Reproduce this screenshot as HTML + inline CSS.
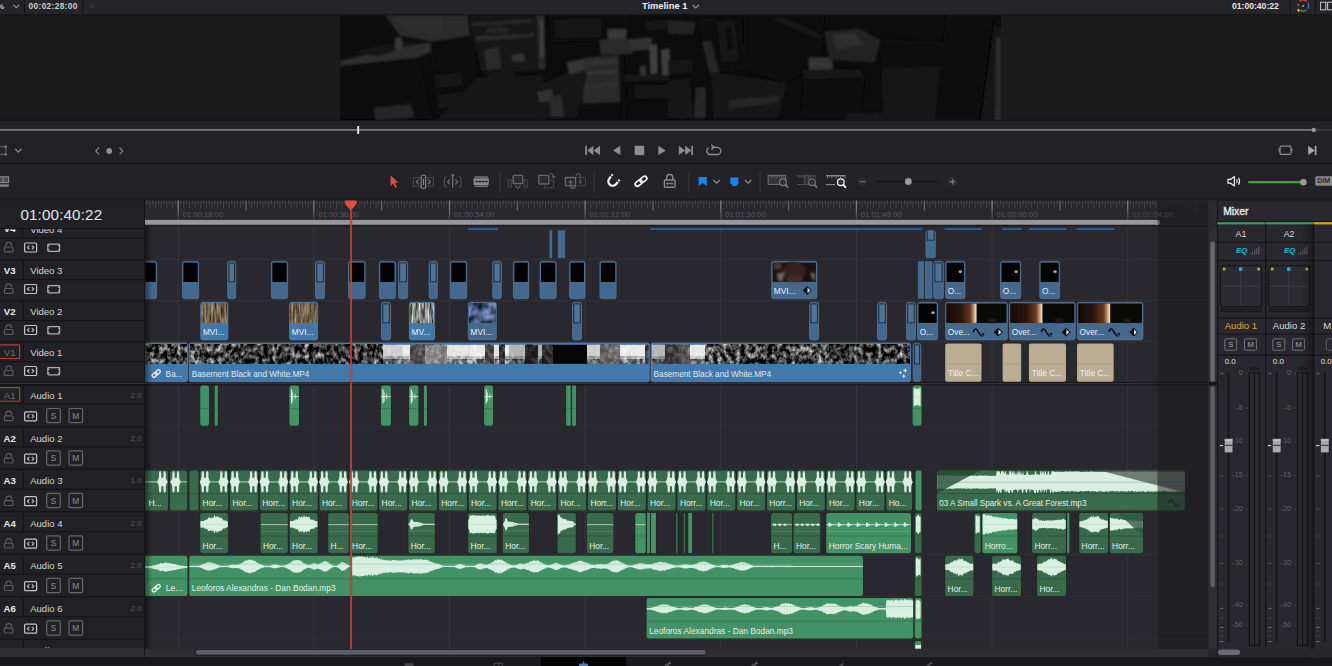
<!DOCTYPE html>
<html><head><meta charset="utf-8"><title>Timeline 1</title>
<style>
html,body{margin:0;padding:0;background:#1e1e22;}
body{width:1332px;height:666px;overflow:hidden;position:relative;font-family:"Liberation Sans", sans-serif;}
#root{position:absolute;left:0;top:0;width:1332px;height:666px;overflow:hidden;}
#root div{position:absolute;box-sizing:border-box;}
svg{position:absolute;left:0;top:0;}
</style></head><body><div id="root">
<svg width="1332" height="666" viewBox="0 0 1332 666">
<defs>
<filter id="blur3" x="-20%" y="-20%" width="140%" height="140%"><feGaussianBlur stdDeviation="3"/></filter>
<filter id="blur1" x="-20%" y="-20%" width="140%" height="140%"><feGaussianBlur stdDeviation="1.2"/></filter>
<filter id="blur6" x="-30%" y="-30%" width="160%" height="160%"><feGaussianBlur stdDeviation="6"/></filter>
<filter id="nzD" x="0" y="0" width="100%" height="100%" color-interpolation-filters="sRGB"><feTurbulence type="fractalNoise" baseFrequency="0.22 0.17" numOctaves="4" seed="5"/><feColorMatrix type="matrix" values="1.8 0 0 0 -0.64  1.8 0 0 0 -0.64  1.8 0 0 0 -0.64  0 0 0 0 1"/></filter>
<filter id="nzB" x="0" y="0" width="100%" height="100%" color-interpolation-filters="sRGB"><feTurbulence type="fractalNoise" baseFrequency="0.08 0.14" numOctaves="3" seed="11"/><feColorMatrix type="matrix" values="3.4 0 0 0 -1.1  3.4 0 0 0 -1.1  3.4 0 0 0 -1.1  0 0 0 0 1"/></filter>
<filter id="nzW" x="0" y="0" width="100%" height="100%" color-interpolation-filters="sRGB"><feTurbulence type="fractalNoise" baseFrequency="0.6 0.06" numOctaves="3" seed="8"/><feColorMatrix type="matrix" values="0.8 0 0 0 0.04  0.72 0 0 0 0.02  0.6 0 0 0 0.0  0 0 0 0 1"/></filter>
<filter id="nzG" x="0" y="0" width="100%" height="100%" color-interpolation-filters="sRGB"><feTurbulence type="fractalNoise" baseFrequency="0.5 0.05" numOctaves="3" seed="4"/><feColorMatrix type="matrix" values="1.5 0 0 0 -0.2  1.5 0 0 0 -0.2  1.5 0 0 0 -0.2  0 0 0 0 1"/></filter>
<filter id="nzBl" x="0" y="0" width="100%" height="100%" color-interpolation-filters="sRGB"><feTurbulence type="fractalNoise" baseFrequency="0.12 0.1" numOctaves="2" seed="9"/><feColorMatrix type="matrix" values="1.0 0 0 0 -0.22  1.15 0 0 0 -0.22  1.35 0 0 0 -0.18  0 0 0 0 1"/></filter>
<clipPath id="tlclip"><rect x="145.2" y="226" width="1063.3" height="423"/></clipPath>
<clipPath id="viewclip"><rect x="340" y="15" width="661" height="105"/></clipPath>
</defs>
<rect x="0.00" y="0.00" width="1332.00" height="14.30" fill="#242429"/>
<rect x="0.00" y="14.30" width="1332.00" height="1.00" fill="#141417"/>
<rect x="0.00" y="15.30" width="1332.00" height="105.00" fill="#1b1b1b"/>
<rect x="0.00" y="120.00" width="1332.00" height="44.00" fill="#222226"/>
<rect x="0.00" y="119.80" width="1332.00" height="1.20" fill="#151517"/>
<rect x="0.00" y="163.00" width="1332.00" height="1.20" fill="#141417"/>
<rect x="0.00" y="164.20" width="1332.00" height="36.00" fill="#232327"/>
<rect x="0.00" y="199.60" width="1332.00" height="1.00" fill="#141417"/>
<rect x="0.00" y="200.50" width="145.00" height="457.00" fill="#212125"/>
<rect x="145.00" y="200.50" width="1063.50" height="448.50" fill="#28282e"/>
<rect x="144.00" y="200.50" width="1.20" height="457.00" fill="#141417"/>
<rect x="24.00" y="0.00" width="1.00" height="14.30" fill="#141417"/>
<rect x="82.30" y="0.00" width="1.00" height="14.30" fill="#141417"/>
<rect x="1289.50" y="0.00" width="1.00" height="14.30" fill="#141417"/>
<rect x="1315.00" y="0.00" width="1.00" height="14.30" fill="#141417"/>
<path d="M13.5 4.8 L16.3 7.8 L19.1 4.8" fill="none" stroke="#9a9a9e" stroke-width="1.1" />
<circle cx="92.3" cy="6" r="2" fill="none" stroke="#3a3a40" stroke-width="1"/>
<path d="M692.6 4.8 L695.8 8 L699 4.8" fill="none" stroke="#9a9a9e" stroke-width="1.1" />
<g fill="none" stroke-width="1.3"><path d="M1299.4 1.4 A5.4 5.4 0 0 1 1307 1.6" stroke="#d9463a"/><path d="M1308 2.8 A5.4 5.4 0 0 1 1307.6 8.8" stroke="#3f6fd1"/><path d="M1306.4 10 A5.4 5.4 0 0 1 1300.6 10.4" stroke="#43a047"/></g><circle cx="1303.2" cy="6" r="1.1" fill="#d98a50"/><path d="M1298.6 8.2 l0.7 1.4 1.4 0.7 -1.4 0.7 -0.7 1.4 -0.7 -1.4 -1.4 -0.7 1.4 -0.7z" fill="#e0b040"/><path d="M1298.2 3.6 l0.4 0.9 0.9 0.4 -0.9 0.4 -0.4 0.9 -0.4 -0.9 -0.9 -0.4 0.9 -0.4z" fill="#e0b040"/>
<rect x="1320.60" y="2.20" width="5.20" height="7.60" fill="none" stroke="#c8c8c8" stroke-width="1"/>
<rect x="1327.60" y="2.20" width="5.20" height="7.60" fill="none" stroke="#c8c8c8" stroke-width="1"/>
<g clip-path="url(#viewclip)">
<rect x="340" y="15" width="661" height="105" fill="#0c0c0c"/>
<g filter="url(#blur1)">
<polygon points="339.8,15.0 384.9,15.0 399.9,37.1 339.8,62.1" fill="#090909"/>
<polygon points="384.9,15.0 467.6,15.0 470.1,37.1 453.8,43.3 431.2,41.6 399.9,35.8" fill="#292929"/>
<polygon points="393.6,17.0 441.3,16.0 443.8,32.1 411.2,34.6" fill="#2f2f2f"/>
<polygon points="339.8,60.9 398.7,47.1 437.5,41.6 445.0,44.6 418.7,57.6 339.8,66.1" fill="#2f2f2f"/>
<polygon points="351.0,52.1 396.2,42.1 421.2,42.1 378.6,56.6" fill="#121212"/>
<polygon points="394.9,38.3 401.7,37.6 402.7,49.6 395.6,50.6" fill="#383838"/>
<polygon points="339.8,66.1 418.7,57.6 432.5,119.8 339.8,119.8" fill="#090909"/>
<polygon points="430.0,42.1 472.6,35.1 480.1,87.2 471.3,112.3 436.3,114.8" fill="#0b0b0b"/>
<polygon points="434.2,75.2 461.3,72.2 462.6,85.2 435.7,88.2" fill="#151515"/>
<polygon points="436.8,95.2 464.3,91.7 465.1,105.2 438.3,108.7" fill="#151515"/>
<polygon points="373.6,107.7 411.2,104.2 414.2,117.3 376.1,120.3" fill="#272727"/>
<polygon points="468.8,15.0 536.5,15.0 536.5,70.9 481.4,72.2 472.6,35.8" fill="#121212"/>
<polygon points="471.3,22.5 531.5,19.0 532.0,23.0 471.8,26.5" fill="#272727"/>
<polygon points="475.3,36.1 534.0,33.6 534.0,37.1 476.4,41.1" fill="#292929"/>
<polygon points="486.4,27.0 508.9,27.5 508.9,33.6 486.4,34.1" fill="#232323"/>
<polygon points="483.9,49.6 498.9,47.1 501.4,68.6 486.4,70.1" fill="#292929"/>
<polygon points="501.4,49.6 526.5,47.1 529.0,62.1 508.9,65.6" fill="#161616"/>
<polygon points="511.4,54.6 524.0,53.4 525.2,60.9 512.7,62.1" fill="#323232"/>
<polygon points="536.5,15.0 544.5,15.0 545.5,69.1 538.0,70.1" fill="#2b2b2b"/>
<polygon points="540.5,19.5 543.0,19.5 543.5,57.1 541.0,57.6" fill="#434343"/>
<polygon points="476.4,77.7 544.0,74.7 544.0,119.8 436.3,119.8" fill="#121212"/>
<polygon points="486.4,73.4 511.4,70.1 516.5,77.7 488.9,80.9" fill="#191919"/>
<polygon points="549.0,15.0 629.2,15.0 629.2,39.6 551.5,42.1" fill="#0f0f0f"/>
<polygon points="554.5,20.0 600.7,19.0 601.2,36.6 555.5,38.1" fill="#191919"/>
<polygon points="607.2,29.5 626.7,29.0 625.7,39.1 608.2,39.6" fill="#373737"/>
<polygon points="599.2,40.1 631.7,39.1 632.7,54.1 600.7,55.1" fill="#2a2a2a"/>
<polygon points="629.2,39.6 651.8,37.1 652.3,49.6 631.7,51.1" fill="#303030"/>
<polygon points="584.1,57.6 618.7,55.1 620.2,102.2 582.6,103.7" fill="#2b2b2b"/>
<polygon points="586.6,62.1 616.7,60.1 617.2,63.1 587.1,65.1" fill="#363636"/>
<polygon points="586.6,72.2 616.7,70.1 617.2,73.2 587.1,75.2" fill="#353535"/>
<polygon points="585.6,84.7 617.7,82.7 618.2,85.7 586.1,87.7" fill="#323232"/>
<polygon points="536.5,87.2 584.1,64.6 586.6,77.2 576.6,117.3 544.0,117.3" fill="#151515"/>
<polygon points="566.6,62.1 584.1,59.1 585.6,70.1 569.1,74.7" fill="#363636"/>
<polygon points="536.5,92.2 551.5,88.7 554.5,99.7 539.5,102.7" fill="#303030"/>
<polygon points="549.0,97.2 561.6,94.7 564.1,117.3 551.0,117.3" fill="#292929"/>
<polygon points="624.2,74.7 669.8,73.7 669.8,80.7 624.2,81.7" fill="#141414"/>
<polygon points="634.2,85.2 669.8,84.2 669.8,97.7 635.2,98.7" fill="#171717"/>
<polygon points="649.3,45.1 657.3,44.1 657.8,73.2 650.3,74.2" fill="#3f3f3f"/>
<polygon points="660.8,49.6 669.8,48.6 669.8,74.7 661.8,75.2" fill="#3c3c3c"/>
<polygon points="639.8,65.9 645.8,65.4 646.3,75.2 640.3,75.7" fill="#363636"/>
<polygon points="644.3,22.0 669.8,19.5 669.8,29.5 646.8,31.0" fill="#191919"/>
<polygon points="620.7,57.1 624.2,57.1 626.7,119.8 621.7,119.8" fill="#080808"/>
<polygon points="668.0,19.6 695.7,22.1 693.2,34.7 668.0,33.7" fill="#232323"/>
<polygon points="668.0,59.9 693.2,58.9 692.2,72.5 668.0,73.6" fill="#171717"/>
<polygon points="668.0,80.1 690.7,78.1 693.2,118.0 668.0,119.0" fill="#121212"/>
<polygon points="695.7,87.7 705.8,86.7 705.8,118.0 694.2,118.0" fill="#272727"/>
<polygon points="698.3,19.6 741.2,18.1 743.7,70.0 710.9,71.5" fill="#111111"/>
<polygon points="717.4,22.1 734.1,21.1 738.6,59.9 722.0,61.4" fill="#171717"/>
<polygon points="724.8,27.1 730.6,26.6 733.1,49.8 727.5,50.8" fill="#0f0f0f"/>
<polygon points="702.1,42.3 710.9,41.0 722.2,85.2 713.4,87.7" fill="#272727"/>
<polygon points="710.9,71.5 786.6,83.1 779.0,118.0 713.4,118.0" fill="#131313"/>
<polygon points="718.5,75.1 776.5,84.1 774.0,95.2 721.0,89.2" fill="#191919"/>
<polygon points="728.5,100.3 779.0,95.2 778.5,102.8 729.0,108.9" fill="#272727"/>
<polygon points="755.8,55.4 781.0,64.0 779.0,75.6 756.8,69.0" fill="#363636"/>
<polygon points="743.7,15.0 824.4,15.0 821.9,62.5 786.6,82.6 743.7,70.0" fill="#080808"/>
<polygon points="768.9,18.1 784.0,17.0 824.4,36.2 819.4,39.7" fill="#171717"/>
<polygon points="808.3,57.9 832.0,56.9 833.0,71.5 809.8,73.0" fill="#363636"/>
<polygon points="824.4,31.2 859.7,28.6 880.4,39.7 874.9,62.5 829.5,59.9" fill="#232323"/>
<polygon points="832.0,34.7 854.7,32.7 864.8,44.8 837.0,49.8" fill="#2d2d2d"/>
<polygon points="801.7,70.0 859.7,69.0 864.8,77.6 804.2,80.1" fill="#121212"/>
<polygon points="804.2,80.1 864.8,78.1 859.7,118.0 801.7,118.0" fill="#0a0a0a"/>
<polygon points="879.9,39.7 953.1,41.8 945.5,65.5 882.4,67.0" fill="#0b0b0b"/>
<polygon points="882.4,68.0 946.5,65.5 941.5,118.0 882.9,118.0" fill="#131313"/>
<polygon points="885.0,85.2 943.0,75.1 942.0,95.2 885.5,102.8" fill="#171717"/>
<polygon points="945.5,15.0 993.9,15.0 979.3,120.5 935.4,120.5" fill="#070707"/>
<polygon points="993.9,27.1 1001.5,27.1 1001.5,120.5 980.8,120.5" fill="#131313"/>
<polygon points="996.0,37.2 1001.5,37.2 1001.5,120.5 994.9,120.5" fill="#292929"/>
<polygon points="844.6,112.9 935.4,111.9 935.4,120.5 844.6,120.5" fill="#121212"/>
</g>
</g>
<rect x="0.00" y="129.20" width="1313.50" height="1.40" fill="#8c8c90"/>
<rect x="1313.50" y="129.40" width="20.00" height="1.00" fill="#4a4a4e"/>
<rect x="357.30" y="126.00" width="1.80" height="8.00" fill="#f2f2f2"/>
<circle cx="1313.8" cy="129.9" r="2.2" fill="#9a9a9e"/>
<path d="M0 146.6 H5.8 V154.4 H0" fill="none" stroke="#5e5e62" stroke-width="1.1" />
<rect x="4.80" y="145.60" width="2.00" height="2.00" fill="#8a8a8e"/>
<rect x="4.80" y="153.40" width="2.00" height="2.00" fill="#8a8a8e"/>
<path d="M15.3 149 L18.3 152.2 L21.3 149" fill="none" stroke="#8a8a8e" stroke-width="1.2" />
<path d="M99 147.5 L95.8 150.9 L99 154.3" fill="none" stroke="#8a8a8e" stroke-width="1.1" />
<circle cx="109.2" cy="151" r="2.9" fill="#8e8e92"/>
<path d="M119.6 147.5 L122.8 150.9 L119.6 154.3" fill="none" stroke="#8a8a8e" stroke-width="1.1" />
<rect x="585.20" y="145.80" width="1.70" height="9.20" fill="#8e8e92"/>
<path d="M593.4 145.8 L587.2 150.4 L593.4 155 Z" fill="#8e8e92" stroke="none" stroke-width="1" />
<path d="M600 145.8 L593.6 150.4 L600 155 Z" fill="#8e8e92" stroke="none" stroke-width="1" />
<path d="M620.3 145.8 L613 150.4 L620.3 155 Z" fill="#8e8e92" stroke="none" stroke-width="1" />
<rect x="634.70" y="145.80" width="9.50" height="9.30" fill="#8e8e92"/>
<path d="M658.4 145.8 L665.8 150.4 L658.4 155 Z" fill="#8e8e92" stroke="none" stroke-width="1" />
<path d="M678.8 145.8 L685.2 150.4 L678.8 155 Z" fill="#8e8e92" stroke="none" stroke-width="1" />
<path d="M685.2 145.8 L691.4 150.4 L685.2 155 Z" fill="#8e8e92" stroke="none" stroke-width="1" />
<rect x="691.30" y="145.80" width="1.70" height="9.20" fill="#8e8e92"/>
<path d="M711.5 147.3 H717.2 A3.6 3.6 0 0 1 717.2 154.5 H710.2 A3.6 3.6 0 0 1 708.6 147.8" fill="none" stroke="#8e8e92" stroke-width="1.3" />
<path d="M711.2 144.8 L714 147.3 L711.2 149.9" fill="none" stroke="#8e8e92" stroke-width="1.2" />
<rect x="1280.00" y="146.20" width="11.00" height="8.20" fill="none" rx="1.2" stroke="#8e8e92" stroke-width="1.2"/>
<path d="M1278.6 148.6 L1280.8 150.3 L1278.6 152 Z" fill="#8e8e92" stroke="none" stroke-width="1" />
<path d="M1292.4 148.6 L1290.2 150.3 L1292.4 152 Z" fill="#8e8e92" stroke="none" stroke-width="1" />
<path d="M1308.2 145.8 L1314.8 150.4 L1308.2 155 Z" fill="#a8a8ac" stroke="none" stroke-width="1" />
<rect x="1314.80" y="145.80" width="1.70" height="9.20" fill="#a8a8ac"/>
<rect x="-1.00" y="176.80" width="9.60" height="5.80" fill="#4a4a4e" stroke="#8a8a8e" stroke-width="1.1"/>
<rect x="2.40" y="176.80" width="1.00" height="5.80" fill="#8a8a8e"/>
<rect x="0.00" y="184.40" width="8.80" height="2.40" fill="#808084"/>
<path d="M390.6 175.6 L390.6 186 L393.2 183.6 L395.3 187.9 L396.9 187.1 L394.9 182.9 L398.4 182.6 Z" fill="#e64a3c" stroke="none" stroke-width="1" />
<rect x="413.40" y="177.60" width="20.00" height="8.60" fill="none" stroke="#4c4c50" stroke-width="1"/>
<rect x="421.20" y="175.20" width="4.40" height="13.00" fill="#232327" rx="1" stroke="#85858a" stroke-width="1.1"/>
<rect x="423.00" y="178.60" width="1.00" height="6.40" fill="#85858a"/>
<path d="M418.8 179.5 L416.4 181.9 L418.8 184.3" fill="none" stroke="#6e6e73" stroke-width="1.25" />
<path d="M428 179.5 L430.4 181.9 L428 184.3" fill="none" stroke="#6e6e73" stroke-width="1.25" />
<path d="M446.6 176.8 Q444.4 177 444.4 179.2 V184.6 Q444.4 186.8 446.6 187" fill="none" stroke="#505055" stroke-width="1.1" />
<path d="M458.8 176.8 Q461 177 461 179.2 V184.6 Q461 186.8 458.8 187" fill="none" stroke="#505055" stroke-width="1.1" />
<path d="M450 179.5 L447.6 181.9 L450 184.3" fill="none" stroke="#6e6e73" stroke-width="1.25" />
<path d="M455.4 179.5 L457.8 181.9 L455.4 184.3" fill="none" stroke="#6e6e73" stroke-width="1.25" />
<rect x="452.20" y="175.40" width="1.00" height="12.40" fill="#85858a"/>
<path d="M450.8 174.6 H454.6 L452.7 176.8 Z" fill="#85858a" stroke="none" stroke-width="1" />
<rect x="473.60" y="178.20" width="15.20" height="6.80" fill="#8a8a8e" rx="1"/>
<rect x="474.60" y="176.40" width="13.20" height="1.20" fill="#8a8a8e"/>
<rect x="474.60" y="185.60" width="13.20" height="1.20" fill="#8a8a8e"/>
<path d="M475.6 181.6 l1.1 -1.3 1.1 1.3 -1.1 1.3z" fill="#232327" stroke="none" stroke-width="1" />
<path d="M478.9 181.6 l1.1 -1.3 1.1 1.3 -1.1 1.3z" fill="#232327" stroke="none" stroke-width="1" />
<path d="M482.2 181.6 l1.1 -1.3 1.1 1.3 -1.1 1.3z" fill="#232327" stroke="none" stroke-width="1" />
<path d="M485.5 181.6 l1.1 -1.3 1.1 1.3 -1.1 1.3z" fill="#232327" stroke="none" stroke-width="1" />
<rect x="475.60" y="181.20" width="12.00" height="0.80" fill="#232327"/>
<rect x="499.40" y="171.20" width="1.00" height="21.00" fill="#39393e"/>
<rect x="593.60" y="171.20" width="1.00" height="21.00" fill="#39393e"/>
<rect x="688.60" y="171.20" width="1.00" height="21.00" fill="#39393e"/>
<rect x="759.60" y="171.20" width="1.00" height="21.00" fill="#39393e"/>
<rect x="513.20" y="175.40" width="9.50" height="8.30" fill="#2c2c31" rx="0.8" stroke="#68686c" stroke-width="1.3"/>
<rect x="508.40" y="179.50" width="2.80" height="7.80" fill="none" rx="0.6" stroke="#47474b" stroke-width="1.1"/>
<rect x="524.30" y="179.50" width="2.80" height="7.80" fill="none" rx="0.6" stroke="#47474b" stroke-width="1.1"/>
<path d="M515.2 185.7 L517.9 188.3 L520.6 185.7" fill="none" stroke="#5a5a5e" stroke-width="1.2" />
<path d="M544.4 185 V187.8 H553.6 V180.2 H550" fill="none" stroke="#47474b" stroke-width="1.1" />
<rect x="538.80" y="175.40" width="10.00" height="8.60" fill="#2c2c31" rx="0.8" stroke="#68686c" stroke-width="1.3"/>
<path d="M549.6 173.6 Q553.6 173.4 553.8 177.4" fill="none" stroke="#5a5a5e" stroke-width="1.1" />
<path d="M552 176.2 L553.8 178 L555.5 176.2" fill="none" stroke="#5a5a5e" stroke-width="1.1" />
<path d="M577 177.5 H584.6 Q585.6 177.5 585.6 178.5 V184.8 Q585.6 185.8 584.6 185.8 H577" fill="none" stroke="#47474b" stroke-width="1.1" />
<rect x="565.30" y="177.50" width="10.30" height="8.30" fill="#29292e" rx="1" stroke="#68686c" stroke-width="1.3"/>
<path d="M570.6 181 V186.6 Q570.8 188.4 572.8 188.4 Q575 188.4 575.3 186.2" fill="none" stroke="#68686c" stroke-width="1.2" />
<path d="M568.7 182.8 L570.6 180.9 L572.5 182.8" fill="none" stroke="#68686c" stroke-width="1.2" />
<path d="M580.3 183 V175.6 Q580.1 173.7 578.2 173.7 Q576.2 173.7 576 176.2" fill="none" stroke="#5a5a5e" stroke-width="1.1" />
<path d="M578.5 181.3 L580.3 183.1 L582.1 181.3" fill="none" stroke="#5a5a5e" stroke-width="1.1" />
<g transform="rotate(38 613 181)" fill="none" stroke="#f2f2f2" stroke-width="2.3"><path d="M608.6 176 V181.4 A4.4 4.4 0 0 0 617.4 181.4 V176"/></g>
<g transform="rotate(38 613 181)" fill="#232327"><rect x="607" y="177.6" width="3.4" height="1.1"/><rect x="615.8" y="177.6" width="3.4" height="1.1"/></g>
<g transform="rotate(-38 641 181.2)" fill="none" stroke="#f2f2f2" stroke-width="1.7"><rect x="634.2" y="179" width="7.6" height="4.4" rx="2.2"/><rect x="640.2" y="179" width="7.6" height="4.4" rx="2.2"/></g>
<path d="M666.6 180 V177.6 A3.1 3.1 0 0 1 672.8 177.6 V180" fill="none" stroke="#8a8a8e" stroke-width="1.4" />
<rect x="664.40" y="180.00" width="10.60" height="7.20" fill="none" rx="1" stroke="#8a8a8e" stroke-width="1.4"/>
<path d="M666.6 183.6 H672.8 M668 182.2 L666.6 183.6 L668 185 M671.4 182.2 L672.8 183.6 L671.4 185" fill="none" stroke="#8a8a8e" stroke-width="0.9" />
<path d="M698.6 177 H706.8 V186.2 L702.7 183 L698.6 186.2 Z" fill="#1884e8" stroke="none" stroke-width="1" />
<path d="M713.4 180 L716.6 183.2 L719.8 180" fill="none" stroke="#8a8a8e" stroke-width="1.2" />
<path d="M730.4 177.4 H738.4 V183.4 L736 186 H732.8 L730.4 183.4 Z" fill="#1884e8" stroke="none" stroke-width="1" />
<path d="M745 180 L748.2 183.2 L751.4 180" fill="none" stroke="#8a8a8e" stroke-width="1.2" />
<rect x="768.20" y="175.40" width="17.40" height="9.00" fill="#343438" stroke="#6e6e73" stroke-width="1.1"/>
<rect x="770.20" y="175.40" width="0.80" height="1.80" fill="#6e6e73"/>
<rect x="772.40" y="175.40" width="0.80" height="2.80" fill="#6e6e73"/>
<rect x="774.60" y="175.40" width="0.80" height="1.80" fill="#6e6e73"/>
<rect x="776.80" y="175.40" width="0.80" height="2.80" fill="#6e6e73"/>
<rect x="779.00" y="175.40" width="0.80" height="1.80" fill="#6e6e73"/>
<rect x="781.20" y="175.40" width="0.80" height="2.80" fill="#6e6e73"/>
<rect x="783.40" y="175.40" width="0.80" height="1.80" fill="#6e6e73"/>
<circle cx="783.0" cy="182.2" r="3.3" fill="#232327" stroke="#7c7c80" stroke-width="1.3"/>
<circle cx="783.0" cy="182.2" r="1.4" fill="#3a3a3e"/>
<line x1="785.60" y1="185.00" x2="787.60" y2="187.20" stroke="#7c7c80" stroke-width="1.9" stroke-linecap="round"/>
<rect x="797.20" y="175.40" width="19.00" height="1.00" fill="#505055"/>
<rect x="797.20" y="184.00" width="8.00" height="1.00" fill="#505055"/>
<rect x="804.80" y="175.40" width="4.20" height="9.00" fill="#2e2e32" stroke="#505055" stroke-width="1.1"/>
<rect x="798.20" y="175.40" width="0.80" height="2.60" fill="#505055"/>
<rect x="800.60" y="175.40" width="0.80" height="2.60" fill="#505055"/>
<rect x="803.00" y="175.40" width="0.80" height="2.60" fill="#505055"/>
<rect x="805.40" y="175.40" width="0.80" height="2.60" fill="#505055"/>
<rect x="807.80" y="175.40" width="0.80" height="2.60" fill="#505055"/>
<rect x="810.20" y="175.40" width="0.80" height="2.60" fill="#505055"/>
<rect x="812.60" y="175.40" width="0.80" height="2.60" fill="#505055"/>
<rect x="815.00" y="175.40" width="0.80" height="2.60" fill="#505055"/>
<circle cx="812.0" cy="182.2" r="3.3" fill="#232327" stroke="#707075" stroke-width="1.3"/>
<circle cx="812.0" cy="182.2" r="1.4" fill="#3a3a3e"/>
<line x1="814.60" y1="185.00" x2="816.60" y2="187.20" stroke="#707075" stroke-width="1.9" stroke-linecap="round"/>
<rect x="826.00" y="175.00" width="19.40" height="1.20" fill="#8a8a8e"/>
<rect x="826.00" y="184.00" width="9.00" height="1.20" fill="#8a8a8e"/>
<rect x="827.00" y="175.00" width="0.90" height="3.40" fill="#8a8a8e"/>
<rect x="829.20" y="175.00" width="0.90" height="2.20" fill="#8a8a8e"/>
<rect x="831.40" y="175.00" width="0.90" height="3.40" fill="#8a8a8e"/>
<rect x="833.60" y="175.00" width="0.90" height="2.20" fill="#8a8a8e"/>
<rect x="835.80" y="175.00" width="0.90" height="3.40" fill="#8a8a8e"/>
<rect x="838.00" y="175.00" width="0.90" height="2.20" fill="#8a8a8e"/>
<rect x="840.20" y="175.00" width="0.90" height="3.40" fill="#8a8a8e"/>
<rect x="842.40" y="175.00" width="0.90" height="2.20" fill="#8a8a8e"/>
<rect x="844.60" y="175.00" width="0.90" height="3.40" fill="#8a8a8e"/>
<circle cx="840.8" cy="182.2" r="3.3" fill="#232327" stroke="#f4f4f4" stroke-width="1.3"/>
<circle cx="840.8" cy="182.2" r="1.4" fill="#3a3a3e"/>
<line x1="843.40" y1="185.00" x2="845.40" y2="187.20" stroke="#f4f4f4" stroke-width="1.9" stroke-linecap="round"/>
<circle cx="862.4" cy="181.6" r="4.6" fill="#2b2b30"/>
<rect x="859.60" y="181.00" width="5.60" height="1.30" fill="#6a6a6e"/>
<rect x="876.40" y="180.70" width="61.60" height="1.80" fill="#141416" rx="0.9"/>
<circle cx="908.3" cy="181.5" r="3.4" fill="#9a9a9c"/>
<circle cx="952.6" cy="181.6" r="4.6" fill="#2b2b30"/>
<rect x="949.80" y="181.00" width="5.60" height="1.30" fill="#77777b"/>
<rect x="952.00" y="178.80" width="1.30" height="5.60" fill="#77777b"/>
<path d="M1228 179.4 H1230.6 L1234.4 176.6 V186 L1230.6 183.2 H1228 Z" fill="none" stroke="#f0f0f0" stroke-width="1.2" stroke-linejoin="round"/>
<path d="M1236.6 179.4 Q1237.8 181.3 1236.6 183.2" fill="none" stroke="#f0f0f0" stroke-width="1.1" />
<path d="M1238.6 177.8 Q1240.6 181.3 1238.6 184.8" fill="none" stroke="#f0f0f0" stroke-width="1.1" />
<rect x="1248.00" y="181.10" width="53.50" height="2.20" fill="#37a62f" rx="1"/>
<circle cx="1303.4" cy="182.2" r="3.3" fill="#9a9a9c"/>
<rect x="1315.30" y="176.20" width="20.00" height="9.60" fill="#88888a" rx="1.5"/>
<rect x="145.00" y="200.50" width="1063.50" height="25.50" fill="#28282e"/>
<linearGradient id="majg" x1="0" x2="0" y1="0" y2="1"><stop offset="0" stop-color="#8c8c92"/><stop offset="0.35" stop-color="#77777d"/><stop offset="1" stop-color="#38383e"/></linearGradient>
<linearGradient id="majd" x1="0" x2="0" y1="0" y2="1"><stop offset="0" stop-color="#4c4c52"/><stop offset="1" stop-color="#2e2e33"/></linearGradient>
<rect x="146.66" y="200.80" width="0.90" height="3.40" fill="#505056"/>
<rect x="149.49" y="200.80" width="0.90" height="7.40" fill="#45454b"/>
<rect x="152.32" y="200.80" width="0.90" height="3.40" fill="#505056"/>
<rect x="155.14" y="200.80" width="0.90" height="7.40" fill="#45454b"/>
<rect x="157.97" y="200.80" width="0.90" height="3.40" fill="#505056"/>
<rect x="160.79" y="200.80" width="0.90" height="7.40" fill="#45454b"/>
<rect x="163.62" y="200.80" width="0.90" height="3.40" fill="#505056"/>
<rect x="166.45" y="200.80" width="0.90" height="7.40" fill="#45454b"/>
<rect x="169.27" y="200.80" width="0.90" height="3.40" fill="#505056"/>
<rect x="172.10" y="200.80" width="0.90" height="7.40" fill="#45454b"/>
<rect x="174.92" y="200.80" width="0.90" height="3.40" fill="#505056"/>
<rect x="177.55" y="200.60" width="1.30" height="19.40" fill="url(#majg)"/>
<rect x="180.58" y="200.80" width="0.90" height="3.40" fill="#505056"/>
<rect x="183.40" y="200.80" width="0.90" height="7.40" fill="#45454b"/>
<rect x="186.23" y="200.80" width="0.90" height="3.40" fill="#505056"/>
<rect x="189.05" y="200.80" width="0.90" height="7.40" fill="#45454b"/>
<rect x="191.88" y="200.80" width="0.90" height="3.40" fill="#505056"/>
<rect x="194.71" y="200.80" width="0.90" height="7.40" fill="#45454b"/>
<rect x="197.53" y="200.80" width="0.90" height="3.40" fill="#505056"/>
<rect x="200.36" y="200.80" width="0.90" height="7.40" fill="#45454b"/>
<rect x="203.18" y="200.80" width="0.90" height="3.40" fill="#505056"/>
<rect x="206.01" y="200.80" width="0.90" height="7.40" fill="#45454b"/>
<rect x="208.84" y="200.80" width="0.90" height="3.40" fill="#505056"/>
<rect x="211.66" y="200.80" width="0.90" height="7.40" fill="#45454b"/>
<rect x="214.49" y="200.80" width="0.90" height="3.40" fill="#505056"/>
<rect x="217.31" y="200.80" width="0.90" height="7.40" fill="#45454b"/>
<rect x="220.14" y="200.80" width="0.90" height="3.40" fill="#505056"/>
<rect x="222.97" y="200.80" width="0.90" height="7.40" fill="#45454b"/>
<rect x="225.79" y="200.80" width="0.90" height="3.40" fill="#505056"/>
<rect x="228.62" y="200.80" width="0.90" height="7.40" fill="#45454b"/>
<rect x="231.44" y="200.80" width="0.90" height="3.40" fill="#505056"/>
<rect x="234.27" y="200.80" width="0.90" height="7.40" fill="#45454b"/>
<rect x="237.10" y="200.80" width="0.90" height="3.40" fill="#505056"/>
<rect x="239.92" y="200.80" width="0.90" height="7.40" fill="#45454b"/>
<rect x="242.75" y="200.80" width="0.90" height="3.40" fill="#505056"/>
<rect x="245.47" y="200.60" width="1.10" height="10.00" fill="#6a6a70"/>
<rect x="248.40" y="200.80" width="0.90" height="3.40" fill="#505056"/>
<rect x="251.23" y="200.80" width="0.90" height="7.40" fill="#45454b"/>
<rect x="254.05" y="200.80" width="0.90" height="3.40" fill="#505056"/>
<rect x="256.88" y="200.80" width="0.90" height="7.40" fill="#45454b"/>
<rect x="259.71" y="200.80" width="0.90" height="3.40" fill="#505056"/>
<rect x="262.53" y="200.80" width="0.90" height="7.40" fill="#45454b"/>
<rect x="265.36" y="200.80" width="0.90" height="3.40" fill="#505056"/>
<rect x="268.18" y="200.80" width="0.90" height="7.40" fill="#45454b"/>
<rect x="271.01" y="200.80" width="0.90" height="3.40" fill="#505056"/>
<rect x="273.84" y="200.80" width="0.90" height="7.40" fill="#45454b"/>
<rect x="276.66" y="200.80" width="0.90" height="3.40" fill="#505056"/>
<rect x="279.49" y="200.80" width="0.90" height="7.40" fill="#45454b"/>
<rect x="282.31" y="200.80" width="0.90" height="3.40" fill="#505056"/>
<rect x="285.14" y="200.80" width="0.90" height="7.40" fill="#45454b"/>
<rect x="287.97" y="200.80" width="0.90" height="3.40" fill="#505056"/>
<rect x="290.79" y="200.80" width="0.90" height="7.40" fill="#45454b"/>
<rect x="293.62" y="200.80" width="0.90" height="3.40" fill="#505056"/>
<rect x="296.44" y="200.80" width="0.90" height="7.40" fill="#45454b"/>
<rect x="299.27" y="200.80" width="0.90" height="3.40" fill="#505056"/>
<rect x="302.10" y="200.80" width="0.90" height="7.40" fill="#45454b"/>
<rect x="304.92" y="200.80" width="0.90" height="3.40" fill="#505056"/>
<rect x="307.75" y="200.80" width="0.90" height="7.40" fill="#45454b"/>
<rect x="310.57" y="200.80" width="0.90" height="3.40" fill="#505056"/>
<rect x="313.20" y="200.60" width="1.30" height="19.40" fill="url(#majg)"/>
<rect x="316.23" y="200.80" width="0.90" height="3.40" fill="#505056"/>
<rect x="319.05" y="200.80" width="0.90" height="7.40" fill="#45454b"/>
<rect x="321.88" y="200.80" width="0.90" height="3.40" fill="#505056"/>
<rect x="324.70" y="200.80" width="0.90" height="7.40" fill="#45454b"/>
<rect x="327.53" y="200.80" width="0.90" height="3.40" fill="#505056"/>
<rect x="330.36" y="200.80" width="0.90" height="7.40" fill="#45454b"/>
<rect x="333.18" y="200.80" width="0.90" height="3.40" fill="#505056"/>
<rect x="336.01" y="200.80" width="0.90" height="7.40" fill="#45454b"/>
<rect x="338.83" y="200.80" width="0.90" height="3.40" fill="#505056"/>
<rect x="341.66" y="200.80" width="0.90" height="7.40" fill="#45454b"/>
<rect x="344.49" y="200.80" width="0.90" height="3.40" fill="#505056"/>
<rect x="347.31" y="200.80" width="0.90" height="7.40" fill="#45454b"/>
<rect x="350.14" y="200.80" width="0.90" height="3.40" fill="#505056"/>
<rect x="352.96" y="200.80" width="0.90" height="7.40" fill="#45454b"/>
<rect x="355.79" y="200.80" width="0.90" height="3.40" fill="#505056"/>
<rect x="358.62" y="200.80" width="0.90" height="7.40" fill="#45454b"/>
<rect x="361.44" y="200.80" width="0.90" height="3.40" fill="#505056"/>
<rect x="364.27" y="200.80" width="0.90" height="7.40" fill="#45454b"/>
<rect x="367.09" y="200.80" width="0.90" height="3.40" fill="#505056"/>
<rect x="369.92" y="200.80" width="0.90" height="7.40" fill="#45454b"/>
<rect x="372.75" y="200.80" width="0.90" height="3.40" fill="#505056"/>
<rect x="375.57" y="200.80" width="0.90" height="7.40" fill="#45454b"/>
<rect x="378.40" y="200.80" width="0.90" height="3.40" fill="#505056"/>
<rect x="381.12" y="200.60" width="1.10" height="10.00" fill="#6a6a70"/>
<rect x="384.05" y="200.80" width="0.90" height="3.40" fill="#505056"/>
<rect x="386.88" y="200.80" width="0.90" height="7.40" fill="#45454b"/>
<rect x="389.70" y="200.80" width="0.90" height="3.40" fill="#505056"/>
<rect x="392.53" y="200.80" width="0.90" height="7.40" fill="#45454b"/>
<rect x="395.36" y="200.80" width="0.90" height="3.40" fill="#505056"/>
<rect x="398.18" y="200.80" width="0.90" height="7.40" fill="#45454b"/>
<rect x="401.01" y="200.80" width="0.90" height="3.40" fill="#505056"/>
<rect x="403.83" y="200.80" width="0.90" height="7.40" fill="#45454b"/>
<rect x="406.66" y="200.80" width="0.90" height="3.40" fill="#505056"/>
<rect x="409.49" y="200.80" width="0.90" height="7.40" fill="#45454b"/>
<rect x="412.31" y="200.80" width="0.90" height="3.40" fill="#505056"/>
<rect x="415.14" y="200.80" width="0.90" height="7.40" fill="#45454b"/>
<rect x="417.96" y="200.80" width="0.90" height="3.40" fill="#505056"/>
<rect x="420.79" y="200.80" width="0.90" height="7.40" fill="#45454b"/>
<rect x="423.62" y="200.80" width="0.90" height="3.40" fill="#505056"/>
<rect x="426.44" y="200.80" width="0.90" height="7.40" fill="#45454b"/>
<rect x="429.27" y="200.80" width="0.90" height="3.40" fill="#505056"/>
<rect x="432.09" y="200.80" width="0.90" height="7.40" fill="#45454b"/>
<rect x="434.92" y="200.80" width="0.90" height="3.40" fill="#505056"/>
<rect x="437.75" y="200.80" width="0.90" height="7.40" fill="#45454b"/>
<rect x="440.57" y="200.80" width="0.90" height="3.40" fill="#505056"/>
<rect x="443.40" y="200.80" width="0.90" height="7.40" fill="#45454b"/>
<rect x="446.22" y="200.80" width="0.90" height="3.40" fill="#505056"/>
<rect x="448.85" y="200.60" width="1.30" height="19.40" fill="url(#majg)"/>
<rect x="451.88" y="200.80" width="0.90" height="3.40" fill="#505056"/>
<rect x="454.70" y="200.80" width="0.90" height="7.40" fill="#45454b"/>
<rect x="457.53" y="200.80" width="0.90" height="3.40" fill="#505056"/>
<rect x="460.35" y="200.80" width="0.90" height="7.40" fill="#45454b"/>
<rect x="463.18" y="200.80" width="0.90" height="3.40" fill="#505056"/>
<rect x="466.01" y="200.80" width="0.90" height="7.40" fill="#45454b"/>
<rect x="468.83" y="200.80" width="0.90" height="3.40" fill="#505056"/>
<rect x="471.66" y="200.80" width="0.90" height="7.40" fill="#45454b"/>
<rect x="474.48" y="200.80" width="0.90" height="3.40" fill="#505056"/>
<rect x="477.31" y="200.80" width="0.90" height="7.40" fill="#45454b"/>
<rect x="480.14" y="200.80" width="0.90" height="3.40" fill="#505056"/>
<rect x="482.96" y="200.80" width="0.90" height="7.40" fill="#45454b"/>
<rect x="485.79" y="200.80" width="0.90" height="3.40" fill="#505056"/>
<rect x="488.61" y="200.80" width="0.90" height="7.40" fill="#45454b"/>
<rect x="491.44" y="200.80" width="0.90" height="3.40" fill="#505056"/>
<rect x="494.27" y="200.80" width="0.90" height="7.40" fill="#45454b"/>
<rect x="497.09" y="200.80" width="0.90" height="3.40" fill="#505056"/>
<rect x="499.92" y="200.80" width="0.90" height="7.40" fill="#45454b"/>
<rect x="502.74" y="200.80" width="0.90" height="3.40" fill="#505056"/>
<rect x="505.57" y="200.80" width="0.90" height="7.40" fill="#45454b"/>
<rect x="508.40" y="200.80" width="0.90" height="3.40" fill="#505056"/>
<rect x="511.22" y="200.80" width="0.90" height="7.40" fill="#45454b"/>
<rect x="514.05" y="200.80" width="0.90" height="3.40" fill="#505056"/>
<rect x="516.78" y="200.60" width="1.10" height="10.00" fill="#6a6a70"/>
<rect x="519.70" y="200.80" width="0.90" height="3.40" fill="#505056"/>
<rect x="522.53" y="200.80" width="0.90" height="7.40" fill="#45454b"/>
<rect x="525.35" y="200.80" width="0.90" height="3.40" fill="#505056"/>
<rect x="528.18" y="200.80" width="0.90" height="7.40" fill="#45454b"/>
<rect x="531.01" y="200.80" width="0.90" height="3.40" fill="#505056"/>
<rect x="533.83" y="200.80" width="0.90" height="7.40" fill="#45454b"/>
<rect x="536.66" y="200.80" width="0.90" height="3.40" fill="#505056"/>
<rect x="539.48" y="200.80" width="0.90" height="7.40" fill="#45454b"/>
<rect x="542.31" y="200.80" width="0.90" height="3.40" fill="#505056"/>
<rect x="545.14" y="200.80" width="0.90" height="7.40" fill="#45454b"/>
<rect x="547.96" y="200.80" width="0.90" height="3.40" fill="#505056"/>
<rect x="550.79" y="200.80" width="0.90" height="7.40" fill="#45454b"/>
<rect x="553.61" y="200.80" width="0.90" height="3.40" fill="#505056"/>
<rect x="556.44" y="200.80" width="0.90" height="7.40" fill="#45454b"/>
<rect x="559.27" y="200.80" width="0.90" height="3.40" fill="#505056"/>
<rect x="562.09" y="200.80" width="0.90" height="7.40" fill="#45454b"/>
<rect x="564.92" y="200.80" width="0.90" height="3.40" fill="#505056"/>
<rect x="567.74" y="200.80" width="0.90" height="7.40" fill="#45454b"/>
<rect x="570.57" y="200.80" width="0.90" height="3.40" fill="#505056"/>
<rect x="573.40" y="200.80" width="0.90" height="7.40" fill="#45454b"/>
<rect x="576.22" y="200.80" width="0.90" height="3.40" fill="#505056"/>
<rect x="579.05" y="200.80" width="0.90" height="7.40" fill="#45454b"/>
<rect x="581.87" y="200.80" width="0.90" height="3.40" fill="#505056"/>
<rect x="584.50" y="200.60" width="1.30" height="19.40" fill="url(#majg)"/>
<rect x="587.53" y="200.80" width="0.90" height="3.40" fill="#505056"/>
<rect x="590.35" y="200.80" width="0.90" height="7.40" fill="#45454b"/>
<rect x="593.18" y="200.80" width="0.90" height="3.40" fill="#505056"/>
<rect x="596.00" y="200.80" width="0.90" height="7.40" fill="#45454b"/>
<rect x="598.83" y="200.80" width="0.90" height="3.40" fill="#505056"/>
<rect x="601.66" y="200.80" width="0.90" height="7.40" fill="#45454b"/>
<rect x="604.48" y="200.80" width="0.90" height="3.40" fill="#505056"/>
<rect x="607.31" y="200.80" width="0.90" height="7.40" fill="#45454b"/>
<rect x="610.13" y="200.80" width="0.90" height="3.40" fill="#505056"/>
<rect x="612.96" y="200.80" width="0.90" height="7.40" fill="#45454b"/>
<rect x="615.79" y="200.80" width="0.90" height="3.40" fill="#505056"/>
<rect x="618.61" y="200.80" width="0.90" height="7.40" fill="#45454b"/>
<rect x="621.44" y="200.80" width="0.90" height="3.40" fill="#505056"/>
<rect x="624.26" y="200.80" width="0.90" height="7.40" fill="#45454b"/>
<rect x="627.09" y="200.80" width="0.90" height="3.40" fill="#505056"/>
<rect x="629.92" y="200.80" width="0.90" height="7.40" fill="#45454b"/>
<rect x="632.74" y="200.80" width="0.90" height="3.40" fill="#505056"/>
<rect x="635.57" y="200.80" width="0.90" height="7.40" fill="#45454b"/>
<rect x="638.39" y="200.80" width="0.90" height="3.40" fill="#505056"/>
<rect x="641.22" y="200.80" width="0.90" height="7.40" fill="#45454b"/>
<rect x="644.05" y="200.80" width="0.90" height="3.40" fill="#505056"/>
<rect x="646.87" y="200.80" width="0.90" height="7.40" fill="#45454b"/>
<rect x="649.70" y="200.80" width="0.90" height="3.40" fill="#505056"/>
<rect x="652.43" y="200.60" width="1.10" height="10.00" fill="#6a6a70"/>
<rect x="655.35" y="200.80" width="0.90" height="3.40" fill="#505056"/>
<rect x="658.18" y="200.80" width="0.90" height="7.40" fill="#45454b"/>
<rect x="661.00" y="200.80" width="0.90" height="3.40" fill="#505056"/>
<rect x="663.83" y="200.80" width="0.90" height="7.40" fill="#45454b"/>
<rect x="666.66" y="200.80" width="0.90" height="3.40" fill="#505056"/>
<rect x="669.48" y="200.80" width="0.90" height="7.40" fill="#45454b"/>
<rect x="672.31" y="200.80" width="0.90" height="3.40" fill="#505056"/>
<rect x="675.13" y="200.80" width="0.90" height="7.40" fill="#45454b"/>
<rect x="677.96" y="200.80" width="0.90" height="3.40" fill="#505056"/>
<rect x="680.79" y="200.80" width="0.90" height="7.40" fill="#45454b"/>
<rect x="683.61" y="200.80" width="0.90" height="3.40" fill="#505056"/>
<rect x="686.44" y="200.80" width="0.90" height="7.40" fill="#45454b"/>
<rect x="689.26" y="200.80" width="0.90" height="3.40" fill="#505056"/>
<rect x="692.09" y="200.80" width="0.90" height="7.40" fill="#45454b"/>
<rect x="694.92" y="200.80" width="0.90" height="3.40" fill="#505056"/>
<rect x="697.74" y="200.80" width="0.90" height="7.40" fill="#45454b"/>
<rect x="700.57" y="200.80" width="0.90" height="3.40" fill="#505056"/>
<rect x="703.39" y="200.80" width="0.90" height="7.40" fill="#45454b"/>
<rect x="706.22" y="200.80" width="0.90" height="3.40" fill="#505056"/>
<rect x="709.05" y="200.80" width="0.90" height="7.40" fill="#45454b"/>
<rect x="711.87" y="200.80" width="0.90" height="3.40" fill="#505056"/>
<rect x="714.70" y="200.80" width="0.90" height="7.40" fill="#45454b"/>
<rect x="717.52" y="200.80" width="0.90" height="3.40" fill="#505056"/>
<rect x="720.15" y="200.60" width="1.30" height="19.40" fill="url(#majg)"/>
<rect x="723.18" y="200.80" width="0.90" height="3.40" fill="#505056"/>
<rect x="726.00" y="200.80" width="0.90" height="7.40" fill="#45454b"/>
<rect x="728.83" y="200.80" width="0.90" height="3.40" fill="#505056"/>
<rect x="731.65" y="200.80" width="0.90" height="7.40" fill="#45454b"/>
<rect x="734.48" y="200.80" width="0.90" height="3.40" fill="#505056"/>
<rect x="737.31" y="200.80" width="0.90" height="7.40" fill="#45454b"/>
<rect x="740.13" y="200.80" width="0.90" height="3.40" fill="#505056"/>
<rect x="742.96" y="200.80" width="0.90" height="7.40" fill="#45454b"/>
<rect x="745.78" y="200.80" width="0.90" height="3.40" fill="#505056"/>
<rect x="748.61" y="200.80" width="0.90" height="7.40" fill="#45454b"/>
<rect x="751.44" y="200.80" width="0.90" height="3.40" fill="#505056"/>
<rect x="754.26" y="200.80" width="0.90" height="7.40" fill="#45454b"/>
<rect x="757.09" y="200.80" width="0.90" height="3.40" fill="#505056"/>
<rect x="759.91" y="200.80" width="0.90" height="7.40" fill="#45454b"/>
<rect x="762.74" y="200.80" width="0.90" height="3.40" fill="#505056"/>
<rect x="765.57" y="200.80" width="0.90" height="7.40" fill="#45454b"/>
<rect x="768.39" y="200.80" width="0.90" height="3.40" fill="#505056"/>
<rect x="771.22" y="200.80" width="0.90" height="7.40" fill="#45454b"/>
<rect x="774.04" y="200.80" width="0.90" height="3.40" fill="#505056"/>
<rect x="776.87" y="200.80" width="0.90" height="7.40" fill="#45454b"/>
<rect x="779.70" y="200.80" width="0.90" height="3.40" fill="#505056"/>
<rect x="782.52" y="200.80" width="0.90" height="7.40" fill="#45454b"/>
<rect x="785.35" y="200.80" width="0.90" height="3.40" fill="#505056"/>
<rect x="788.08" y="200.60" width="1.10" height="10.00" fill="#6a6a70"/>
<rect x="791.00" y="200.80" width="0.90" height="3.40" fill="#505056"/>
<rect x="793.83" y="200.80" width="0.90" height="7.40" fill="#45454b"/>
<rect x="796.65" y="200.80" width="0.90" height="3.40" fill="#505056"/>
<rect x="799.48" y="200.80" width="0.90" height="7.40" fill="#45454b"/>
<rect x="802.31" y="200.80" width="0.90" height="3.40" fill="#505056"/>
<rect x="805.13" y="200.80" width="0.90" height="7.40" fill="#45454b"/>
<rect x="807.96" y="200.80" width="0.90" height="3.40" fill="#505056"/>
<rect x="810.78" y="200.80" width="0.90" height="7.40" fill="#45454b"/>
<rect x="813.61" y="200.80" width="0.90" height="3.40" fill="#505056"/>
<rect x="816.44" y="200.80" width="0.90" height="7.40" fill="#45454b"/>
<rect x="819.26" y="200.80" width="0.90" height="3.40" fill="#505056"/>
<rect x="822.09" y="200.80" width="0.90" height="7.40" fill="#45454b"/>
<rect x="824.91" y="200.80" width="0.90" height="3.40" fill="#505056"/>
<rect x="827.74" y="200.80" width="0.90" height="7.40" fill="#45454b"/>
<rect x="830.57" y="200.80" width="0.90" height="3.40" fill="#505056"/>
<rect x="833.39" y="200.80" width="0.90" height="7.40" fill="#45454b"/>
<rect x="836.22" y="200.80" width="0.90" height="3.40" fill="#505056"/>
<rect x="839.04" y="200.80" width="0.90" height="7.40" fill="#45454b"/>
<rect x="841.87" y="200.80" width="0.90" height="3.40" fill="#505056"/>
<rect x="844.70" y="200.80" width="0.90" height="7.40" fill="#45454b"/>
<rect x="847.52" y="200.80" width="0.90" height="3.40" fill="#505056"/>
<rect x="850.35" y="200.80" width="0.90" height="7.40" fill="#45454b"/>
<rect x="853.17" y="200.80" width="0.90" height="3.40" fill="#505056"/>
<rect x="855.80" y="200.60" width="1.30" height="19.40" fill="url(#majg)"/>
<rect x="858.83" y="200.80" width="0.90" height="3.40" fill="#505056"/>
<rect x="861.65" y="200.80" width="0.90" height="7.40" fill="#45454b"/>
<rect x="864.48" y="200.80" width="0.90" height="3.40" fill="#505056"/>
<rect x="867.30" y="200.80" width="0.90" height="7.40" fill="#45454b"/>
<rect x="870.13" y="200.80" width="0.90" height="3.40" fill="#505056"/>
<rect x="872.96" y="200.80" width="0.90" height="7.40" fill="#45454b"/>
<rect x="875.78" y="200.80" width="0.90" height="3.40" fill="#505056"/>
<rect x="878.61" y="200.80" width="0.90" height="7.40" fill="#45454b"/>
<rect x="881.43" y="200.80" width="0.90" height="3.40" fill="#505056"/>
<rect x="884.26" y="200.80" width="0.90" height="7.40" fill="#45454b"/>
<rect x="887.09" y="200.80" width="0.90" height="3.40" fill="#505056"/>
<rect x="889.91" y="200.80" width="0.90" height="7.40" fill="#45454b"/>
<rect x="892.74" y="200.80" width="0.90" height="3.40" fill="#505056"/>
<rect x="895.56" y="200.80" width="0.90" height="7.40" fill="#45454b"/>
<rect x="898.39" y="200.80" width="0.90" height="3.40" fill="#505056"/>
<rect x="901.22" y="200.80" width="0.90" height="7.40" fill="#45454b"/>
<rect x="904.04" y="200.80" width="0.90" height="3.40" fill="#505056"/>
<rect x="906.87" y="200.80" width="0.90" height="7.40" fill="#45454b"/>
<rect x="909.69" y="200.80" width="0.90" height="3.40" fill="#505056"/>
<rect x="912.52" y="200.80" width="0.90" height="7.40" fill="#45454b"/>
<rect x="915.35" y="200.80" width="0.90" height="3.40" fill="#505056"/>
<rect x="918.17" y="200.80" width="0.90" height="7.40" fill="#45454b"/>
<rect x="921.00" y="200.80" width="0.90" height="3.40" fill="#505056"/>
<rect x="923.73" y="200.60" width="1.10" height="10.00" fill="#6a6a70"/>
<rect x="926.65" y="200.80" width="0.90" height="3.40" fill="#505056"/>
<rect x="929.48" y="200.80" width="0.90" height="7.40" fill="#45454b"/>
<rect x="932.30" y="200.80" width="0.90" height="3.40" fill="#505056"/>
<rect x="935.13" y="200.80" width="0.90" height="7.40" fill="#45454b"/>
<rect x="937.96" y="200.80" width="0.90" height="3.40" fill="#505056"/>
<rect x="940.78" y="200.80" width="0.90" height="7.40" fill="#45454b"/>
<rect x="943.61" y="200.80" width="0.90" height="3.40" fill="#505056"/>
<rect x="946.43" y="200.80" width="0.90" height="7.40" fill="#45454b"/>
<rect x="949.26" y="200.80" width="0.90" height="3.40" fill="#505056"/>
<rect x="952.09" y="200.80" width="0.90" height="7.40" fill="#45454b"/>
<rect x="954.91" y="200.80" width="0.90" height="3.40" fill="#505056"/>
<rect x="957.74" y="200.80" width="0.90" height="7.40" fill="#45454b"/>
<rect x="960.56" y="200.80" width="0.90" height="3.40" fill="#505056"/>
<rect x="963.39" y="200.80" width="0.90" height="7.40" fill="#45454b"/>
<rect x="966.22" y="200.80" width="0.90" height="3.40" fill="#505056"/>
<rect x="969.04" y="200.80" width="0.90" height="7.40" fill="#45454b"/>
<rect x="971.87" y="200.80" width="0.90" height="3.40" fill="#505056"/>
<rect x="974.69" y="200.80" width="0.90" height="7.40" fill="#45454b"/>
<rect x="977.52" y="200.80" width="0.90" height="3.40" fill="#505056"/>
<rect x="980.35" y="200.80" width="0.90" height="7.40" fill="#45454b"/>
<rect x="983.17" y="200.80" width="0.90" height="3.40" fill="#505056"/>
<rect x="986.00" y="200.80" width="0.90" height="7.40" fill="#45454b"/>
<rect x="988.82" y="200.80" width="0.90" height="3.40" fill="#505056"/>
<rect x="991.45" y="200.60" width="1.30" height="19.40" fill="url(#majg)"/>
<rect x="994.48" y="200.80" width="0.90" height="3.40" fill="#505056"/>
<rect x="997.30" y="200.80" width="0.90" height="7.40" fill="#45454b"/>
<rect x="1000.13" y="200.80" width="0.90" height="3.40" fill="#505056"/>
<rect x="1002.95" y="200.80" width="0.90" height="7.40" fill="#45454b"/>
<rect x="1005.78" y="200.80" width="0.90" height="3.40" fill="#505056"/>
<rect x="1008.61" y="200.80" width="0.90" height="7.40" fill="#45454b"/>
<rect x="1011.43" y="200.80" width="0.90" height="3.40" fill="#505056"/>
<rect x="1014.26" y="200.80" width="0.90" height="7.40" fill="#45454b"/>
<rect x="1017.08" y="200.80" width="0.90" height="3.40" fill="#505056"/>
<rect x="1019.91" y="200.80" width="0.90" height="7.40" fill="#45454b"/>
<rect x="1022.74" y="200.80" width="0.90" height="3.40" fill="#505056"/>
<rect x="1025.56" y="200.80" width="0.90" height="7.40" fill="#45454b"/>
<rect x="1028.39" y="200.80" width="0.90" height="3.40" fill="#505056"/>
<rect x="1031.21" y="200.80" width="0.90" height="7.40" fill="#45454b"/>
<rect x="1034.04" y="200.80" width="0.90" height="3.40" fill="#505056"/>
<rect x="1036.87" y="200.80" width="0.90" height="7.40" fill="#45454b"/>
<rect x="1039.69" y="200.80" width="0.90" height="3.40" fill="#505056"/>
<rect x="1042.52" y="200.80" width="0.90" height="7.40" fill="#45454b"/>
<rect x="1045.34" y="200.80" width="0.90" height="3.40" fill="#505056"/>
<rect x="1048.17" y="200.80" width="0.90" height="7.40" fill="#45454b"/>
<rect x="1051.00" y="200.80" width="0.90" height="3.40" fill="#505056"/>
<rect x="1053.82" y="200.80" width="0.90" height="7.40" fill="#45454b"/>
<rect x="1056.65" y="200.80" width="0.90" height="3.40" fill="#505056"/>
<rect x="1059.38" y="200.60" width="1.10" height="10.00" fill="#6a6a70"/>
<rect x="1062.30" y="200.80" width="0.90" height="3.40" fill="#505056"/>
<rect x="1065.13" y="200.80" width="0.90" height="7.40" fill="#45454b"/>
<rect x="1067.95" y="200.80" width="0.90" height="3.40" fill="#505056"/>
<rect x="1070.78" y="200.80" width="0.90" height="7.40" fill="#45454b"/>
<rect x="1073.61" y="200.80" width="0.90" height="3.40" fill="#505056"/>
<rect x="1076.43" y="200.80" width="0.90" height="7.40" fill="#45454b"/>
<rect x="1079.26" y="200.80" width="0.90" height="3.40" fill="#505056"/>
<rect x="1082.08" y="200.80" width="0.90" height="7.40" fill="#45454b"/>
<rect x="1084.91" y="200.80" width="0.90" height="3.40" fill="#505056"/>
<rect x="1087.74" y="200.80" width="0.90" height="7.40" fill="#45454b"/>
<rect x="1090.56" y="200.80" width="0.90" height="3.40" fill="#505056"/>
<rect x="1093.39" y="200.80" width="0.90" height="7.40" fill="#45454b"/>
<rect x="1096.21" y="200.80" width="0.90" height="3.40" fill="#505056"/>
<rect x="1099.04" y="200.80" width="0.90" height="7.40" fill="#45454b"/>
<rect x="1101.87" y="200.80" width="0.90" height="3.40" fill="#505056"/>
<rect x="1104.69" y="200.80" width="0.90" height="7.40" fill="#45454b"/>
<rect x="1107.52" y="200.80" width="0.90" height="3.40" fill="#505056"/>
<rect x="1110.34" y="200.80" width="0.90" height="7.40" fill="#45454b"/>
<rect x="1113.17" y="200.80" width="0.90" height="3.40" fill="#505056"/>
<rect x="1116.00" y="200.80" width="0.90" height="7.40" fill="#45454b"/>
<rect x="1118.82" y="200.80" width="0.90" height="3.40" fill="#505056"/>
<rect x="1121.65" y="200.80" width="0.90" height="7.40" fill="#45454b"/>
<rect x="1124.47" y="200.80" width="0.90" height="3.40" fill="#505056"/>
<rect x="1127.10" y="200.60" width="1.30" height="19.40" fill="url(#majg)"/>
<rect x="1130.13" y="200.80" width="0.90" height="3.40" fill="#505056"/>
<rect x="1132.95" y="200.80" width="0.90" height="7.40" fill="#45454b"/>
<rect x="1135.78" y="200.80" width="0.90" height="3.40" fill="#505056"/>
<rect x="1138.60" y="200.80" width="0.90" height="7.40" fill="#45454b"/>
<rect x="1141.43" y="200.80" width="0.90" height="3.40" fill="#505056"/>
<rect x="1144.26" y="200.80" width="0.90" height="7.40" fill="#45454b"/>
<rect x="1147.08" y="200.80" width="0.90" height="3.40" fill="#505056"/>
<rect x="1149.91" y="200.80" width="0.90" height="7.40" fill="#45454b"/>
<rect x="1152.73" y="200.80" width="0.90" height="3.40" fill="#505056"/>
<rect x="1155.56" y="200.80" width="0.90" height="7.40" fill="#45454b"/>
<rect x="1158.39" y="200.80" width="0.90" height="3.40" fill="#38383e"/>
<rect x="1161.21" y="200.80" width="0.90" height="7.40" fill="#34343a"/>
<rect x="1164.04" y="200.80" width="0.90" height="3.40" fill="#38383e"/>
<rect x="1166.86" y="200.80" width="0.90" height="7.40" fill="#34343a"/>
<rect x="1169.69" y="200.80" width="0.90" height="3.40" fill="#38383e"/>
<rect x="1172.52" y="200.80" width="0.90" height="7.40" fill="#34343a"/>
<rect x="1175.34" y="200.80" width="0.90" height="3.40" fill="#38383e"/>
<rect x="1178.17" y="200.80" width="0.90" height="7.40" fill="#34343a"/>
<rect x="1180.99" y="200.80" width="0.90" height="3.40" fill="#38383e"/>
<rect x="1183.82" y="200.80" width="0.90" height="7.40" fill="#34343a"/>
<rect x="1186.65" y="200.80" width="0.90" height="3.40" fill="#38383e"/>
<rect x="1189.47" y="200.80" width="0.90" height="7.40" fill="#34343a"/>
<rect x="1192.30" y="200.80" width="0.90" height="3.40" fill="#38383e"/>
<rect x="1195.03" y="200.60" width="1.10" height="10.00" fill="#404045"/>
<rect x="1197.95" y="200.80" width="0.90" height="3.40" fill="#38383e"/>
<rect x="1200.78" y="200.80" width="0.90" height="7.40" fill="#34343a"/>
<rect x="1203.60" y="200.80" width="0.90" height="3.40" fill="#38383e"/>
<rect x="145.00" y="219.90" width="1012.50" height="4.80" fill="#98989a"/>
<circle cx="1157.5" cy="222.5" r="2.6" fill="#98989a"/>
<rect x="145.00" y="225.20" width="1063.50" height="1.00" fill="#1a1a1d"/>
<rect x="0.00" y="225.40" width="144.00" height="1.00" fill="#141417"/>
<rect x="145.00" y="228.80" width="1063.50" height="0.90" fill="#313137"/>
<rect x="145.00" y="259.00" width="1063.50" height="0.90" fill="#313137"/>
<rect x="145.00" y="300.00" width="1063.50" height="0.90" fill="#313137"/>
<rect x="145.00" y="341.20" width="1063.50" height="0.90" fill="#313137"/>
<rect x="145.00" y="426.20" width="1063.50" height="0.90" fill="#303036"/>
<rect x="145.00" y="468.70" width="1063.50" height="0.90" fill="#303036"/>
<rect x="145.00" y="511.20" width="1063.50" height="0.90" fill="#303036"/>
<rect x="145.00" y="553.70" width="1063.50" height="0.90" fill="#303036"/>
<rect x="145.00" y="596.20" width="1063.50" height="0.90" fill="#303036"/>
<rect x="145.00" y="638.70" width="1063.50" height="0.90" fill="#303036"/>
<rect x="177.70" y="226.20" width="1.00" height="156.00" fill="#36363c"/>
<rect x="177.70" y="385.00" width="1.00" height="264.00" fill="#36363c"/>
<rect x="313.35" y="226.20" width="1.00" height="156.00" fill="#36363c"/>
<rect x="313.35" y="385.00" width="1.00" height="264.00" fill="#36363c"/>
<rect x="449.00" y="226.20" width="1.00" height="156.00" fill="#36363c"/>
<rect x="449.00" y="385.00" width="1.00" height="264.00" fill="#36363c"/>
<rect x="584.65" y="226.20" width="1.00" height="156.00" fill="#36363c"/>
<rect x="584.65" y="385.00" width="1.00" height="264.00" fill="#36363c"/>
<rect x="720.30" y="226.20" width="1.00" height="156.00" fill="#36363c"/>
<rect x="720.30" y="385.00" width="1.00" height="264.00" fill="#36363c"/>
<rect x="855.95" y="226.20" width="1.00" height="156.00" fill="#36363c"/>
<rect x="855.95" y="385.00" width="1.00" height="264.00" fill="#36363c"/>
<rect x="991.60" y="226.20" width="1.00" height="156.00" fill="#36363c"/>
<rect x="991.60" y="385.00" width="1.00" height="264.00" fill="#36363c"/>
<rect x="1127.25" y="226.20" width="1.00" height="156.00" fill="#36363c"/>
<rect x="1127.25" y="385.00" width="1.00" height="264.00" fill="#36363c"/>
<rect x="0.00" y="382.20" width="1208.50" height="3.00" fill="#151518"/>
<rect x="0.00" y="383.20" width="1208.50" height="1.00" fill="#3b3b3f"/>
<rect x="22.80" y="226.40" width="1.00" height="10.60" fill="#131316"/>
<rect x="0.00" y="237.60" width="144.00" height="1.00" fill="#131316"/>
<path d="M6.0 246.8 V245.20000000000002 A2.8 2.8 0 0 1 11.6 245.20000000000002 V245.70000000000002" fill="none" stroke="#5c5c61" stroke-width="1.2" />
<rect x="4.40" y="247.00" width="8.60" height="4.80" fill="none" rx="0.9" stroke="#5c5c61" stroke-width="1.2"/>
<rect x="24.60" y="243.00" width="12.00" height="9.00" fill="none" rx="1" stroke="#c4c4c8" stroke-width="1.2"/>
<path d="M29.4 245.6 L27.4 247.5 L29.4 249.4" fill="none" stroke="#c4c4c8" stroke-width="1.1" />
<path d="M31.8 245.6 L33.8 247.5 L31.8 249.4" fill="none" stroke="#c4c4c8" stroke-width="1.1" />
<rect x="47.80" y="244.20" width="11.80" height="7.20" fill="none" rx="0.8" stroke="#b0b0b4" stroke-width="1.2"/>
<rect x="47.80" y="245.20" width="1.60" height="1.20" fill="#b0b0b4"/>
<rect x="58.00" y="245.20" width="1.60" height="1.20" fill="#b0b0b4"/>
<rect x="47.80" y="249.00" width="1.60" height="1.20" fill="#b0b0b4"/>
<rect x="58.00" y="249.00" width="1.60" height="1.20" fill="#b0b0b4"/>
<rect x="0.00" y="259.40" width="144.00" height="1.00" fill="#131316"/>
<rect x="22.80" y="260.40" width="1.00" height="18.20" fill="#131316"/>
<rect x="0.00" y="279.10" width="144.00" height="1.00" fill="#131316"/>
<path d="M6.0 288.29999999999995 V286.69999999999993 A2.8 2.8 0 0 1 11.6 286.69999999999993 V287.19999999999993" fill="none" stroke="#5c5c61" stroke-width="1.2" />
<rect x="4.40" y="288.50" width="8.60" height="4.80" fill="none" rx="0.9" stroke="#5c5c61" stroke-width="1.2"/>
<rect x="24.60" y="284.50" width="12.00" height="9.00" fill="none" rx="1" stroke="#c4c4c8" stroke-width="1.2"/>
<path d="M29.4 287.09999999999997 L27.4 289.0 L29.4 290.9" fill="none" stroke="#c4c4c8" stroke-width="1.1" />
<path d="M31.8 287.09999999999997 L33.8 289.0 L31.8 290.9" fill="none" stroke="#c4c4c8" stroke-width="1.1" />
<rect x="47.80" y="285.70" width="11.80" height="7.20" fill="none" rx="0.8" stroke="#b0b0b4" stroke-width="1.2"/>
<rect x="47.80" y="286.70" width="1.60" height="1.20" fill="#b0b0b4"/>
<rect x="58.00" y="286.70" width="1.60" height="1.20" fill="#b0b0b4"/>
<rect x="47.80" y="290.50" width="1.60" height="1.20" fill="#b0b0b4"/>
<rect x="58.00" y="290.50" width="1.60" height="1.20" fill="#b0b0b4"/>
<rect x="0.00" y="300.40" width="144.00" height="1.00" fill="#131316"/>
<rect x="22.80" y="301.40" width="1.00" height="18.20" fill="#131316"/>
<rect x="0.00" y="320.10" width="144.00" height="1.00" fill="#131316"/>
<path d="M6.0 329.29999999999995 V327.69999999999993 A2.8 2.8 0 0 1 11.6 327.69999999999993 V328.19999999999993" fill="none" stroke="#5c5c61" stroke-width="1.2" />
<rect x="4.40" y="329.50" width="8.60" height="4.80" fill="none" rx="0.9" stroke="#5c5c61" stroke-width="1.2"/>
<rect x="24.60" y="325.50" width="12.00" height="9.00" fill="none" rx="1" stroke="#c4c4c8" stroke-width="1.2"/>
<path d="M29.4 328.09999999999997 L27.4 330.0 L29.4 331.9" fill="none" stroke="#c4c4c8" stroke-width="1.1" />
<path d="M31.8 328.09999999999997 L33.8 330.0 L31.8 331.9" fill="none" stroke="#c4c4c8" stroke-width="1.1" />
<rect x="47.80" y="326.70" width="11.80" height="7.20" fill="none" rx="0.8" stroke="#b0b0b4" stroke-width="1.2"/>
<rect x="47.80" y="327.70" width="1.60" height="1.20" fill="#b0b0b4"/>
<rect x="58.00" y="327.70" width="1.60" height="1.20" fill="#b0b0b4"/>
<rect x="47.80" y="331.50" width="1.60" height="1.20" fill="#b0b0b4"/>
<rect x="58.00" y="331.50" width="1.60" height="1.20" fill="#b0b0b4"/>
<rect x="0.00" y="341.40" width="144.00" height="1.00" fill="#131316"/>
<rect x="22.80" y="342.40" width="1.00" height="18.20" fill="#131316"/>
<rect x="0.00" y="361.10" width="144.00" height="1.00" fill="#131316"/>
<rect x="-1.00" y="344.90" width="20.60" height="13.60" fill="none" rx="1" stroke="#ae4238" stroke-width="1.1"/>
<path d="M6.0 370.29999999999995 V368.69999999999993 A2.8 2.8 0 0 1 11.6 368.69999999999993 V369.19999999999993" fill="none" stroke="#5c5c61" stroke-width="1.2" />
<rect x="4.40" y="370.50" width="8.60" height="4.80" fill="none" rx="0.9" stroke="#5c5c61" stroke-width="1.2"/>
<rect x="24.60" y="366.50" width="12.00" height="9.00" fill="none" rx="1" stroke="#c4c4c8" stroke-width="1.2"/>
<path d="M29.4 369.09999999999997 L27.4 371.0 L29.4 372.9" fill="none" stroke="#c4c4c8" stroke-width="1.1" />
<path d="M31.8 369.09999999999997 L33.8 371.0 L31.8 372.9" fill="none" stroke="#c4c4c8" stroke-width="1.1" />
<rect x="47.80" y="367.70" width="11.80" height="7.20" fill="none" rx="0.8" stroke="#b0b0b4" stroke-width="1.2"/>
<rect x="47.80" y="368.70" width="1.60" height="1.20" fill="#b0b0b4"/>
<rect x="58.00" y="368.70" width="1.60" height="1.20" fill="#b0b0b4"/>
<rect x="47.80" y="372.50" width="1.60" height="1.20" fill="#b0b0b4"/>
<rect x="58.00" y="372.50" width="1.60" height="1.20" fill="#b0b0b4"/>
<rect x="0.00" y="384.70" width="144.00" height="1.00" fill="#131316"/>
<rect x="22.80" y="385.70" width="1.00" height="18.20" fill="#131316"/>
<rect x="0.00" y="403.40" width="144.00" height="1.00" fill="#131316"/>
<rect x="-1.00" y="387.60" width="20.60" height="13.60" fill="none" rx="1" stroke="#ae4238" stroke-width="1.1"/>
<path d="M6.0 415.59999999999997 V413.99999999999994 A2.8 2.8 0 0 1 11.6 413.99999999999994 V414.49999999999994" fill="none" stroke="#5c5c61" stroke-width="1.2" />
<rect x="4.40" y="415.80" width="8.60" height="4.80" fill="none" rx="0.9" stroke="#5c5c61" stroke-width="1.2"/>
<rect x="24.60" y="411.80" width="12.00" height="9.00" fill="none" rx="1" stroke="#c4c4c8" stroke-width="1.2"/>
<path d="M29.4 414.4 L27.4 416.3 L29.4 418.2" fill="none" stroke="#c4c4c8" stroke-width="1.1" />
<path d="M31.8 414.4 L33.8 416.3 L31.8 418.2" fill="none" stroke="#c4c4c8" stroke-width="1.1" />
<rect x="46.70" y="408.50" width="13.60" height="14.20" fill="none" rx="1.4" stroke="#66666b" stroke-width="1.2"/>
<rect x="69.00" y="408.50" width="13.60" height="14.20" fill="none" rx="1.4" stroke="#66666b" stroke-width="1.2"/>
<rect x="0.00" y="426.20" width="144.00" height="1.00" fill="#131316"/>
<rect x="22.80" y="427.20" width="1.00" height="19.60" fill="#131316"/>
<rect x="0.00" y="446.30" width="144.00" height="1.00" fill="#131316"/>
<path d="M6.0 458.0 V456.4 A2.8 2.8 0 0 1 11.6 456.4 V456.9" fill="none" stroke="#5c5c61" stroke-width="1.2" />
<rect x="4.40" y="458.20" width="8.60" height="4.80" fill="none" rx="0.9" stroke="#5c5c61" stroke-width="1.2"/>
<rect x="24.60" y="454.20" width="12.00" height="9.00" fill="none" rx="1" stroke="#c4c4c8" stroke-width="1.2"/>
<path d="M29.4 456.8 L27.4 458.70000000000005 L29.4 460.6" fill="none" stroke="#c4c4c8" stroke-width="1.1" />
<path d="M31.8 456.8 L33.8 458.70000000000005 L31.8 460.6" fill="none" stroke="#c4c4c8" stroke-width="1.1" />
<rect x="46.70" y="450.90" width="13.60" height="14.20" fill="none" rx="1.4" stroke="#66666b" stroke-width="1.2"/>
<rect x="69.00" y="450.90" width="13.60" height="14.20" fill="none" rx="1.4" stroke="#66666b" stroke-width="1.2"/>
<rect x="0.00" y="468.70" width="144.00" height="1.00" fill="#131316"/>
<rect x="22.80" y="469.70" width="1.00" height="19.60" fill="#131316"/>
<rect x="0.00" y="488.80" width="144.00" height="1.00" fill="#131316"/>
<path d="M6.0 500.5 V498.9 A2.8 2.8 0 0 1 11.6 498.9 V499.4" fill="none" stroke="#5c5c61" stroke-width="1.2" />
<rect x="4.40" y="500.70" width="8.60" height="4.80" fill="none" rx="0.9" stroke="#5c5c61" stroke-width="1.2"/>
<rect x="24.60" y="496.70" width="12.00" height="9.00" fill="none" rx="1" stroke="#c4c4c8" stroke-width="1.2"/>
<path d="M29.4 499.3 L27.4 501.20000000000005 L29.4 503.1" fill="none" stroke="#c4c4c8" stroke-width="1.1" />
<path d="M31.8 499.3 L33.8 501.20000000000005 L31.8 503.1" fill="none" stroke="#c4c4c8" stroke-width="1.1" />
<rect x="46.70" y="493.40" width="13.60" height="14.20" fill="none" rx="1.4" stroke="#66666b" stroke-width="1.2"/>
<rect x="69.00" y="493.40" width="13.60" height="14.20" fill="none" rx="1.4" stroke="#66666b" stroke-width="1.2"/>
<rect x="0.00" y="511.20" width="144.00" height="1.00" fill="#131316"/>
<rect x="22.80" y="512.20" width="1.00" height="19.60" fill="#131316"/>
<rect x="0.00" y="531.30" width="144.00" height="1.00" fill="#131316"/>
<path d="M6.0 543.0 V541.4 A2.8 2.8 0 0 1 11.6 541.4 V541.9" fill="none" stroke="#5c5c61" stroke-width="1.2" />
<rect x="4.40" y="543.20" width="8.60" height="4.80" fill="none" rx="0.9" stroke="#5c5c61" stroke-width="1.2"/>
<rect x="24.60" y="539.20" width="12.00" height="9.00" fill="none" rx="1" stroke="#c4c4c8" stroke-width="1.2"/>
<path d="M29.4 541.8 L27.4 543.6999999999999 L29.4 545.5999999999999" fill="none" stroke="#c4c4c8" stroke-width="1.1" />
<path d="M31.8 541.8 L33.8 543.6999999999999 L31.8 545.5999999999999" fill="none" stroke="#c4c4c8" stroke-width="1.1" />
<rect x="46.70" y="535.90" width="13.60" height="14.20" fill="none" rx="1.4" stroke="#66666b" stroke-width="1.2"/>
<rect x="69.00" y="535.90" width="13.60" height="14.20" fill="none" rx="1.4" stroke="#66666b" stroke-width="1.2"/>
<rect x="0.00" y="553.70" width="144.00" height="1.00" fill="#131316"/>
<rect x="22.80" y="554.70" width="1.00" height="19.60" fill="#131316"/>
<rect x="0.00" y="573.80" width="144.00" height="1.00" fill="#131316"/>
<path d="M6.0 585.5000000000001 V583.9000000000001 A2.8 2.8 0 0 1 11.6 583.9000000000001 V584.4000000000001" fill="none" stroke="#5c5c61" stroke-width="1.2" />
<rect x="4.40" y="585.70" width="8.60" height="4.80" fill="none" rx="0.9" stroke="#5c5c61" stroke-width="1.2"/>
<rect x="24.60" y="581.70" width="12.00" height="9.00" fill="none" rx="1" stroke="#c4c4c8" stroke-width="1.2"/>
<path d="M29.4 584.3000000000001 L27.4 586.2 L29.4 588.1" fill="none" stroke="#c4c4c8" stroke-width="1.1" />
<path d="M31.8 584.3000000000001 L33.8 586.2 L31.8 588.1" fill="none" stroke="#c4c4c8" stroke-width="1.1" />
<rect x="46.70" y="578.40" width="13.60" height="14.20" fill="none" rx="1.4" stroke="#66666b" stroke-width="1.2"/>
<rect x="69.00" y="578.40" width="13.60" height="14.20" fill="none" rx="1.4" stroke="#66666b" stroke-width="1.2"/>
<rect x="0.00" y="596.20" width="144.00" height="1.00" fill="#131316"/>
<rect x="22.80" y="597.20" width="1.00" height="19.60" fill="#131316"/>
<rect x="0.00" y="616.30" width="144.00" height="1.00" fill="#131316"/>
<path d="M6.0 628.0000000000001 V626.4000000000001 A2.8 2.8 0 0 1 11.6 626.4000000000001 V626.9000000000001" fill="none" stroke="#5c5c61" stroke-width="1.2" />
<rect x="4.40" y="628.20" width="8.60" height="4.80" fill="none" rx="0.9" stroke="#5c5c61" stroke-width="1.2"/>
<rect x="24.60" y="624.20" width="12.00" height="9.00" fill="none" rx="1" stroke="#c4c4c8" stroke-width="1.2"/>
<path d="M29.4 626.8000000000001 L27.4 628.7 L29.4 630.6" fill="none" stroke="#c4c4c8" stroke-width="1.1" />
<path d="M31.8 626.8000000000001 L33.8 628.7 L31.8 630.6" fill="none" stroke="#c4c4c8" stroke-width="1.1" />
<rect x="46.70" y="620.90" width="13.60" height="14.20" fill="none" rx="1.4" stroke="#66666b" stroke-width="1.2"/>
<rect x="69.00" y="620.90" width="13.60" height="14.20" fill="none" rx="1.4" stroke="#66666b" stroke-width="1.2"/>
<rect x="0.00" y="638.70" width="144.00" height="1.00" fill="#131316"/>
<rect x="22.80" y="639.70" width="1.00" height="19.60" fill="#131316"/>
<rect x="0.00" y="658.80" width="144.00" height="1.00" fill="#131316"/>
<path d="M6.0 670.5000000000001 V668.9000000000001 A2.8 2.8 0 0 1 11.6 668.9000000000001 V669.4000000000001" fill="none" stroke="#5c5c61" stroke-width="1.2" />
<rect x="4.40" y="670.70" width="8.60" height="4.80" fill="none" rx="0.9" stroke="#5c5c61" stroke-width="1.2"/>
<rect x="24.60" y="666.70" width="12.00" height="9.00" fill="none" rx="1" stroke="#c4c4c8" stroke-width="1.2"/>
<path d="M29.4 669.3000000000001 L27.4 671.2 L29.4 673.1" fill="none" stroke="#c4c4c8" stroke-width="1.1" />
<path d="M31.8 669.3000000000001 L33.8 671.2 L31.8 673.1" fill="none" stroke="#c4c4c8" stroke-width="1.1" />
<rect x="46.70" y="663.40" width="13.60" height="14.20" fill="none" rx="1.4" stroke="#66666b" stroke-width="1.2"/>
<rect x="69.00" y="663.40" width="13.60" height="14.20" fill="none" rx="1.4" stroke="#66666b" stroke-width="1.2"/>
<g clip-path="url(#tlclip)">
<rect x="468.00" y="228.00" width="29.80" height="2.00" fill="#265d96"/>
<rect x="650.30" y="228.00" width="271.90" height="2.00" fill="#265d96"/>
<rect x="944.70" y="228.00" width="37.10" height="2.00" fill="#265d96"/>
<rect x="1002.10" y="228.00" width="19.90" height="2.00" fill="#265d96"/>
<rect x="1028.90" y="228.00" width="37.70" height="2.00" fill="#265d96"/>
<rect x="1076.50" y="228.00" width="37.70" height="2.00" fill="#265d96"/>
<rect x="549.10" y="230.20" width="3.50" height="28.30" fill="#1c1c20"/>
<rect x="549.40" y="230.20" width="2.90" height="28.00" fill="#44698f"/>
<rect x="557.40" y="230.20" width="8.10" height="28.30" fill="#1c1c20"/>
<rect x="557.70" y="230.20" width="7.50" height="28.00" fill="#44698f"/>
<rect x="925.10" y="230.20" width="11.10" height="28.40" fill="#1c1c20" rx="2"/>
<rect x="925.40" y="230.20" width="10.50" height="28.00" fill="#44698f" rx="2"/>
<rect x="927.20" y="229.20" width="6.90" height="11.00" fill="#4d7094" stroke="#192736" stroke-width="0.9"/>
<rect x="925.00" y="229.00" width="12.00" height="1.20" fill="#28282e"/>
<rect x="140.00" y="260.90" width="17.10" height="38.20" fill="#1c1c20" rx="2.4"/>
<rect x="140.40" y="261.30" width="16.30" height="37.40" fill="#44698f" rx="2" stroke="#5a7b9c" stroke-width="0.7"/>
<rect x="141.40" y="262.60" width="14.30" height="19.30" fill="#020203"/>
<rect x="182.00" y="260.90" width="17.10" height="38.20" fill="#1c1c20" rx="2.4"/>
<rect x="182.40" y="261.30" width="16.30" height="37.40" fill="#44698f" rx="2" stroke="#5a7b9c" stroke-width="0.7"/>
<rect x="183.40" y="262.60" width="14.30" height="19.30" fill="#020203"/>
<rect x="271.00" y="260.90" width="17.10" height="38.20" fill="#1c1c20" rx="2.4"/>
<rect x="271.40" y="261.30" width="16.30" height="37.40" fill="#44698f" rx="2" stroke="#5a7b9c" stroke-width="0.7"/>
<rect x="272.40" y="262.60" width="14.30" height="19.30" fill="#020203"/>
<rect x="348.10" y="260.90" width="17.50" height="38.20" fill="#1c1c20" rx="2.4"/>
<rect x="348.50" y="261.30" width="16.70" height="37.40" fill="#44698f" rx="2" stroke="#5a7b9c" stroke-width="0.7"/>
<rect x="349.50" y="262.60" width="14.70" height="19.30" fill="#020203"/>
<rect x="378.90" y="260.90" width="17.00" height="38.20" fill="#1c1c20" rx="2.4"/>
<rect x="379.30" y="261.30" width="16.20" height="37.40" fill="#44698f" rx="2" stroke="#5a7b9c" stroke-width="0.7"/>
<rect x="380.30" y="262.60" width="14.20" height="19.30" fill="#020203"/>
<rect x="449.90" y="260.90" width="17.30" height="38.20" fill="#1c1c20" rx="2.4"/>
<rect x="450.30" y="261.30" width="16.50" height="37.40" fill="#44698f" rx="2" stroke="#5a7b9c" stroke-width="0.7"/>
<rect x="451.30" y="262.60" width="14.50" height="19.30" fill="#020203"/>
<rect x="513.00" y="260.90" width="16.20" height="38.20" fill="#1c1c20" rx="2.4"/>
<rect x="513.40" y="261.30" width="15.40" height="37.40" fill="#44698f" rx="2" stroke="#5a7b9c" stroke-width="0.7"/>
<rect x="514.40" y="262.60" width="13.40" height="19.30" fill="#020203"/>
<rect x="539.60" y="260.90" width="17.00" height="38.20" fill="#1c1c20" rx="2.4"/>
<rect x="540.00" y="261.30" width="16.20" height="37.40" fill="#44698f" rx="2" stroke="#5a7b9c" stroke-width="0.7"/>
<rect x="541.00" y="262.60" width="14.20" height="19.30" fill="#020203"/>
<rect x="569.20" y="260.90" width="16.20" height="38.20" fill="#1c1c20" rx="2.4"/>
<rect x="569.60" y="261.30" width="15.40" height="37.40" fill="#44698f" rx="2" stroke="#5a7b9c" stroke-width="0.7"/>
<rect x="570.60" y="262.60" width="13.40" height="19.30" fill="#020203"/>
<rect x="599.50" y="260.90" width="17.10" height="38.20" fill="#1c1c20" rx="2.4"/>
<rect x="599.90" y="261.30" width="16.30" height="37.40" fill="#44698f" rx="2" stroke="#5a7b9c" stroke-width="0.7"/>
<rect x="600.90" y="262.60" width="14.30" height="19.30" fill="#020203"/>
<rect x="227.20" y="260.90" width="9.00" height="38.20" fill="#1c1c20" rx="2.4"/>
<rect x="227.60" y="261.30" width="8.20" height="37.40" fill="#44698f" rx="2" stroke="#5a7b9c" stroke-width="0.7"/>
<rect x="228.90" y="262.90" width="5.60" height="18.90" fill="#4f7295" stroke="#192736" stroke-width="0.9"/>
<rect x="315.10" y="260.90" width="9.90" height="38.20" fill="#1c1c20" rx="2.4"/>
<rect x="315.50" y="261.30" width="9.10" height="37.40" fill="#44698f" rx="2" stroke="#5a7b9c" stroke-width="0.7"/>
<rect x="316.80" y="262.90" width="6.50" height="18.90" fill="#4f7295" stroke="#192736" stroke-width="0.9"/>
<rect x="398.00" y="260.90" width="10.10" height="38.20" fill="#1c1c20" rx="2.4"/>
<rect x="398.40" y="261.30" width="9.30" height="37.40" fill="#44698f" rx="2" stroke="#5a7b9c" stroke-width="0.7"/>
<rect x="399.70" y="262.90" width="6.70" height="18.90" fill="#4f7295" stroke="#192736" stroke-width="0.9"/>
<rect x="428.60" y="260.90" width="9.20" height="38.20" fill="#1c1c20" rx="2.4"/>
<rect x="429.00" y="261.30" width="8.40" height="37.40" fill="#44698f" rx="2" stroke="#5a7b9c" stroke-width="0.7"/>
<rect x="430.30" y="262.90" width="5.80" height="18.90" fill="#4f7295" stroke="#192736" stroke-width="0.9"/>
<rect x="492.30" y="260.90" width="9.50" height="38.20" fill="#1c1c20" rx="2.4"/>
<rect x="492.70" y="261.30" width="8.70" height="37.40" fill="#44698f" rx="2" stroke="#5a7b9c" stroke-width="0.7"/>
<rect x="494.00" y="262.90" width="6.10" height="18.90" fill="#4f7295" stroke="#192736" stroke-width="0.9"/>
<rect x="933.30" y="260.90" width="10.50" height="38.20" fill="#1c1c20" rx="2.4"/>
<rect x="933.70" y="261.30" width="9.70" height="37.40" fill="#44698f" rx="2" stroke="#5a7b9c" stroke-width="0.7"/>
<rect x="935.00" y="262.90" width="7.10" height="18.90" fill="#4f7295" stroke="#192736" stroke-width="0.9"/>
<rect x="771.20" y="260.90" width="46.10" height="38.20" fill="#1c1c20" rx="2.4"/>
<rect x="771.60" y="261.30" width="45.30" height="37.40" fill="#44698f" rx="2" stroke="#5a7b9c" stroke-width="0.7"/>
<rect x="772.60" y="262.60" width="43.30" height="19.30" fill="#1a120e"/>
<g filter="url(#blur1)"><ellipse cx="794.25" cy="271.28499999999997" rx="11.690999999999978" ry="9.650000000000006" fill="#35201a"/><ellipse cx="794.25" cy="279.005" rx="8.659999999999982" ry="3.8600000000000025" fill="#4a2a26"/><polygon points="776.9300000000001,273.215 784.724,272.25 782.126,281.9 777.796,279.96999999999997" fill="#6a6258"/><polygon points="810.704,272.25 815.0339999999999,273.215 815.0339999999999,280.935 811.5699999999999,278.03999999999996" fill="#6a6258"/><rect x="773.466" y="262.59999999999997" width="7.793999999999984" height="6.7550000000000034" fill="#4a3a2a"/></g>
<rect x="772.60" y="281.90" width="43.30" height="1.50" fill="#44698f"/>
<rect x="917.40" y="260.90" width="7.20" height="38.20" fill="#1c1c20"/>
<rect x="917.70" y="261.20" width="6.60" height="37.60" fill="#44698f"/>
<rect x="924.70" y="260.90" width="8.00" height="38.20" fill="#1c1c20"/>
<rect x="925.00" y="261.20" width="7.40" height="37.60" fill="#44698f"/>
<rect x="945.20" y="260.90" width="20.20" height="38.20" fill="#1c1c20" rx="2.4"/>
<rect x="945.60" y="261.30" width="19.40" height="37.40" fill="#44698f" rx="2" stroke="#5a7b9c" stroke-width="0.7"/>
<rect x="946.60" y="262.60" width="17.40" height="19.30" fill="#030303"/>
<rect x="958.80" y="270.80" width="3.20" height="1.80" fill="#d8c8b8"/>
<rect x="959.60" y="270.20" width="1.40" height="3.00" fill="#a89888"/>
<rect x="1000.10" y="260.90" width="21.10" height="38.20" fill="#1c1c20" rx="2.4"/>
<rect x="1000.50" y="261.30" width="20.30" height="37.40" fill="#44698f" rx="2" stroke="#5a7b9c" stroke-width="0.7"/>
<rect x="1001.50" y="262.60" width="18.30" height="19.30" fill="#030303"/>
<rect x="1014.60" y="270.80" width="3.20" height="1.80" fill="#d8c8b8"/>
<rect x="1015.40" y="270.20" width="1.40" height="3.00" fill="#a89888"/>
<rect x="1039.30" y="260.90" width="20.80" height="38.20" fill="#1c1c20" rx="2.4"/>
<rect x="1039.70" y="261.30" width="20.00" height="37.40" fill="#44698f" rx="2" stroke="#5a7b9c" stroke-width="0.7"/>
<rect x="1040.70" y="262.60" width="18.00" height="19.30" fill="#030303"/>
<rect x="1053.50" y="270.80" width="3.20" height="1.80" fill="#d8c8b8"/>
<rect x="1054.30" y="270.20" width="1.40" height="3.00" fill="#a89888"/>
<path d="M807.2 286.0 L811.6 290.4 L807.2 294.79999999999995 L802.8000000000001 290.4 Z" fill="#0c0c0e" stroke="none" stroke-width="1" />
<path d="M807.5 287.59999999999997 L810.3000000000001 290.4 L807.5 293.2 Z" fill="#f0f0f0" stroke="none" stroke-width="1" />
<rect x="200.30" y="301.90" width="28.00" height="38.40" fill="#1c1c20" rx="2.4"/>
<rect x="200.70" y="302.30" width="27.20" height="37.60" fill="#4378aa" rx="2" stroke="#5988b4" stroke-width="0.7"/>
<rect x="201.70" y="303.60" width="25.20" height="19.30" fill="#444" filter="url(#nzW)"/>
<rect x="289.20" y="301.90" width="28.80" height="38.40" fill="#1c1c20" rx="2.4"/>
<rect x="289.60" y="302.30" width="28.00" height="37.60" fill="#4378aa" rx="2" stroke="#5988b4" stroke-width="0.7"/>
<rect x="290.60" y="303.60" width="26.00" height="19.30" fill="#444" filter="url(#nzW)"/>
<rect x="409.00" y="301.90" width="26.00" height="38.40" fill="#1c1c20" rx="2.4"/>
<rect x="409.40" y="302.30" width="25.20" height="37.60" fill="#4378aa" rx="2" stroke="#5988b4" stroke-width="0.7"/>
<rect x="410.40" y="303.60" width="23.20" height="19.30" fill="#444" filter="url(#nzG)"/>
<rect x="467.90" y="301.90" width="28.90" height="38.40" fill="#1c1c20" rx="2.4"/>
<rect x="468.30" y="302.30" width="28.10" height="37.60" fill="#44698f" rx="2" stroke="#5a7b9c" stroke-width="0.7"/>
<rect x="469.30" y="303.60" width="26.10" height="19.30" fill="#444" filter="url(#nzBl)"/>
<rect x="381.10" y="301.90" width="9.90" height="38.40" fill="#1c1c20" rx="2.4"/>
<rect x="381.50" y="302.30" width="9.10" height="37.60" fill="#44698f" rx="2" stroke="#5a7b9c" stroke-width="0.7"/>
<rect x="382.80" y="303.90" width="6.50" height="18.90" fill="#4f7295" stroke="#192736" stroke-width="0.9"/>
<rect x="572.10" y="301.90" width="9.90" height="38.40" fill="#1c1c20" rx="2.4"/>
<rect x="572.50" y="302.30" width="9.10" height="37.60" fill="#44698f" rx="2" stroke="#5a7b9c" stroke-width="0.7"/>
<rect x="573.80" y="303.90" width="6.50" height="18.90" fill="#4f7295" stroke="#192736" stroke-width="0.9"/>
<rect x="809.20" y="301.90" width="9.90" height="38.40" fill="#1c1c20" rx="2.4"/>
<rect x="809.60" y="302.30" width="9.10" height="37.60" fill="#44698f" rx="2" stroke="#5a7b9c" stroke-width="0.7"/>
<rect x="810.90" y="303.90" width="6.50" height="18.90" fill="#4f7295" stroke="#192736" stroke-width="0.9"/>
<rect x="877.10" y="301.90" width="9.90" height="38.40" fill="#1c1c20" rx="2.4"/>
<rect x="877.50" y="302.30" width="9.10" height="37.60" fill="#44698f" rx="2" stroke="#5a7b9c" stroke-width="0.7"/>
<rect x="878.80" y="303.90" width="6.50" height="18.90" fill="#4f7295" stroke="#192736" stroke-width="0.9"/>
<rect x="906.00" y="301.90" width="9.90" height="38.40" fill="#1c1c20" rx="2.4"/>
<rect x="906.40" y="302.30" width="9.10" height="37.60" fill="#44698f" rx="2" stroke="#5a7b9c" stroke-width="0.7"/>
<rect x="907.70" y="303.90" width="6.50" height="18.90" fill="#4f7295" stroke="#192736" stroke-width="0.9"/>
<rect x="917.10" y="301.90" width="20.90" height="38.40" fill="#1c1c20" rx="2.4"/>
<rect x="917.50" y="302.30" width="20.10" height="37.60" fill="#44698f" rx="2" stroke="#5a7b9c" stroke-width="0.7"/>
<rect x="918.50" y="303.60" width="18.10" height="19.30" fill="#030303"/>
<rect x="931.40" y="311.80" width="3.20" height="1.80" fill="#d8c8b8"/>
<rect x="932.20" y="311.20" width="1.40" height="3.00" fill="#a89888"/>
<rect x="945.20" y="301.90" width="62.60" height="38.40" fill="#1c1c20" rx="2.4"/>
<rect x="945.60" y="302.30" width="61.80" height="37.60" fill="#44698f" rx="2" stroke="#5a7b9c" stroke-width="0.7"/>
<rect x="946.60" y="303.60" width="59.80" height="19.30" fill="#070a05"/>
<linearGradient id="ov946" x1="0" x2="1" y1="0" y2="0"><stop offset="0" stop-color="#120a06"/><stop offset="0.5" stop-color="#2c160d"/><stop offset="0.8" stop-color="#6a3c26"/><stop offset="0.92" stop-color="#d0a078"/><stop offset="1" stop-color="#fff0d8"/></linearGradient>
<rect x="946.60" y="303.60" width="29.90" height="19.30" fill="url(#ov946)"/>
<rect x="988.46" y="318.65" width="7.18" height="3.86" fill="#2a1a0c" filter="url(#blur1)"/>
<path d="M973.1999999999999 332.0 C974.9999999999999 327.2 976.5999999999999 328.79999999999995 978.5999999999999 332.4 S981.9999999999999 337.4 983.9999999999999 333.0" fill="none" stroke="#0c0c0e" stroke-width="1.5" />
<circle cx="982.1999999999999" cy="335.0" r="1.2" fill="#44698f" stroke="#0c0c0e" stroke-width="0.8"/>
<path d="M998.1999999999999 327.8 L1002.5999999999999 332.2 L998.1999999999999 336.59999999999997 L993.8 332.2 Z" fill="#0c0c0e" stroke="none" stroke-width="1" />
<path d="M998.4999999999999 329.4 L1001.3 332.2 L998.4999999999999 335.0 Z" fill="#f0f0f0" stroke="none" stroke-width="1" />
<rect x="1009.10" y="301.90" width="66.60" height="38.40" fill="#1c1c20" rx="2.4"/>
<rect x="1009.50" y="302.30" width="65.80" height="37.60" fill="#44698f" rx="2" stroke="#5a7b9c" stroke-width="0.7"/>
<rect x="1010.50" y="303.60" width="63.80" height="19.30" fill="#070a05"/>
<linearGradient id="ov1010" x1="0" x2="1" y1="0" y2="0"><stop offset="0" stop-color="#120a06"/><stop offset="0.5" stop-color="#2c160d"/><stop offset="0.8" stop-color="#6a3c26"/><stop offset="0.92" stop-color="#d0a078"/><stop offset="1" stop-color="#fff0d8"/></linearGradient>
<rect x="1010.50" y="303.60" width="31.90" height="19.30" fill="url(#ov1010)"/>
<rect x="1055.16" y="318.65" width="7.66" height="3.86" fill="#2a1a0c" filter="url(#blur1)"/>
<path d="M1041.1 332.0 C1042.9 327.2 1044.5 328.79999999999995 1046.5 332.4 S1049.9 337.4 1051.9 333.0" fill="none" stroke="#0c0c0e" stroke-width="1.5" />
<circle cx="1050.1" cy="335.0" r="1.2" fill="#44698f" stroke="#0c0c0e" stroke-width="0.8"/>
<path d="M1066.1000000000001 327.8 L1070.5000000000002 332.2 L1066.1000000000001 336.59999999999997 L1061.7 332.2 Z" fill="#0c0c0e" stroke="none" stroke-width="1" />
<path d="M1066.4 329.4 L1069.2 332.2 L1066.4 335.0 Z" fill="#f0f0f0" stroke="none" stroke-width="1" />
<rect x="1077.00" y="301.90" width="66.40" height="38.40" fill="#1c1c20" rx="2.4"/>
<rect x="1077.40" y="302.30" width="65.60" height="37.60" fill="#44698f" rx="2" stroke="#5a7b9c" stroke-width="0.7"/>
<rect x="1078.40" y="303.60" width="63.60" height="19.30" fill="#070a05"/>
<linearGradient id="ov1078" x1="0" x2="1" y1="0" y2="0"><stop offset="0" stop-color="#120a06"/><stop offset="0.5" stop-color="#2c160d"/><stop offset="0.8" stop-color="#6a3c26"/><stop offset="0.92" stop-color="#d0a078"/><stop offset="1" stop-color="#fff0d8"/></linearGradient>
<rect x="1078.40" y="303.60" width="31.80" height="19.30" fill="url(#ov1078)"/>
<rect x="1122.92" y="318.65" width="7.63" height="3.86" fill="#2a1a0c" filter="url(#blur1)"/>
<path d="M1108.8 332.0 C1110.6000000000001 327.2 1112.2 328.79999999999995 1114.2 332.4 S1117.6000000000001 337.4 1119.6000000000001 333.0" fill="none" stroke="#0c0c0e" stroke-width="1.5" />
<circle cx="1117.8" cy="335.0" r="1.2" fill="#44698f" stroke="#0c0c0e" stroke-width="0.8"/>
<path d="M1133.8000000000002 327.8 L1138.2000000000003 332.2 L1133.8000000000002 336.59999999999997 L1129.4 332.2 Z" fill="#0c0c0e" stroke="none" stroke-width="1" />
<path d="M1134.1000000000001 329.4 L1136.9 332.2 L1134.1000000000001 335.0 Z" fill="#f0f0f0" stroke="none" stroke-width="1" />
<rect x="139.70" y="342.70" width="48.10" height="39.40" fill="#1c1c20" rx="2.4"/>
<rect x="140.00" y="343.00" width="47.50" height="38.80" fill="#4378aa" rx="2" stroke="#5f8cb6" stroke-width="0.7"/>
<rect x="145.00" y="344.80" width="41.50" height="19.00" fill="#444" filter="url(#nzD)"/>
<rect x="141.00" y="344.80" width="35.40" height="19.00" fill="#000" opacity="0.09"/>
<rect x="176.40" y="344.80" width="10.10" height="19.00" fill="#fff" opacity="0.03"/>
<g transform="rotate(-40 156.2 373.6)" fill="none" stroke="#f0f4f8" stroke-width="1.3"><rect x="151.39999999999998" y="371.90000000000003" width="5.6" height="3.4" rx="1.7"/><rect x="155.39999999999998" y="371.90000000000003" width="5.6" height="3.4" rx="1.7"/></g>
<rect x="188.90" y="342.70" width="460.70" height="39.40" fill="#1c1c20" rx="2.4"/>
<rect x="189.20" y="343.00" width="460.10" height="38.80" fill="#4378aa" rx="2" stroke="#5f8cb6" stroke-width="0.7"/>
<rect x="190.20" y="344.80" width="192.80" height="19.00" fill="#444" filter="url(#nzD)"/>
<rect x="383.00" y="344.80" width="27.00" height="19.00" fill="#f7f7f7"/>
<rect x="383.00" y="344.80" width="27.00" height="19.00" fill="#444" filter="url(#nzD)" opacity="0.07"/>
<rect x="383.00" y="359.80" width="27.00" height="4.00" fill="#444" filter="url(#nzD)" opacity="0.7"/>
<rect x="383.00" y="356.80" width="27.00" height="3.00" fill="#444" filter="url(#nzD)" opacity="0.3"/>
<rect x="410.00" y="344.80" width="15.00" height="19.00" fill="#3a3a3a"/>
<rect x="410.00" y="344.80" width="15.00" height="19.00" fill="#444" filter="url(#nzD)" opacity="0.3"/>
<rect x="425.00" y="344.80" width="22.00" height="19.00" fill="#9a9a9a"/>
<rect x="425.00" y="344.80" width="22.00" height="19.00" fill="#444" filter="url(#nzD)" opacity="0.3"/>
<rect x="447.00" y="344.80" width="23.00" height="19.00" fill="#f0f0f0"/>
<rect x="447.00" y="344.80" width="23.00" height="19.00" fill="#444" filter="url(#nzD)" opacity="0.07"/>
<rect x="447.00" y="359.80" width="23.00" height="4.00" fill="#444" filter="url(#nzD)" opacity="0.7"/>
<rect x="447.00" y="356.80" width="23.00" height="3.00" fill="#444" filter="url(#nzD)" opacity="0.3"/>
<rect x="470.00" y="344.80" width="15.00" height="19.00" fill="#f9f9f9"/>
<rect x="470.00" y="344.80" width="15.00" height="19.00" fill="#444" filter="url(#nzD)" opacity="0.07"/>
<rect x="470.00" y="359.80" width="15.00" height="4.00" fill="#444" filter="url(#nzD)" opacity="0.7"/>
<rect x="470.00" y="356.80" width="15.00" height="3.00" fill="#444" filter="url(#nzD)" opacity="0.3"/>
<rect x="485.00" y="344.80" width="9.00" height="19.00" fill="#404040"/>
<rect x="485.00" y="344.80" width="9.00" height="19.00" fill="#444" filter="url(#nzD)" opacity="0.3"/>
<rect x="494.00" y="344.80" width="5.00" height="19.00" fill="#f5f5f5"/>
<rect x="494.00" y="344.80" width="5.00" height="19.00" fill="#444" filter="url(#nzD)" opacity="0.07"/>
<rect x="494.00" y="359.80" width="5.00" height="4.00" fill="#444" filter="url(#nzD)" opacity="0.7"/>
<rect x="494.00" y="356.80" width="5.00" height="3.00" fill="#444" filter="url(#nzD)" opacity="0.3"/>
<rect x="499.00" y="344.80" width="6.00" height="19.00" fill="#303030"/>
<rect x="499.00" y="344.80" width="6.00" height="19.00" fill="#444" filter="url(#nzD)" opacity="0.3"/>
<rect x="505.00" y="344.80" width="20.00" height="19.00" fill="#fafafa"/>
<rect x="505.00" y="344.80" width="20.00" height="19.00" fill="#444" filter="url(#nzD)" opacity="0.07"/>
<rect x="505.00" y="359.80" width="20.00" height="4.00" fill="#444" filter="url(#nzD)" opacity="0.7"/>
<rect x="505.00" y="356.80" width="20.00" height="3.00" fill="#444" filter="url(#nzD)" opacity="0.3"/>
<rect x="525.00" y="344.80" width="13.00" height="19.00" fill="#2a2a2a"/>
<rect x="525.00" y="344.80" width="13.00" height="19.00" fill="#444" filter="url(#nzD)" opacity="0.3"/>
<rect x="538.00" y="344.80" width="4.00" height="19.00" fill="#f4f4f4"/>
<rect x="538.00" y="344.80" width="4.00" height="19.00" fill="#444" filter="url(#nzD)" opacity="0.07"/>
<rect x="538.00" y="359.80" width="4.00" height="4.00" fill="#444" filter="url(#nzD)" opacity="0.7"/>
<rect x="538.00" y="356.80" width="4.00" height="3.00" fill="#444" filter="url(#nzD)" opacity="0.3"/>
<rect x="542.00" y="344.80" width="11.00" height="19.00" fill="#303030"/>
<rect x="542.00" y="344.80" width="11.00" height="19.00" fill="#444" filter="url(#nzD)" opacity="0.3"/>
<rect x="553.00" y="344.80" width="34.00" height="19.00" fill="#060606"/>
<rect x="587.00" y="344.80" width="13.00" height="19.00" fill="#f9f9f9"/>
<rect x="587.00" y="344.80" width="13.00" height="19.00" fill="#444" filter="url(#nzD)" opacity="0.07"/>
<rect x="587.00" y="359.80" width="13.00" height="4.00" fill="#444" filter="url(#nzD)" opacity="0.7"/>
<rect x="587.00" y="356.80" width="13.00" height="3.00" fill="#444" filter="url(#nzD)" opacity="0.3"/>
<rect x="600.00" y="344.80" width="20.00" height="19.00" fill="#8a8a8a"/>
<rect x="600.00" y="344.80" width="20.00" height="19.00" fill="#444" filter="url(#nzD)" opacity="0.3"/>
<rect x="620.00" y="344.80" width="25.00" height="19.00" fill="#f8f8f8"/>
<rect x="620.00" y="344.80" width="25.00" height="19.00" fill="#444" filter="url(#nzD)" opacity="0.07"/>
<rect x="620.00" y="359.80" width="25.00" height="4.00" fill="#444" filter="url(#nzD)" opacity="0.7"/>
<rect x="620.00" y="356.80" width="25.00" height="3.00" fill="#444" filter="url(#nzD)" opacity="0.3"/>
<rect x="645.00" y="344.80" width="3.30" height="19.00" fill="#404040"/>
<rect x="645.00" y="344.80" width="3.30" height="19.00" fill="#444" filter="url(#nzD)" opacity="0.3"/>
<rect x="190.20" y="344.80" width="35.40" height="19.00" fill="#fff" opacity="0.05"/>
<rect x="225.60" y="344.80" width="35.40" height="19.00" fill="#000" opacity="0.16"/>
<rect x="261.00" y="344.80" width="35.40" height="19.00" fill="#000" opacity="0.15"/>
<rect x="296.40" y="344.80" width="35.40" height="19.00" fill="#000" opacity="0.08"/>
<rect x="331.80" y="344.80" width="35.40" height="19.00" fill="#000" opacity="0.23"/>
<rect x="367.20" y="344.80" width="35.40" height="19.00" fill="#000" opacity="0.10"/>
<rect x="402.60" y="344.80" width="35.40" height="19.00" fill="#fff" opacity="0.09"/>
<rect x="438.00" y="344.80" width="35.40" height="19.00" fill="#fff" opacity="0.05"/>
<rect x="508.80" y="344.80" width="35.40" height="19.00" fill="#000" opacity="0.23"/>
<rect x="544.20" y="344.80" width="35.40" height="19.00" fill="#000" opacity="0.09"/>
<rect x="579.60" y="344.80" width="35.40" height="19.00" fill="#000" opacity="0.12"/>
<rect x="650.70" y="342.70" width="260.10" height="39.40" fill="#1c1c20" rx="2.4"/>
<rect x="651.00" y="343.00" width="259.50" height="38.80" fill="#4378aa" rx="2" stroke="#5f8cb6" stroke-width="0.7"/>
<rect x="652.00" y="344.80" width="13.00" height="19.00" fill="#efefef"/>
<rect x="652.00" y="344.80" width="13.00" height="19.00" fill="#444" filter="url(#nzD)" opacity="0.07"/>
<rect x="652.00" y="359.80" width="13.00" height="4.00" fill="#444" filter="url(#nzD)" opacity="0.7"/>
<rect x="652.00" y="356.80" width="13.00" height="3.00" fill="#444" filter="url(#nzD)" opacity="0.3"/>
<rect x="665.00" y="344.80" width="13.00" height="19.00" fill="#4a4a4a"/>
<rect x="665.00" y="344.80" width="13.00" height="19.00" fill="#444" filter="url(#nzD)" opacity="0.3"/>
<rect x="678.00" y="344.80" width="12.00" height="19.00" fill="#707070"/>
<rect x="678.00" y="344.80" width="12.00" height="19.00" fill="#444" filter="url(#nzD)" opacity="0.3"/>
<rect x="690.00" y="344.80" width="15.00" height="19.00" fill="#f6f6f6"/>
<rect x="690.00" y="344.80" width="15.00" height="19.00" fill="#444" filter="url(#nzD)" opacity="0.07"/>
<rect x="690.00" y="359.80" width="15.00" height="4.00" fill="#444" filter="url(#nzD)" opacity="0.7"/>
<rect x="690.00" y="356.80" width="15.00" height="3.00" fill="#444" filter="url(#nzD)" opacity="0.3"/>
<rect x="705.00" y="344.80" width="204.50" height="19.00" fill="#444" filter="url(#nzD)"/>
<rect x="652.00" y="344.80" width="35.40" height="19.00" fill="#000" opacity="0.18"/>
<rect x="687.40" y="344.80" width="35.40" height="19.00" fill="#fff" opacity="0.05"/>
<rect x="722.80" y="344.80" width="35.40" height="19.00" fill="#fff" opacity="0.03"/>
<rect x="758.20" y="344.80" width="35.40" height="19.00" fill="#000" opacity="0.10"/>
<rect x="793.60" y="344.80" width="35.40" height="19.00" fill="#fff" opacity="0.06"/>
<rect x="829.00" y="344.80" width="35.40" height="19.00" fill="#000" opacity="0.18"/>
<rect x="864.40" y="344.80" width="35.40" height="19.00" fill="#000" opacity="0.12"/>
<path d="M905.2 368.1 L905.9000000000001 369.90000000000003 L907.7 370.6 L905.9000000000001 371.3 L905.2 373.1 L904.5 371.3 L902.7 370.6 L904.5 369.90000000000003 Z" fill="#f0f4f8" stroke="none" stroke-width="1" />
<path d="M900.4 370.90000000000003 L900.932 372.26800000000003 L902.3 372.8 L900.932 373.332 L900.4 374.7 L899.8679999999999 373.332 L898.5 372.8 L899.8679999999999 372.26800000000003 Z" fill="#f0f4f8" stroke="none" stroke-width="1" />
<path d="M903.8 374.0 L904.4159999999999 375.584 L906.0 376.2 L904.4159999999999 376.816 L903.8 378.4 L903.184 376.816 L901.5999999999999 376.2 L903.184 375.584 Z" fill="#f0f4f8" stroke="none" stroke-width="1" />
<rect x="912.70" y="343.00" width="8.60" height="38.80" fill="#1c1c20" rx="2.4"/>
<rect x="913.10" y="343.40" width="7.80" height="38.00" fill="#44698f" rx="2" stroke="#5a7b9c" stroke-width="0.7"/>
<rect x="914.40" y="345.00" width="5.20" height="18.90" fill="#4f7295" stroke="#192736" stroke-width="0.9"/>
<rect x="944.90" y="343.20" width="37.00" height="38.80" fill="#1c1c20" rx="2.4"/>
<rect x="945.20" y="343.50" width="36.40" height="38.20" fill="#b9ad93" rx="2"/>
<rect x="945.20" y="363.60" width="36.40" height="0.90" fill="#a89c82"/>
<rect x="1002.30" y="343.20" width="19.20" height="38.80" fill="#1c1c20" rx="2.4"/>
<rect x="1002.60" y="343.50" width="18.60" height="38.20" fill="#b9ad93" rx="2"/>
<rect x="1002.60" y="363.60" width="18.60" height="0.90" fill="#a89c82"/>
<rect x="1028.60" y="343.20" width="37.70" height="38.80" fill="#1c1c20" rx="2.4"/>
<rect x="1028.90" y="343.50" width="37.10" height="38.20" fill="#b9ad93" rx="2"/>
<rect x="1028.90" y="363.60" width="37.10" height="0.90" fill="#a89c82"/>
<rect x="1076.70" y="343.20" width="37.30" height="38.80" fill="#1c1c20" rx="2.4"/>
<rect x="1077.00" y="343.50" width="36.70" height="38.20" fill="#b9ad93" rx="2"/>
<rect x="1077.00" y="363.60" width="36.70" height="0.90" fill="#a89c82"/>
<rect x="199.70" y="385.10" width="9.80" height="41.20" fill="#1e2a24" rx="2.5"/>
<rect x="200.20" y="385.60" width="8.80" height="40.20" fill="#439266" rx="2.2"/>
<rect x="200.30" y="408.20" width="8.60" height="0.90" fill="#367753"/>
<rect x="214.20" y="385.10" width="4.10" height="41.20" fill="#1e2a24" rx="1.1"/>
<rect x="214.70" y="385.60" width="3.10" height="40.20" fill="#439266" rx="0.8"/>
<rect x="214.80" y="408.20" width="2.90" height="0.90" fill="#367753"/>
<rect x="288.90" y="385.10" width="10.60" height="41.20" fill="#1e2a24" rx="2.5"/>
<rect x="289.40" y="385.60" width="9.60" height="40.20" fill="#439266" rx="2.2"/>
<rect x="289.50" y="408.20" width="9.40" height="0.90" fill="#367753"/>
<rect x="289.60" y="396.00" width="9.20" height="0.80" fill="#d8efe2"/>
<rect x="291.00" y="389.40" width="1.20" height="14.00" fill="#d8efe2"/>
<rect x="292.20" y="392.40" width="0.90" height="9.00" fill="#d8efe2"/>
<rect x="294.80" y="393.80" width="0.80" height="5.20" fill="#d8efe2"/>
<rect x="380.40" y="385.10" width="11.00" height="41.20" fill="#1e2a24" rx="2.5"/>
<rect x="380.90" y="385.60" width="10.00" height="40.20" fill="#439266" rx="2.2"/>
<rect x="381.00" y="408.20" width="9.80" height="0.90" fill="#367753"/>
<rect x="381.10" y="396.00" width="9.60" height="0.80" fill="#d8efe2"/>
<rect x="382.50" y="389.40" width="1.20" height="14.00" fill="#d8efe2"/>
<rect x="383.70" y="392.40" width="0.90" height="9.00" fill="#d8efe2"/>
<rect x="386.30" y="393.80" width="0.80" height="5.20" fill="#d8efe2"/>
<rect x="408.60" y="385.10" width="10.30" height="41.20" fill="#1e2a24" rx="2.5"/>
<rect x="409.10" y="385.60" width="9.30" height="40.20" fill="#439266" rx="2.2"/>
<rect x="409.20" y="408.20" width="9.10" height="0.90" fill="#367753"/>
<rect x="409.30" y="396.00" width="8.90" height="0.80" fill="#d8efe2"/>
<rect x="410.70" y="389.40" width="1.20" height="14.00" fill="#d8efe2"/>
<rect x="411.90" y="392.40" width="0.90" height="9.00" fill="#d8efe2"/>
<rect x="414.50" y="393.80" width="0.80" height="5.20" fill="#d8efe2"/>
<rect x="423.40" y="385.10" width="4.00" height="41.20" fill="#1e2a24" rx="1.1"/>
<rect x="423.90" y="385.60" width="3.00" height="40.20" fill="#439266" rx="0.8"/>
<rect x="424.00" y="408.20" width="2.80" height="0.90" fill="#367753"/>
<rect x="483.60" y="385.10" width="10.00" height="41.20" fill="#1e2a24" rx="2.5"/>
<rect x="484.10" y="385.60" width="9.00" height="40.20" fill="#439266" rx="2.2"/>
<rect x="484.20" y="408.20" width="8.80" height="0.90" fill="#367753"/>
<rect x="484.30" y="396.00" width="8.60" height="0.80" fill="#d8efe2"/>
<rect x="485.70" y="389.40" width="1.20" height="14.00" fill="#d8efe2"/>
<rect x="486.90" y="392.40" width="0.90" height="9.00" fill="#d8efe2"/>
<rect x="489.50" y="393.80" width="0.80" height="5.20" fill="#d8efe2"/>
<rect x="565.60" y="385.10" width="5.70" height="41.20" fill="#1e2a24" rx="1.1"/>
<rect x="566.10" y="385.60" width="4.70" height="40.20" fill="#439266" rx="0.8"/>
<rect x="566.20" y="408.20" width="4.50" height="0.90" fill="#367753"/>
<rect x="571.60" y="385.10" width="4.90" height="41.20" fill="#1e2a24" rx="1.1"/>
<rect x="572.10" y="385.60" width="3.90" height="40.20" fill="#439266" rx="0.8"/>
<rect x="572.20" y="408.20" width="3.70" height="0.90" fill="#367753"/>
<rect x="912.10" y="385.10" width="10.00" height="41.20" fill="#1e2a24" rx="2.5"/>
<rect x="912.60" y="385.60" width="9.00" height="40.20" fill="#439266" rx="2.2"/>
<rect x="912.70" y="408.20" width="8.80" height="0.90" fill="#367753"/>
<polygon points="913.60,388.81 914.38,387.68 915.16,388.50 915.93,388.38 916.71,389.24 917.49,388.88 918.27,387.79 919.04,389.51 919.82,387.37 920.60,388.11 920.60,405.89 919.82,406.63 919.04,404.49 918.27,406.21 917.49,405.12 916.71,404.76 915.93,405.62 915.16,405.50 914.38,406.32 913.60,405.19" fill="#d8efe2" />
<rect x="913.60" y="396.65" width="7.00" height="0.70" fill="#c2d7cb"/>
<rect x="139.70" y="469.90" width="28.90" height="41.20" fill="#1e2a24" rx="2.5"/>
<rect x="140.20" y="470.40" width="27.90" height="40.20" fill="#386a4b" rx="2.2"/>
<rect x="140.30" y="493.00" width="27.70" height="0.90" fill="#2d563d"/>
<rect x="140.40" y="481.50" width="27.50" height="0.80" fill="#d8efe2"/>
<polygon points="158.80,481.90 159.00,473.00 159.50,471.20 160.80,471.20 161.30,473.40 161.30,481.90 161.30,490.20 160.80,492.50 159.50,492.50 159.00,490.60" fill="#d8efe2"/>
<polygon points="163.30,481.90 163.50,473.00 164.00,471.20 165.30,471.20 165.80,473.40 165.80,481.90 165.80,490.20 165.30,492.50 164.00,492.50 163.50,490.60" fill="#d8efe2"/>
<polygon points="157.10,481.90 158.10,479.70 158.90,477.70 165.70,477.70 166.50,479.70 167.50,481.90 166.50,484.10 165.70,486.30 158.90,486.30 158.10,484.10" fill="#d8efe2"/>
<rect x="169.40" y="469.90" width="18.40" height="41.20" fill="#1e2a24" rx="2.5"/>
<rect x="169.90" y="470.40" width="17.40" height="40.20" fill="#386a4b" rx="2.2"/>
<rect x="170.00" y="493.00" width="17.20" height="0.90" fill="#2d563d"/>
<rect x="170.10" y="481.50" width="17.00" height="0.80" fill="#d8efe2"/>
<polygon points="172.20,481.90 172.40,473.00 172.90,471.20 174.20,471.20 174.70,473.40 174.70,481.90 174.70,490.20 174.20,492.50 172.90,492.50 172.40,490.60" fill="#d8efe2"/>
<polygon points="176.70,481.90 176.90,473.00 177.40,471.20 178.70,471.20 179.20,473.40 179.20,481.90 179.20,490.20 178.70,492.50 177.40,492.50 176.90,490.60" fill="#d8efe2"/>
<polygon points="170.50,481.90 171.50,479.70 172.30,477.70 179.10,477.70 179.90,479.70 180.90,481.90 179.90,484.10 179.10,486.30 172.30,486.30 171.50,484.10" fill="#d8efe2"/>
<rect x="188.90" y="469.90" width="10.20" height="41.20" fill="#1e2a24" rx="2.5"/>
<rect x="189.40" y="470.40" width="9.20" height="40.20" fill="#386a4b" rx="2.2"/>
<rect x="189.50" y="493.00" width="9.00" height="0.90" fill="#2d563d"/>
<rect x="199.70" y="469.90" width="29.03" height="41.20" fill="#1e2a24" rx="2.5"/>
<rect x="200.20" y="470.40" width="28.03" height="40.20" fill="#386a4b" rx="2.2"/>
<rect x="200.30" y="493.00" width="27.83" height="0.90" fill="#2d563d"/>
<rect x="200.40" y="481.50" width="27.63" height="0.80" fill="#d8efe2"/>
<polygon points="201.46,481.90 201.66,473.00 202.16,471.20 203.46,471.20 203.96,473.40 203.96,481.90 203.96,490.20 203.46,492.50 202.16,492.50 201.66,490.60" fill="#d8efe2"/>
<polygon points="205.96,481.90 206.16,473.00 206.66,471.20 207.96,471.20 208.46,473.40 208.46,481.90 208.46,490.20 207.96,492.50 206.66,492.50 206.16,490.60" fill="#d8efe2"/>
<polygon points="199.76,481.90 200.76,479.70 201.56,477.70 208.36,477.70 209.16,479.70 210.16,481.90 209.16,484.10 208.36,486.30 201.56,486.30 200.76,484.10" fill="#d8efe2"/>
<polygon points="219.97,481.90 220.17,473.00 220.67,471.20 221.97,471.20 222.47,473.40 222.47,481.90 222.47,490.20 221.97,492.50 220.67,492.50 220.17,490.60" fill="#d8efe2"/>
<polygon points="224.47,481.90 224.67,473.00 225.17,471.20 226.47,471.20 226.97,473.40 226.97,481.90 226.97,490.20 226.47,492.50 225.17,492.50 224.67,490.60" fill="#d8efe2"/>
<polygon points="218.27,481.90 219.27,479.70 220.07,477.70 226.87,477.70 227.67,479.70 228.67,481.90 227.67,484.10 226.87,486.30 220.07,486.30 219.27,484.10" fill="#d8efe2"/>
<rect x="229.53" y="469.90" width="29.03" height="41.20" fill="#1e2a24" rx="2.5"/>
<rect x="230.03" y="470.40" width="28.03" height="40.20" fill="#386a4b" rx="2.2"/>
<rect x="230.13" y="493.00" width="27.83" height="0.90" fill="#2d563d"/>
<rect x="230.23" y="481.50" width="27.63" height="0.80" fill="#d8efe2"/>
<polygon points="231.29,481.90 231.49,473.00 231.99,471.20 233.29,471.20 233.79,473.40 233.79,481.90 233.79,490.20 233.29,492.50 231.99,492.50 231.49,490.60" fill="#d8efe2"/>
<polygon points="235.79,481.90 235.99,473.00 236.49,471.20 237.79,471.20 238.29,473.40 238.29,481.90 238.29,490.20 237.79,492.50 236.49,492.50 235.99,490.60" fill="#d8efe2"/>
<polygon points="229.59,481.90 230.59,479.70 231.39,477.70 238.19,477.70 238.99,479.70 239.99,481.90 238.99,484.10 238.19,486.30 231.39,486.30 230.59,484.10" fill="#d8efe2"/>
<polygon points="249.80,481.90 250.00,473.00 250.50,471.20 251.80,471.20 252.30,473.40 252.30,481.90 252.30,490.20 251.80,492.50 250.50,492.50 250.00,490.60" fill="#d8efe2"/>
<polygon points="254.30,481.90 254.50,473.00 255.00,471.20 256.30,471.20 256.80,473.40 256.80,481.90 256.80,490.20 256.30,492.50 255.00,492.50 254.50,490.60" fill="#d8efe2"/>
<polygon points="248.10,481.90 249.10,479.70 249.90,477.70 256.70,477.70 257.50,479.70 258.50,481.90 257.50,484.10 256.70,486.30 249.90,486.30 249.10,484.10" fill="#d8efe2"/>
<rect x="259.36" y="469.90" width="29.03" height="41.20" fill="#1e2a24" rx="2.5"/>
<rect x="259.86" y="470.40" width="28.03" height="40.20" fill="#386a4b" rx="2.2"/>
<rect x="259.96" y="493.00" width="27.83" height="0.90" fill="#2d563d"/>
<rect x="260.06" y="481.50" width="27.63" height="0.80" fill="#d8efe2"/>
<polygon points="261.12,481.90 261.32,473.00 261.82,471.20 263.12,471.20 263.62,473.40 263.62,481.90 263.62,490.20 263.12,492.50 261.82,492.50 261.32,490.60" fill="#d8efe2"/>
<polygon points="265.62,481.90 265.82,473.00 266.32,471.20 267.62,471.20 268.12,473.40 268.12,481.90 268.12,490.20 267.62,492.50 266.32,492.50 265.82,490.60" fill="#d8efe2"/>
<polygon points="259.42,481.90 260.42,479.70 261.22,477.70 268.02,477.70 268.82,479.70 269.82,481.90 268.82,484.10 268.02,486.30 261.22,486.30 260.42,484.10" fill="#d8efe2"/>
<polygon points="279.63,481.90 279.83,473.00 280.33,471.20 281.63,471.20 282.13,473.40 282.13,481.90 282.13,490.20 281.63,492.50 280.33,492.50 279.83,490.60" fill="#d8efe2"/>
<polygon points="284.13,481.90 284.33,473.00 284.83,471.20 286.13,471.20 286.63,473.40 286.63,481.90 286.63,490.20 286.13,492.50 284.83,492.50 284.33,490.60" fill="#d8efe2"/>
<polygon points="277.93,481.90 278.93,479.70 279.73,477.70 286.53,477.70 287.33,479.70 288.33,481.90 287.33,484.10 286.53,486.30 279.73,486.30 278.93,484.10" fill="#d8efe2"/>
<rect x="289.19" y="469.90" width="29.03" height="41.20" fill="#1e2a24" rx="2.5"/>
<rect x="289.69" y="470.40" width="28.03" height="40.20" fill="#386a4b" rx="2.2"/>
<rect x="289.79" y="493.00" width="27.83" height="0.90" fill="#2d563d"/>
<rect x="289.89" y="481.50" width="27.63" height="0.80" fill="#d8efe2"/>
<polygon points="290.95,481.90 291.15,473.00 291.65,471.20 292.95,471.20 293.45,473.40 293.45,481.90 293.45,490.20 292.95,492.50 291.65,492.50 291.15,490.60" fill="#d8efe2"/>
<polygon points="295.45,481.90 295.65,473.00 296.15,471.20 297.45,471.20 297.95,473.40 297.95,481.90 297.95,490.20 297.45,492.50 296.15,492.50 295.65,490.60" fill="#d8efe2"/>
<polygon points="289.25,481.90 290.25,479.70 291.05,477.70 297.85,477.70 298.65,479.70 299.65,481.90 298.65,484.10 297.85,486.30 291.05,486.30 290.25,484.10" fill="#d8efe2"/>
<polygon points="309.46,481.90 309.66,473.00 310.16,471.20 311.46,471.20 311.96,473.40 311.96,481.90 311.96,490.20 311.46,492.50 310.16,492.50 309.66,490.60" fill="#d8efe2"/>
<polygon points="313.96,481.90 314.16,473.00 314.66,471.20 315.96,471.20 316.46,473.40 316.46,481.90 316.46,490.20 315.96,492.50 314.66,492.50 314.16,490.60" fill="#d8efe2"/>
<polygon points="307.76,481.90 308.76,479.70 309.56,477.70 316.36,477.70 317.16,479.70 318.16,481.90 317.16,484.10 316.36,486.30 309.56,486.30 308.76,484.10" fill="#d8efe2"/>
<rect x="319.02" y="469.90" width="29.03" height="41.20" fill="#1e2a24" rx="2.5"/>
<rect x="319.52" y="470.40" width="28.03" height="40.20" fill="#386a4b" rx="2.2"/>
<rect x="319.62" y="493.00" width="27.83" height="0.90" fill="#2d563d"/>
<rect x="319.72" y="481.50" width="27.63" height="0.80" fill="#d8efe2"/>
<polygon points="320.78,481.90 320.98,473.00 321.48,471.20 322.78,471.20 323.28,473.40 323.28,481.90 323.28,490.20 322.78,492.50 321.48,492.50 320.98,490.60" fill="#d8efe2"/>
<polygon points="325.28,481.90 325.48,473.00 325.98,471.20 327.28,471.20 327.78,473.40 327.78,481.90 327.78,490.20 327.28,492.50 325.98,492.50 325.48,490.60" fill="#d8efe2"/>
<polygon points="319.08,481.90 320.08,479.70 320.88,477.70 327.68,477.70 328.48,479.70 329.48,481.90 328.48,484.10 327.68,486.30 320.88,486.30 320.08,484.10" fill="#d8efe2"/>
<polygon points="339.29,481.90 339.49,473.00 339.99,471.20 341.29,471.20 341.79,473.40 341.79,481.90 341.79,490.20 341.29,492.50 339.99,492.50 339.49,490.60" fill="#d8efe2"/>
<polygon points="343.79,481.90 343.99,473.00 344.49,471.20 345.79,471.20 346.29,473.40 346.29,481.90 346.29,490.20 345.79,492.50 344.49,492.50 343.99,490.60" fill="#d8efe2"/>
<polygon points="337.59,481.90 338.59,479.70 339.39,477.70 346.19,477.70 346.99,479.70 347.99,481.90 346.99,484.10 346.19,486.30 339.39,486.30 338.59,484.10" fill="#d8efe2"/>
<rect x="348.85" y="469.90" width="29.03" height="41.20" fill="#1e2a24" rx="2.5"/>
<rect x="349.35" y="470.40" width="28.03" height="40.20" fill="#386a4b" rx="2.2"/>
<rect x="349.45" y="493.00" width="27.83" height="0.90" fill="#2d563d"/>
<rect x="349.55" y="481.50" width="27.63" height="0.80" fill="#d8efe2"/>
<polygon points="350.61,481.90 350.81,473.00 351.31,471.20 352.61,471.20 353.11,473.40 353.11,481.90 353.11,490.20 352.61,492.50 351.31,492.50 350.81,490.60" fill="#d8efe2"/>
<polygon points="355.11,481.90 355.31,473.00 355.81,471.20 357.11,471.20 357.61,473.40 357.61,481.90 357.61,490.20 357.11,492.50 355.81,492.50 355.31,490.60" fill="#d8efe2"/>
<polygon points="348.91,481.90 349.91,479.70 350.71,477.70 357.51,477.70 358.31,479.70 359.31,481.90 358.31,484.10 357.51,486.30 350.71,486.30 349.91,484.10" fill="#d8efe2"/>
<polygon points="369.12,481.90 369.32,473.00 369.82,471.20 371.12,471.20 371.62,473.40 371.62,481.90 371.62,490.20 371.12,492.50 369.82,492.50 369.32,490.60" fill="#d8efe2"/>
<polygon points="373.62,481.90 373.82,473.00 374.32,471.20 375.62,471.20 376.12,473.40 376.12,481.90 376.12,490.20 375.62,492.50 374.32,492.50 373.82,490.60" fill="#d8efe2"/>
<polygon points="367.42,481.90 368.42,479.70 369.22,477.70 376.02,477.70 376.82,479.70 377.82,481.90 376.82,484.10 376.02,486.30 369.22,486.30 368.42,484.10" fill="#d8efe2"/>
<rect x="378.68" y="469.90" width="29.03" height="41.20" fill="#1e2a24" rx="2.5"/>
<rect x="379.18" y="470.40" width="28.03" height="40.20" fill="#386a4b" rx="2.2"/>
<rect x="379.28" y="493.00" width="27.83" height="0.90" fill="#2d563d"/>
<rect x="379.38" y="481.50" width="27.63" height="0.80" fill="#d8efe2"/>
<polygon points="380.44,481.90 380.64,473.00 381.14,471.20 382.44,471.20 382.94,473.40 382.94,481.90 382.94,490.20 382.44,492.50 381.14,492.50 380.64,490.60" fill="#d8efe2"/>
<polygon points="384.94,481.90 385.14,473.00 385.64,471.20 386.94,471.20 387.44,473.40 387.44,481.90 387.44,490.20 386.94,492.50 385.64,492.50 385.14,490.60" fill="#d8efe2"/>
<polygon points="378.74,481.90 379.74,479.70 380.54,477.70 387.34,477.70 388.14,479.70 389.14,481.90 388.14,484.10 387.34,486.30 380.54,486.30 379.74,484.10" fill="#d8efe2"/>
<polygon points="398.95,481.90 399.15,473.00 399.65,471.20 400.95,471.20 401.45,473.40 401.45,481.90 401.45,490.20 400.95,492.50 399.65,492.50 399.15,490.60" fill="#d8efe2"/>
<polygon points="403.45,481.90 403.65,473.00 404.15,471.20 405.45,471.20 405.95,473.40 405.95,481.90 405.95,490.20 405.45,492.50 404.15,492.50 403.65,490.60" fill="#d8efe2"/>
<polygon points="397.25,481.90 398.25,479.70 399.05,477.70 405.85,477.70 406.65,479.70 407.65,481.90 406.65,484.10 405.85,486.30 399.05,486.30 398.25,484.10" fill="#d8efe2"/>
<rect x="408.51" y="469.90" width="29.03" height="41.20" fill="#1e2a24" rx="2.5"/>
<rect x="409.01" y="470.40" width="28.03" height="40.20" fill="#386a4b" rx="2.2"/>
<rect x="409.11" y="493.00" width="27.83" height="0.90" fill="#2d563d"/>
<rect x="409.21" y="481.50" width="27.63" height="0.80" fill="#d8efe2"/>
<polygon points="410.27,481.90 410.47,473.00 410.97,471.20 412.27,471.20 412.77,473.40 412.77,481.90 412.77,490.20 412.27,492.50 410.97,492.50 410.47,490.60" fill="#d8efe2"/>
<polygon points="414.77,481.90 414.97,473.00 415.47,471.20 416.77,471.20 417.27,473.40 417.27,481.90 417.27,490.20 416.77,492.50 415.47,492.50 414.97,490.60" fill="#d8efe2"/>
<polygon points="408.57,481.90 409.57,479.70 410.37,477.70 417.17,477.70 417.97,479.70 418.97,481.90 417.97,484.10 417.17,486.30 410.37,486.30 409.57,484.10" fill="#d8efe2"/>
<polygon points="428.78,481.90 428.98,473.00 429.48,471.20 430.78,471.20 431.28,473.40 431.28,481.90 431.28,490.20 430.78,492.50 429.48,492.50 428.98,490.60" fill="#d8efe2"/>
<polygon points="433.28,481.90 433.48,473.00 433.98,471.20 435.28,471.20 435.78,473.40 435.78,481.90 435.78,490.20 435.28,492.50 433.98,492.50 433.48,490.60" fill="#d8efe2"/>
<polygon points="427.08,481.90 428.08,479.70 428.88,477.70 435.68,477.70 436.48,479.70 437.48,481.90 436.48,484.10 435.68,486.30 428.88,486.30 428.08,484.10" fill="#d8efe2"/>
<rect x="438.34" y="469.90" width="29.03" height="41.20" fill="#1e2a24" rx="2.5"/>
<rect x="438.84" y="470.40" width="28.03" height="40.20" fill="#386a4b" rx="2.2"/>
<rect x="438.94" y="493.00" width="27.83" height="0.90" fill="#2d563d"/>
<rect x="439.04" y="481.50" width="27.63" height="0.80" fill="#d8efe2"/>
<polygon points="440.10,481.90 440.30,473.00 440.80,471.20 442.10,471.20 442.60,473.40 442.60,481.90 442.60,490.20 442.10,492.50 440.80,492.50 440.30,490.60" fill="#d8efe2"/>
<polygon points="444.60,481.90 444.80,473.00 445.30,471.20 446.60,471.20 447.10,473.40 447.10,481.90 447.10,490.20 446.60,492.50 445.30,492.50 444.80,490.60" fill="#d8efe2"/>
<polygon points="438.40,481.90 439.40,479.70 440.20,477.70 447.00,477.70 447.80,479.70 448.80,481.90 447.80,484.10 447.00,486.30 440.20,486.30 439.40,484.10" fill="#d8efe2"/>
<polygon points="458.61,481.90 458.81,473.00 459.31,471.20 460.61,471.20 461.11,473.40 461.11,481.90 461.11,490.20 460.61,492.50 459.31,492.50 458.81,490.60" fill="#d8efe2"/>
<polygon points="463.11,481.90 463.31,473.00 463.81,471.20 465.11,471.20 465.61,473.40 465.61,481.90 465.61,490.20 465.11,492.50 463.81,492.50 463.31,490.60" fill="#d8efe2"/>
<polygon points="456.91,481.90 457.91,479.70 458.71,477.70 465.51,477.70 466.31,479.70 467.31,481.90 466.31,484.10 465.51,486.30 458.71,486.30 457.91,484.10" fill="#d8efe2"/>
<rect x="468.17" y="469.90" width="29.03" height="41.20" fill="#1e2a24" rx="2.5"/>
<rect x="468.67" y="470.40" width="28.03" height="40.20" fill="#386a4b" rx="2.2"/>
<rect x="468.77" y="493.00" width="27.83" height="0.90" fill="#2d563d"/>
<rect x="468.87" y="481.50" width="27.63" height="0.80" fill="#d8efe2"/>
<polygon points="469.93,481.90 470.13,473.00 470.63,471.20 471.93,471.20 472.43,473.40 472.43,481.90 472.43,490.20 471.93,492.50 470.63,492.50 470.13,490.60" fill="#d8efe2"/>
<polygon points="474.43,481.90 474.63,473.00 475.13,471.20 476.43,471.20 476.93,473.40 476.93,481.90 476.93,490.20 476.43,492.50 475.13,492.50 474.63,490.60" fill="#d8efe2"/>
<polygon points="468.23,481.90 469.23,479.70 470.03,477.70 476.83,477.70 477.63,479.70 478.63,481.90 477.63,484.10 476.83,486.30 470.03,486.30 469.23,484.10" fill="#d8efe2"/>
<polygon points="488.44,481.90 488.64,473.00 489.14,471.20 490.44,471.20 490.94,473.40 490.94,481.90 490.94,490.20 490.44,492.50 489.14,492.50 488.64,490.60" fill="#d8efe2"/>
<polygon points="492.94,481.90 493.14,473.00 493.64,471.20 494.94,471.20 495.44,473.40 495.44,481.90 495.44,490.20 494.94,492.50 493.64,492.50 493.14,490.60" fill="#d8efe2"/>
<polygon points="486.74,481.90 487.74,479.70 488.54,477.70 495.34,477.70 496.14,479.70 497.14,481.90 496.14,484.10 495.34,486.30 488.54,486.30 487.74,484.10" fill="#d8efe2"/>
<rect x="498.00" y="469.90" width="29.03" height="41.20" fill="#1e2a24" rx="2.5"/>
<rect x="498.50" y="470.40" width="28.03" height="40.20" fill="#386a4b" rx="2.2"/>
<rect x="498.60" y="493.00" width="27.83" height="0.90" fill="#2d563d"/>
<rect x="498.70" y="481.50" width="27.63" height="0.80" fill="#d8efe2"/>
<polygon points="499.76,481.90 499.96,473.00 500.46,471.20 501.76,471.20 502.26,473.40 502.26,481.90 502.26,490.20 501.76,492.50 500.46,492.50 499.96,490.60" fill="#d8efe2"/>
<polygon points="504.26,481.90 504.46,473.00 504.96,471.20 506.26,471.20 506.76,473.40 506.76,481.90 506.76,490.20 506.26,492.50 504.96,492.50 504.46,490.60" fill="#d8efe2"/>
<polygon points="498.06,481.90 499.06,479.70 499.86,477.70 506.66,477.70 507.46,479.70 508.46,481.90 507.46,484.10 506.66,486.30 499.86,486.30 499.06,484.10" fill="#d8efe2"/>
<polygon points="518.27,481.90 518.47,473.00 518.97,471.20 520.27,471.20 520.77,473.40 520.77,481.90 520.77,490.20 520.27,492.50 518.97,492.50 518.47,490.60" fill="#d8efe2"/>
<polygon points="522.77,481.90 522.97,473.00 523.47,471.20 524.77,471.20 525.27,473.40 525.27,481.90 525.27,490.20 524.77,492.50 523.47,492.50 522.97,490.60" fill="#d8efe2"/>
<polygon points="516.57,481.90 517.57,479.70 518.37,477.70 525.17,477.70 525.97,479.70 526.97,481.90 525.97,484.10 525.17,486.30 518.37,486.30 517.57,484.10" fill="#d8efe2"/>
<rect x="527.83" y="469.90" width="29.03" height="41.20" fill="#1e2a24" rx="2.5"/>
<rect x="528.33" y="470.40" width="28.03" height="40.20" fill="#386a4b" rx="2.2"/>
<rect x="528.43" y="493.00" width="27.83" height="0.90" fill="#2d563d"/>
<rect x="528.53" y="481.50" width="27.63" height="0.80" fill="#d8efe2"/>
<polygon points="529.59,481.90 529.79,473.00 530.29,471.20 531.59,471.20 532.09,473.40 532.09,481.90 532.09,490.20 531.59,492.50 530.29,492.50 529.79,490.60" fill="#d8efe2"/>
<polygon points="534.09,481.90 534.29,473.00 534.79,471.20 536.09,471.20 536.59,473.40 536.59,481.90 536.59,490.20 536.09,492.50 534.79,492.50 534.29,490.60" fill="#d8efe2"/>
<polygon points="527.89,481.90 528.89,479.70 529.69,477.70 536.49,477.70 537.29,479.70 538.29,481.90 537.29,484.10 536.49,486.30 529.69,486.30 528.89,484.10" fill="#d8efe2"/>
<polygon points="548.10,481.90 548.30,473.00 548.80,471.20 550.10,471.20 550.60,473.40 550.60,481.90 550.60,490.20 550.10,492.50 548.80,492.50 548.30,490.60" fill="#d8efe2"/>
<polygon points="552.60,481.90 552.80,473.00 553.30,471.20 554.60,471.20 555.10,473.40 555.10,481.90 555.10,490.20 554.60,492.50 553.30,492.50 552.80,490.60" fill="#d8efe2"/>
<polygon points="546.40,481.90 547.40,479.70 548.20,477.70 555.00,477.70 555.80,479.70 556.80,481.90 555.80,484.10 555.00,486.30 548.20,486.30 547.40,484.10" fill="#d8efe2"/>
<rect x="557.66" y="469.90" width="29.03" height="41.20" fill="#1e2a24" rx="2.5"/>
<rect x="558.16" y="470.40" width="28.03" height="40.20" fill="#386a4b" rx="2.2"/>
<rect x="558.26" y="493.00" width="27.83" height="0.90" fill="#2d563d"/>
<rect x="558.36" y="481.50" width="27.63" height="0.80" fill="#d8efe2"/>
<polygon points="559.42,481.90 559.62,473.00 560.12,471.20 561.42,471.20 561.92,473.40 561.92,481.90 561.92,490.20 561.42,492.50 560.12,492.50 559.62,490.60" fill="#d8efe2"/>
<polygon points="563.92,481.90 564.12,473.00 564.62,471.20 565.92,471.20 566.42,473.40 566.42,481.90 566.42,490.20 565.92,492.50 564.62,492.50 564.12,490.60" fill="#d8efe2"/>
<polygon points="557.72,481.90 558.72,479.70 559.52,477.70 566.32,477.70 567.12,479.70 568.12,481.90 567.12,484.10 566.32,486.30 559.52,486.30 558.72,484.10" fill="#d8efe2"/>
<polygon points="577.93,481.90 578.13,473.00 578.63,471.20 579.93,471.20 580.43,473.40 580.43,481.90 580.43,490.20 579.93,492.50 578.63,492.50 578.13,490.60" fill="#d8efe2"/>
<polygon points="582.43,481.90 582.63,473.00 583.13,471.20 584.43,471.20 584.93,473.40 584.93,481.90 584.93,490.20 584.43,492.50 583.13,492.50 582.63,490.60" fill="#d8efe2"/>
<polygon points="576.23,481.90 577.23,479.70 578.03,477.70 584.83,477.70 585.63,479.70 586.63,481.90 585.63,484.10 584.83,486.30 578.03,486.30 577.23,484.10" fill="#d8efe2"/>
<rect x="587.49" y="469.90" width="29.03" height="41.20" fill="#1e2a24" rx="2.5"/>
<rect x="587.99" y="470.40" width="28.03" height="40.20" fill="#386a4b" rx="2.2"/>
<rect x="588.09" y="493.00" width="27.83" height="0.90" fill="#2d563d"/>
<rect x="588.19" y="481.50" width="27.63" height="0.80" fill="#d8efe2"/>
<polygon points="589.25,481.90 589.45,473.00 589.95,471.20 591.25,471.20 591.75,473.40 591.75,481.90 591.75,490.20 591.25,492.50 589.95,492.50 589.45,490.60" fill="#d8efe2"/>
<polygon points="593.75,481.90 593.95,473.00 594.45,471.20 595.75,471.20 596.25,473.40 596.25,481.90 596.25,490.20 595.75,492.50 594.45,492.50 593.95,490.60" fill="#d8efe2"/>
<polygon points="587.55,481.90 588.55,479.70 589.35,477.70 596.15,477.70 596.95,479.70 597.95,481.90 596.95,484.10 596.15,486.30 589.35,486.30 588.55,484.10" fill="#d8efe2"/>
<polygon points="607.76,481.90 607.96,473.00 608.46,471.20 609.76,471.20 610.26,473.40 610.26,481.90 610.26,490.20 609.76,492.50 608.46,492.50 607.96,490.60" fill="#d8efe2"/>
<polygon points="612.26,481.90 612.46,473.00 612.96,471.20 614.26,471.20 614.76,473.40 614.76,481.90 614.76,490.20 614.26,492.50 612.96,492.50 612.46,490.60" fill="#d8efe2"/>
<polygon points="606.06,481.90 607.06,479.70 607.86,477.70 614.66,477.70 615.46,479.70 616.46,481.90 615.46,484.10 614.66,486.30 607.86,486.30 607.06,484.10" fill="#d8efe2"/>
<rect x="617.32" y="469.90" width="29.03" height="41.20" fill="#1e2a24" rx="2.5"/>
<rect x="617.82" y="470.40" width="28.03" height="40.20" fill="#386a4b" rx="2.2"/>
<rect x="617.92" y="493.00" width="27.83" height="0.90" fill="#2d563d"/>
<rect x="618.02" y="481.50" width="27.63" height="0.80" fill="#d8efe2"/>
<polygon points="619.08,481.90 619.28,473.00 619.78,471.20 621.08,471.20 621.58,473.40 621.58,481.90 621.58,490.20 621.08,492.50 619.78,492.50 619.28,490.60" fill="#d8efe2"/>
<polygon points="623.58,481.90 623.78,473.00 624.28,471.20 625.58,471.20 626.08,473.40 626.08,481.90 626.08,490.20 625.58,492.50 624.28,492.50 623.78,490.60" fill="#d8efe2"/>
<polygon points="617.38,481.90 618.38,479.70 619.18,477.70 625.98,477.70 626.78,479.70 627.78,481.90 626.78,484.10 625.98,486.30 619.18,486.30 618.38,484.10" fill="#d8efe2"/>
<polygon points="637.59,481.90 637.79,473.00 638.29,471.20 639.59,471.20 640.09,473.40 640.09,481.90 640.09,490.20 639.59,492.50 638.29,492.50 637.79,490.60" fill="#d8efe2"/>
<polygon points="642.09,481.90 642.29,473.00 642.79,471.20 644.09,471.20 644.59,473.40 644.59,481.90 644.59,490.20 644.09,492.50 642.79,492.50 642.29,490.60" fill="#d8efe2"/>
<polygon points="635.89,481.90 636.89,479.70 637.69,477.70 644.49,477.70 645.29,479.70 646.29,481.90 645.29,484.10 644.49,486.30 637.69,486.30 636.89,484.10" fill="#d8efe2"/>
<rect x="647.15" y="469.90" width="29.03" height="41.20" fill="#1e2a24" rx="2.5"/>
<rect x="647.65" y="470.40" width="28.03" height="40.20" fill="#386a4b" rx="2.2"/>
<rect x="647.75" y="493.00" width="27.83" height="0.90" fill="#2d563d"/>
<rect x="647.85" y="481.50" width="27.63" height="0.80" fill="#d8efe2"/>
<polygon points="648.91,481.90 649.11,473.00 649.61,471.20 650.91,471.20 651.41,473.40 651.41,481.90 651.41,490.20 650.91,492.50 649.61,492.50 649.11,490.60" fill="#d8efe2"/>
<polygon points="653.41,481.90 653.61,473.00 654.11,471.20 655.41,471.20 655.91,473.40 655.91,481.90 655.91,490.20 655.41,492.50 654.11,492.50 653.61,490.60" fill="#d8efe2"/>
<polygon points="647.21,481.90 648.21,479.70 649.01,477.70 655.81,477.70 656.61,479.70 657.61,481.90 656.61,484.10 655.81,486.30 649.01,486.30 648.21,484.10" fill="#d8efe2"/>
<polygon points="667.42,481.90 667.62,473.00 668.12,471.20 669.42,471.20 669.92,473.40 669.92,481.90 669.92,490.20 669.42,492.50 668.12,492.50 667.62,490.60" fill="#d8efe2"/>
<polygon points="671.92,481.90 672.12,473.00 672.62,471.20 673.92,471.20 674.42,473.40 674.42,481.90 674.42,490.20 673.92,492.50 672.62,492.50 672.12,490.60" fill="#d8efe2"/>
<polygon points="665.72,481.90 666.72,479.70 667.52,477.70 674.32,477.70 675.12,479.70 676.12,481.90 675.12,484.10 674.32,486.30 667.52,486.30 666.72,484.10" fill="#d8efe2"/>
<rect x="676.98" y="469.90" width="29.03" height="41.20" fill="#1e2a24" rx="2.5"/>
<rect x="677.48" y="470.40" width="28.03" height="40.20" fill="#386a4b" rx="2.2"/>
<rect x="677.58" y="493.00" width="27.83" height="0.90" fill="#2d563d"/>
<rect x="677.68" y="481.50" width="27.63" height="0.80" fill="#d8efe2"/>
<polygon points="678.74,481.90 678.94,473.00 679.44,471.20 680.74,471.20 681.24,473.40 681.24,481.90 681.24,490.20 680.74,492.50 679.44,492.50 678.94,490.60" fill="#d8efe2"/>
<polygon points="683.24,481.90 683.44,473.00 683.94,471.20 685.24,471.20 685.74,473.40 685.74,481.90 685.74,490.20 685.24,492.50 683.94,492.50 683.44,490.60" fill="#d8efe2"/>
<polygon points="677.04,481.90 678.04,479.70 678.84,477.70 685.64,477.70 686.44,479.70 687.44,481.90 686.44,484.10 685.64,486.30 678.84,486.30 678.04,484.10" fill="#d8efe2"/>
<polygon points="697.25,481.90 697.45,473.00 697.95,471.20 699.25,471.20 699.75,473.40 699.75,481.90 699.75,490.20 699.25,492.50 697.95,492.50 697.45,490.60" fill="#d8efe2"/>
<polygon points="701.75,481.90 701.95,473.00 702.45,471.20 703.75,471.20 704.25,473.40 704.25,481.90 704.25,490.20 703.75,492.50 702.45,492.50 701.95,490.60" fill="#d8efe2"/>
<polygon points="695.55,481.90 696.55,479.70 697.35,477.70 704.15,477.70 704.95,479.70 705.95,481.90 704.95,484.10 704.15,486.30 697.35,486.30 696.55,484.10" fill="#d8efe2"/>
<rect x="706.81" y="469.90" width="29.03" height="41.20" fill="#1e2a24" rx="2.5"/>
<rect x="707.31" y="470.40" width="28.03" height="40.20" fill="#386a4b" rx="2.2"/>
<rect x="707.41" y="493.00" width="27.83" height="0.90" fill="#2d563d"/>
<rect x="707.51" y="481.50" width="27.63" height="0.80" fill="#d8efe2"/>
<polygon points="708.57,481.90 708.77,473.00 709.27,471.20 710.57,471.20 711.07,473.40 711.07,481.90 711.07,490.20 710.57,492.50 709.27,492.50 708.77,490.60" fill="#d8efe2"/>
<polygon points="713.07,481.90 713.27,473.00 713.77,471.20 715.07,471.20 715.57,473.40 715.57,481.90 715.57,490.20 715.07,492.50 713.77,492.50 713.27,490.60" fill="#d8efe2"/>
<polygon points="706.87,481.90 707.87,479.70 708.67,477.70 715.47,477.70 716.27,479.70 717.27,481.90 716.27,484.10 715.47,486.30 708.67,486.30 707.87,484.10" fill="#d8efe2"/>
<polygon points="727.08,481.90 727.28,473.00 727.78,471.20 729.08,471.20 729.58,473.40 729.58,481.90 729.58,490.20 729.08,492.50 727.78,492.50 727.28,490.60" fill="#d8efe2"/>
<polygon points="731.58,481.90 731.78,473.00 732.28,471.20 733.58,471.20 734.08,473.40 734.08,481.90 734.08,490.20 733.58,492.50 732.28,492.50 731.78,490.60" fill="#d8efe2"/>
<polygon points="725.38,481.90 726.38,479.70 727.18,477.70 733.98,477.70 734.78,479.70 735.78,481.90 734.78,484.10 733.98,486.30 727.18,486.30 726.38,484.10" fill="#d8efe2"/>
<rect x="736.64" y="469.90" width="29.03" height="41.20" fill="#1e2a24" rx="2.5"/>
<rect x="737.14" y="470.40" width="28.03" height="40.20" fill="#386a4b" rx="2.2"/>
<rect x="737.24" y="493.00" width="27.83" height="0.90" fill="#2d563d"/>
<rect x="737.34" y="481.50" width="27.63" height="0.80" fill="#d8efe2"/>
<polygon points="738.40,481.90 738.60,473.00 739.10,471.20 740.40,471.20 740.90,473.40 740.90,481.90 740.90,490.20 740.40,492.50 739.10,492.50 738.60,490.60" fill="#d8efe2"/>
<polygon points="742.90,481.90 743.10,473.00 743.60,471.20 744.90,471.20 745.40,473.40 745.40,481.90 745.40,490.20 744.90,492.50 743.60,492.50 743.10,490.60" fill="#d8efe2"/>
<polygon points="736.70,481.90 737.70,479.70 738.50,477.70 745.30,477.70 746.10,479.70 747.10,481.90 746.10,484.10 745.30,486.30 738.50,486.30 737.70,484.10" fill="#d8efe2"/>
<polygon points="756.91,481.90 757.11,473.00 757.61,471.20 758.91,471.20 759.41,473.40 759.41,481.90 759.41,490.20 758.91,492.50 757.61,492.50 757.11,490.60" fill="#d8efe2"/>
<polygon points="761.41,481.90 761.61,473.00 762.11,471.20 763.41,471.20 763.91,473.40 763.91,481.90 763.91,490.20 763.41,492.50 762.11,492.50 761.61,490.60" fill="#d8efe2"/>
<polygon points="755.21,481.90 756.21,479.70 757.01,477.70 763.81,477.70 764.61,479.70 765.61,481.90 764.61,484.10 763.81,486.30 757.01,486.30 756.21,484.10" fill="#d8efe2"/>
<rect x="766.47" y="469.90" width="29.03" height="41.20" fill="#1e2a24" rx="2.5"/>
<rect x="766.97" y="470.40" width="28.03" height="40.20" fill="#386a4b" rx="2.2"/>
<rect x="767.07" y="493.00" width="27.83" height="0.90" fill="#2d563d"/>
<rect x="767.17" y="481.50" width="27.63" height="0.80" fill="#d8efe2"/>
<polygon points="768.23,481.90 768.43,473.00 768.93,471.20 770.23,471.20 770.73,473.40 770.73,481.90 770.73,490.20 770.23,492.50 768.93,492.50 768.43,490.60" fill="#d8efe2"/>
<polygon points="772.73,481.90 772.93,473.00 773.43,471.20 774.73,471.20 775.23,473.40 775.23,481.90 775.23,490.20 774.73,492.50 773.43,492.50 772.93,490.60" fill="#d8efe2"/>
<polygon points="766.53,481.90 767.53,479.70 768.33,477.70 775.13,477.70 775.93,479.70 776.93,481.90 775.93,484.10 775.13,486.30 768.33,486.30 767.53,484.10" fill="#d8efe2"/>
<polygon points="786.74,481.90 786.94,473.00 787.44,471.20 788.74,471.20 789.24,473.40 789.24,481.90 789.24,490.20 788.74,492.50 787.44,492.50 786.94,490.60" fill="#d8efe2"/>
<polygon points="791.24,481.90 791.44,473.00 791.94,471.20 793.24,471.20 793.74,473.40 793.74,481.90 793.74,490.20 793.24,492.50 791.94,492.50 791.44,490.60" fill="#d8efe2"/>
<polygon points="785.04,481.90 786.04,479.70 786.84,477.70 793.64,477.70 794.44,479.70 795.44,481.90 794.44,484.10 793.64,486.30 786.84,486.30 786.04,484.10" fill="#d8efe2"/>
<rect x="796.30" y="469.90" width="29.03" height="41.20" fill="#1e2a24" rx="2.5"/>
<rect x="796.80" y="470.40" width="28.03" height="40.20" fill="#386a4b" rx="2.2"/>
<rect x="796.90" y="493.00" width="27.83" height="0.90" fill="#2d563d"/>
<rect x="797.00" y="481.50" width="27.63" height="0.80" fill="#d8efe2"/>
<polygon points="798.06,481.90 798.26,473.00 798.76,471.20 800.06,471.20 800.56,473.40 800.56,481.90 800.56,490.20 800.06,492.50 798.76,492.50 798.26,490.60" fill="#d8efe2"/>
<polygon points="802.56,481.90 802.76,473.00 803.26,471.20 804.56,471.20 805.06,473.40 805.06,481.90 805.06,490.20 804.56,492.50 803.26,492.50 802.76,490.60" fill="#d8efe2"/>
<polygon points="796.36,481.90 797.36,479.70 798.16,477.70 804.96,477.70 805.76,479.70 806.76,481.90 805.76,484.10 804.96,486.30 798.16,486.30 797.36,484.10" fill="#d8efe2"/>
<polygon points="816.57,481.90 816.77,473.00 817.27,471.20 818.57,471.20 819.07,473.40 819.07,481.90 819.07,490.20 818.57,492.50 817.27,492.50 816.77,490.60" fill="#d8efe2"/>
<polygon points="821.07,481.90 821.27,473.00 821.77,471.20 823.07,471.20 823.57,473.40 823.57,481.90 823.57,490.20 823.07,492.50 821.77,492.50 821.27,490.60" fill="#d8efe2"/>
<polygon points="814.87,481.90 815.87,479.70 816.67,477.70 823.47,477.70 824.27,479.70 825.27,481.90 824.27,484.10 823.47,486.30 816.67,486.30 815.87,484.10" fill="#d8efe2"/>
<rect x="826.13" y="469.90" width="29.03" height="41.20" fill="#1e2a24" rx="2.5"/>
<rect x="826.63" y="470.40" width="28.03" height="40.20" fill="#386a4b" rx="2.2"/>
<rect x="826.73" y="493.00" width="27.83" height="0.90" fill="#2d563d"/>
<rect x="826.83" y="481.50" width="27.63" height="0.80" fill="#d8efe2"/>
<polygon points="827.89,481.90 828.09,473.00 828.59,471.20 829.89,471.20 830.39,473.40 830.39,481.90 830.39,490.20 829.89,492.50 828.59,492.50 828.09,490.60" fill="#d8efe2"/>
<polygon points="832.39,481.90 832.59,473.00 833.09,471.20 834.39,471.20 834.89,473.40 834.89,481.90 834.89,490.20 834.39,492.50 833.09,492.50 832.59,490.60" fill="#d8efe2"/>
<polygon points="826.19,481.90 827.19,479.70 827.99,477.70 834.79,477.70 835.59,479.70 836.59,481.90 835.59,484.10 834.79,486.30 827.99,486.30 827.19,484.10" fill="#d8efe2"/>
<polygon points="846.40,481.90 846.60,473.00 847.10,471.20 848.40,471.20 848.90,473.40 848.90,481.90 848.90,490.20 848.40,492.50 847.10,492.50 846.60,490.60" fill="#d8efe2"/>
<polygon points="850.90,481.90 851.10,473.00 851.60,471.20 852.90,471.20 853.40,473.40 853.40,481.90 853.40,490.20 852.90,492.50 851.60,492.50 851.10,490.60" fill="#d8efe2"/>
<polygon points="844.70,481.90 845.70,479.70 846.50,477.70 853.30,477.70 854.10,479.70 855.10,481.90 854.10,484.10 853.30,486.30 846.50,486.30 845.70,484.10" fill="#d8efe2"/>
<rect x="855.96" y="469.90" width="29.03" height="41.20" fill="#1e2a24" rx="2.5"/>
<rect x="856.46" y="470.40" width="28.03" height="40.20" fill="#386a4b" rx="2.2"/>
<rect x="856.56" y="493.00" width="27.83" height="0.90" fill="#2d563d"/>
<rect x="856.66" y="481.50" width="27.63" height="0.80" fill="#d8efe2"/>
<polygon points="857.72,481.90 857.92,473.00 858.42,471.20 859.72,471.20 860.22,473.40 860.22,481.90 860.22,490.20 859.72,492.50 858.42,492.50 857.92,490.60" fill="#d8efe2"/>
<polygon points="862.22,481.90 862.42,473.00 862.92,471.20 864.22,471.20 864.72,473.40 864.72,481.90 864.72,490.20 864.22,492.50 862.92,492.50 862.42,490.60" fill="#d8efe2"/>
<polygon points="856.02,481.90 857.02,479.70 857.82,477.70 864.62,477.70 865.42,479.70 866.42,481.90 865.42,484.10 864.62,486.30 857.82,486.30 857.02,484.10" fill="#d8efe2"/>
<polygon points="876.23,481.90 876.43,473.00 876.93,471.20 878.23,471.20 878.73,473.40 878.73,481.90 878.73,490.20 878.23,492.50 876.93,492.50 876.43,490.60" fill="#d8efe2"/>
<polygon points="880.73,481.90 880.93,473.00 881.43,471.20 882.73,471.20 883.23,473.40 883.23,481.90 883.23,490.20 882.73,492.50 881.43,492.50 880.93,490.60" fill="#d8efe2"/>
<polygon points="874.53,481.90 875.53,479.70 876.33,477.70 883.13,477.70 883.93,479.70 884.93,481.90 883.93,484.10 883.13,486.30 876.33,486.30 875.53,484.10" fill="#d8efe2"/>
<rect x="885.79" y="469.90" width="26.71" height="41.20" fill="#1e2a24" rx="2.5"/>
<rect x="886.29" y="470.40" width="25.71" height="40.20" fill="#386a4b" rx="2.2"/>
<rect x="886.39" y="493.00" width="25.51" height="0.90" fill="#2d563d"/>
<rect x="886.49" y="481.50" width="25.31" height="0.80" fill="#d8efe2"/>
<polygon points="887.17,481.90 887.37,473.00 887.87,471.20 889.17,471.20 889.67,473.40 889.67,481.90 889.67,490.20 889.17,492.50 887.87,492.50 887.37,490.60" fill="#d8efe2"/>
<polygon points="891.67,481.90 891.87,473.00 892.37,471.20 893.67,471.20 894.17,473.40 894.17,481.90 894.17,490.20 893.67,492.50 892.37,492.50 891.87,490.60" fill="#d8efe2"/>
<polygon points="885.47,481.90 886.47,479.70 887.27,477.70 894.07,477.70 894.87,479.70 895.87,481.90 894.87,484.10 894.07,486.30 887.27,486.30 886.47,484.10" fill="#d8efe2"/>
<polygon points="904.12,481.90 904.32,473.00 904.82,471.20 906.12,471.20 906.62,473.40 906.62,481.90 906.62,490.20 906.12,492.50 904.82,492.50 904.32,490.60" fill="#d8efe2"/>
<polygon points="908.62,481.90 908.82,473.00 909.32,471.20 910.62,471.20 911.12,473.40 911.12,481.90 911.12,490.20 910.62,492.50 909.32,492.50 908.82,490.60" fill="#d8efe2"/>
<polygon points="902.42,481.90 903.42,479.70 904.22,477.70 911.02,477.70 911.82,479.70 912.82,481.90 911.82,484.10 911.02,486.30 904.22,486.30 903.42,484.10" fill="#d8efe2"/>
<rect x="915.00" y="469.90" width="7.10" height="41.20" fill="#1e2a24" rx="2.5"/>
<rect x="915.50" y="470.40" width="6.10" height="40.20" fill="#439266" rx="2.2"/>
<rect x="936.40" y="469.90" width="248.80" height="41.20" fill="#1e2a24" rx="2.5"/>
<rect x="936.90" y="470.40" width="247.80" height="40.20" fill="#386a4b" rx="2.2"/>
<rect x="937.00" y="493.00" width="247.60" height="0.90" fill="#2d563d"/>
<polygon points="937.1,475.4 937.9,475.8 938.6,475.6 939.4,475.9 940.1,475.5 940.9,475.4 941.6,475.6 942.4,475.4 943.1,475.7 943.9,475.5 944.6,475.5 945.4,475.6 946.2,475.6 946.9,475.4 947.7,475.3 948.4,475.6 949.2,475.5 949.9,475.9 950.7,475.5 951.4,475.5 952.2,475.3 952.9,475.4 953.7,475.8 954.4,475.7 955.2,475.5 956.0,475.9 956.7,475.6 957.5,475.8 958.2,475.9 959.0,475.9 959.7,475.4 960.5,475.9 961.2,475.8 962.0,475.7 962.7,475.4 963.5,475.9 964.3,475.6 965.0,475.6 965.8,475.4 966.5,475.4 967.3,475.4 968.0,475.8 968.8,475.7 969.5,475.7 970.3,475.4 971.0,475.3 971.8,475.8 972.6,475.8 973.3,475.8 974.1,475.8 974.8,475.6 975.6,475.6 976.3,475.8 977.1,475.9 977.8,475.7 978.6,475.7 979.3,475.6 980.1,475.3 980.8,475.5 981.6,475.6 982.4,475.5 983.1,475.5 983.9,475.9 984.6,475.3 985.4,475.4 986.1,475.4 986.9,475.4 987.6,475.7 988.4,475.7 989.1,475.9 989.9,475.5 990.7,475.9 991.4,475.9 992.2,475.8 992.9,475.8 993.7,475.7 994.4,475.9 995.2,475.9 995.9,475.8 996.7,471.3 997.4,471.3 998.2,471.3 999.0,471.3 999.7,471.3 1000.5,474.7 1001.2,471.3 1002.0,471.3 1002.7,471.3 1003.5,471.3 1004.2,474.2 1005.0,471.3 1005.7,471.3 1006.5,474.9 1007.2,474.2 1008.0,474.5 1008.8,474.9 1009.5,471.3 1010.3,471.3 1011.0,471.3 1011.8,474.9 1012.5,471.3 1013.3,471.3 1014.0,474.8 1014.8,471.3 1015.5,474.5 1016.3,474.9 1017.1,471.3 1017.8,475.1 1018.6,471.3 1019.3,471.3 1020.1,474.9 1020.8,471.3 1021.6,474.3 1022.3,475.0 1023.1,471.3 1023.8,475.0 1024.6,474.9 1025.3,474.8 1026.1,474.7 1026.9,471.3 1027.6,471.3 1028.4,474.5 1029.1,474.7 1029.9,475.0 1030.6,474.7 1031.4,474.8 1032.1,474.5 1032.9,474.2 1033.6,475.0 1034.4,475.1 1035.2,471.3 1035.9,471.3 1036.7,474.4 1037.4,474.6 1038.2,474.2 1038.9,474.8 1039.7,475.1 1040.4,471.3 1041.2,471.3 1041.9,474.8 1042.7,471.3 1043.5,471.3 1044.2,475.2 1045.0,471.3 1045.7,471.3 1046.5,475.0 1047.2,474.7 1048.0,471.3 1048.7,471.3 1049.5,475.2 1050.2,474.8 1051.0,474.3 1051.7,471.3 1052.5,471.3 1053.3,471.3 1054.0,471.6 1054.8,471.9 1055.5,471.8 1056.3,471.7 1057.0,471.6 1057.8,471.9 1058.5,471.6 1059.3,472.0 1060.0,472.0 1060.8,471.8 1061.6,471.7 1062.3,471.9 1063.1,471.7 1063.8,471.9 1064.6,471.7 1065.3,471.5 1066.1,471.5 1066.8,471.6 1067.6,471.5 1068.3,472.0 1069.1,471.6 1069.9,471.6 1070.6,471.5 1071.4,471.6 1072.1,472.1 1072.9,471.6 1073.6,471.6 1074.4,471.4 1075.1,471.7 1075.9,471.6 1076.6,471.4 1077.4,471.5 1078.1,471.5 1078.9,471.6 1079.7,471.8 1080.4,471.9 1081.2,471.9 1081.9,471.7 1082.7,472.1 1083.4,471.9 1084.2,471.5 1084.9,472.0 1085.7,471.9 1086.4,471.5 1087.2,471.8 1088.0,472.0 1088.7,471.8 1089.5,471.9 1090.2,471.6 1091.0,471.5 1091.7,471.5 1092.5,471.8 1093.2,471.8 1094.0,471.8 1094.7,472.0 1095.5,471.8 1096.3,471.9 1097.0,471.9 1097.8,471.5 1098.5,471.9 1099.3,471.9 1100.0,471.8 1100.8,471.7 1101.5,471.9 1102.3,471.9 1103.0,471.5 1103.8,471.9 1104.5,471.8 1105.3,471.5 1106.1,471.9 1106.8,471.9 1107.6,471.8 1108.3,471.7 1109.1,472.0 1109.8,472.1 1110.6,471.4 1111.3,472.0 1112.1,471.7 1112.8,471.6 1113.6,471.6 1114.4,471.5 1115.1,472.1 1115.9,472.0 1116.6,472.0 1117.4,471.6 1118.1,471.8 1118.9,471.4 1119.6,471.7 1120.4,471.5 1121.1,471.6 1121.9,471.4 1122.7,472.0 1123.4,472.0 1124.2,472.0 1124.9,471.7 1125.7,472.1 1126.4,471.7 1127.2,471.6 1127.9,471.5 1128.7,471.6 1129.4,471.6 1130.2,471.8 1130.9,471.7 1131.7,472.0 1132.5,471.8 1133.2,472.1 1134.0,471.9 1134.7,471.9 1135.5,471.9 1136.2,471.6 1137.0,472.0 1137.7,471.7 1138.5,471.6 1139.2,472.1 1140.0,471.9 1140.8,471.8 1141.5,471.5 1142.3,471.6 1143.0,471.8 1143.8,472.0 1144.5,471.7 1145.3,471.6 1146.0,471.7 1146.8,471.6 1147.5,471.8 1148.3,471.9 1149.0,471.7 1149.8,471.7 1150.6,471.5 1151.3,472.1 1152.1,471.8 1152.8,472.0 1153.6,471.6 1154.3,471.7 1155.1,472.1 1155.8,472.0 1156.6,471.5 1157.3,472.0 1158.1,471.8 1158.9,471.7 1159.6,472.0 1160.4,472.1 1161.1,471.5 1161.9,471.8 1162.6,472.1 1163.4,471.9 1164.1,471.7 1164.9,471.5 1165.6,471.6 1166.4,471.9 1167.2,471.5 1167.9,471.8 1168.7,471.5 1169.4,471.8 1170.2,471.7 1170.9,471.8 1171.7,471.6 1172.4,472.1 1173.2,472.0 1173.9,471.6 1174.7,472.1 1175.4,471.6 1176.2,471.8 1177.0,471.7 1177.7,471.9 1178.5,471.6 1179.2,471.7 1180.0,471.9 1180.7,472.0 1181.5,471.8 1182.2,472.1 1183.0,472.0 1183.7,471.6 1184.5,471.6 1184.5,490.7 1183.7,491.0 1183.0,491.7 1182.2,491.6 1181.5,491.7 1180.7,491.0 1180.0,491.7 1179.2,491.4 1178.5,492.0 1177.7,490.8 1177.0,491.7 1176.2,491.1 1175.4,492.0 1174.7,491.1 1173.9,491.7 1173.2,491.4 1172.4,491.1 1171.7,491.4 1170.9,492.0 1170.2,491.7 1169.4,491.2 1168.7,491.9 1167.9,491.1 1167.2,491.7 1166.4,491.6 1165.6,490.8 1164.9,491.0 1164.1,491.3 1163.4,491.0 1162.6,491.0 1161.9,491.1 1161.1,491.8 1160.4,491.7 1159.6,490.9 1158.9,490.8 1158.1,492.0 1157.3,491.4 1156.6,491.1 1155.8,492.0 1155.1,490.9 1154.3,491.4 1153.6,491.7 1152.8,491.7 1152.1,491.2 1151.3,491.8 1150.6,491.6 1149.8,491.6 1149.0,491.3 1148.3,491.5 1147.5,490.8 1146.8,491.7 1146.0,491.9 1145.3,491.9 1144.5,491.8 1143.8,490.7 1143.0,491.7 1142.3,490.8 1141.5,491.8 1140.8,491.5 1140.0,491.6 1139.2,491.7 1138.5,491.0 1137.7,491.5 1137.0,491.8 1136.2,491.9 1135.5,491.1 1134.7,491.4 1134.0,491.9 1133.2,491.3 1132.5,490.8 1131.7,490.9 1130.9,490.7 1130.2,491.7 1129.4,491.6 1128.7,490.8 1127.9,490.9 1127.2,491.9 1126.4,491.4 1125.7,491.2 1124.9,491.5 1124.2,491.6 1123.4,491.1 1122.7,491.8 1121.9,491.0 1121.1,490.9 1120.4,491.5 1119.6,491.6 1118.9,491.4 1118.1,492.0 1117.4,490.8 1116.6,491.1 1115.9,491.3 1115.1,491.8 1114.4,491.3 1113.6,491.2 1112.8,490.8 1112.1,491.6 1111.3,490.7 1110.6,491.4 1109.8,490.8 1109.1,491.7 1108.3,491.8 1107.6,491.4 1106.8,491.6 1106.1,491.1 1105.3,491.6 1104.5,492.0 1103.8,491.6 1103.0,491.7 1102.3,491.9 1101.5,491.2 1100.8,491.1 1100.0,491.5 1099.3,490.7 1098.5,491.7 1097.8,491.6 1097.0,491.7 1096.3,491.9 1095.5,491.3 1094.7,491.0 1094.0,492.0 1093.2,491.1 1092.5,491.2 1091.7,490.9 1091.0,491.5 1090.2,492.0 1089.5,491.1 1088.7,490.8 1088.0,490.9 1087.2,490.9 1086.4,491.3 1085.7,490.9 1084.9,491.2 1084.2,490.9 1083.4,491.2 1082.7,491.8 1081.9,491.6 1081.2,490.8 1080.4,491.1 1079.7,491.3 1078.9,491.7 1078.1,492.0 1077.4,491.5 1076.6,491.7 1075.9,491.3 1075.1,491.3 1074.4,491.5 1073.6,491.5 1072.9,490.7 1072.1,491.3 1071.4,490.7 1070.6,491.4 1069.9,491.4 1069.1,491.7 1068.3,491.1 1067.6,490.9 1066.8,491.8 1066.1,491.0 1065.3,491.8 1064.6,491.5 1063.8,491.2 1063.1,490.9 1062.3,490.7 1061.6,491.3 1060.8,490.9 1060.0,491.4 1059.3,491.9 1058.5,491.4 1057.8,491.3 1057.0,492.0 1056.3,492.0 1055.5,491.8 1054.8,491.6 1054.0,491.6 1053.3,492.9 1052.5,492.9 1051.7,489.2 1051.0,492.9 1050.2,492.9 1049.5,489.0 1048.7,489.6 1048.0,489.4 1047.2,489.0 1046.5,492.9 1045.7,489.9 1045.0,489.2 1044.2,492.9 1043.5,489.8 1042.7,489.5 1041.9,492.9 1041.2,488.9 1040.4,492.9 1039.7,489.5 1038.9,490.0 1038.2,492.9 1037.4,492.9 1036.7,489.1 1035.9,492.9 1035.2,492.9 1034.4,492.9 1033.6,490.0 1032.9,489.9 1032.1,489.5 1031.4,489.5 1030.6,489.8 1029.9,492.9 1029.1,489.0 1028.4,489.3 1027.6,489.1 1026.9,492.9 1026.1,492.9 1025.3,489.5 1024.6,489.6 1023.8,489.1 1023.1,492.9 1022.3,492.9 1021.6,489.9 1020.8,489.6 1020.1,489.1 1019.3,490.0 1018.6,489.8 1017.8,492.9 1017.1,490.0 1016.3,490.0 1015.5,489.1 1014.8,489.9 1014.0,489.8 1013.3,489.9 1012.5,492.9 1011.8,492.9 1011.0,490.0 1010.3,490.0 1009.5,492.9 1008.8,492.9 1008.0,492.9 1007.2,489.8 1006.5,492.9 1005.7,489.5 1005.0,492.9 1004.2,489.7 1003.5,488.9 1002.7,489.5 1002.0,489.1 1001.2,492.9 1000.5,492.9 999.7,490.0 999.0,492.9 998.2,492.9 997.4,489.6 996.7,492.9 995.9,488.4 995.2,488.3 994.4,488.3 993.7,488.5 992.9,488.4 992.2,488.4 991.4,488.3 990.7,488.3 989.9,488.7 989.1,488.3 988.4,488.5 987.6,488.5 986.9,488.8 986.1,488.8 985.4,488.8 984.6,488.9 983.9,488.3 983.1,488.7 982.4,488.7 981.6,488.6 980.8,488.7 980.1,488.9 979.3,488.6 978.6,488.5 977.8,488.5 977.1,488.3 976.3,488.4 975.6,488.6 974.8,488.6 974.1,488.4 973.3,488.4 972.6,488.4 971.8,488.4 971.0,488.9 970.3,488.8 969.5,488.5 968.8,488.5 968.0,488.4 967.3,488.8 966.5,488.8 965.8,488.8 965.0,488.6 964.3,488.6 963.5,488.3 962.7,488.8 962.0,488.5 961.2,488.4 960.5,488.3 959.7,488.8 959.0,488.3 958.2,488.3 957.5,488.4 956.7,488.6 956.0,488.3 955.2,488.7 954.4,488.5 953.7,488.4 952.9,488.8 952.2,488.9 951.4,488.7 950.7,488.7 949.9,488.3 949.2,488.7 948.4,488.6 947.7,488.9 946.9,488.8 946.2,488.6 945.4,488.6 944.6,488.7 943.9,488.7 943.1,488.5 942.4,488.8 941.6,488.6 940.9,488.8 940.1,488.7 939.4,488.3 938.6,488.6 937.9,488.4 937.1,488.8" fill="#d8efe2"/>
<rect x="937.10" y="481.80" width="247.40" height="0.60" fill="#8fb09d"/>
<path d="M937.2 470.6 H980 L937.2 493.2 Z" fill="#1f4630" stroke="none" stroke-width="1" opacity="0.78"/>
<path d="M1184.6 470.6 H1100 L1184.6 492.6 Z" fill="#46504a" stroke="none" stroke-width="1" opacity="0.72"/>
<path d="M1168.6 503 C1170.4 497.8 1172 499.4 1174 503 S1177.4 508 1179.4 503.6" fill="none" stroke="#1c3024" stroke-width="1.4" />
<rect x="199.70" y="512.40" width="28.90" height="41.30" fill="#1e2a24" rx="2.5"/>
<rect x="200.20" y="512.90" width="27.90" height="40.30" fill="#386a4b" rx="2.2"/>
<rect x="200.30" y="535.50" width="27.70" height="0.90" fill="#2d563d"/>
<polygon points="200.40,521.39 201.12,520.97 201.85,520.88 202.57,520.95 203.29,521.06 204.02,521.23 204.74,519.92 205.47,519.96 206.19,519.34 206.91,520.25 207.64,518.40 208.36,517.77 209.08,517.31 209.81,517.60 210.53,518.42 211.26,518.08 211.98,517.41 212.70,517.91 213.43,517.57 214.15,515.78 214.87,515.34 215.60,517.53 216.32,517.13 217.04,515.40 217.77,517.37 218.49,516.97 219.22,517.35 219.94,517.67 220.66,517.76 221.39,517.90 222.11,518.85 222.83,519.37 223.56,520.65 224.28,519.72 225.01,521.14 225.73,520.39 226.45,520.78 227.18,521.48 227.90,521.59 227.90,527.01 227.18,527.12 226.45,527.82 225.73,528.21 225.01,527.46 224.28,528.88 223.56,527.95 222.83,529.23 222.11,529.75 221.39,530.70 220.66,530.84 219.94,530.93 219.22,531.25 218.49,531.63 217.77,531.23 217.04,533.20 216.32,531.47 215.60,531.07 214.87,533.26 214.15,532.82 213.43,531.03 212.70,530.69 211.98,531.19 211.26,530.52 210.53,530.18 209.81,531.00 209.08,531.29 208.36,530.83 207.64,530.20 206.91,528.35 206.19,529.26 205.47,528.64 204.74,528.68 204.02,527.37 203.29,527.54 202.57,527.65 201.85,527.72 201.12,527.63 200.40,527.21" fill="#d8efe2" />
<rect x="200.40" y="523.95" width="27.50" height="0.70" fill="#c2d7cb"/>
<rect x="260.00" y="512.40" width="28.30" height="41.30" fill="#1e2a24" rx="2.5"/>
<rect x="260.50" y="512.90" width="27.30" height="40.30" fill="#386a4b" rx="2.2"/>
<rect x="260.60" y="535.50" width="27.10" height="0.90" fill="#2d563d"/>
<rect x="260.70" y="524.30" width="26.90" height="0.80" fill="#b9dcc8"/>
<rect x="260.70" y="531.10" width="26.90" height="0.60" fill="#5d8f72"/>
<rect x="289.20" y="512.40" width="28.90" height="41.30" fill="#1e2a24" rx="2.5"/>
<rect x="289.70" y="512.90" width="27.90" height="40.30" fill="#386a4b" rx="2.2"/>
<rect x="289.80" y="535.50" width="27.70" height="0.90" fill="#2d563d"/>
<polygon points="289.90,521.33 290.62,520.83 291.35,521.16 292.07,520.90 292.79,521.37 293.52,520.26 294.24,520.22 294.97,520.70 295.69,519.05 296.41,519.29 297.14,519.63 297.86,519.19 298.58,517.27 299.31,516.79 300.03,516.40 300.76,518.17 301.48,516.15 302.20,517.22 302.93,517.48 303.65,515.80 304.37,515.59 305.10,517.59 305.82,516.77 306.54,516.02 307.27,517.50 307.99,516.82 308.72,517.12 309.44,516.94 310.16,518.97 310.89,519.65 311.61,519.48 312.33,520.35 313.06,519.22 313.78,519.88 314.51,520.49 315.23,521.33 315.95,521.49 316.68,520.99 317.40,520.98 317.40,527.62 316.68,527.61 315.95,527.11 315.23,527.27 314.51,528.11 313.78,528.72 313.06,529.38 312.33,528.25 311.61,529.12 310.89,528.95 310.16,529.63 309.44,531.66 308.72,531.48 307.99,531.78 307.27,531.10 306.54,532.58 305.82,531.83 305.10,531.01 304.37,533.01 303.65,532.80 302.93,531.12 302.20,531.38 301.48,532.45 300.76,530.43 300.03,532.20 299.31,531.81 298.58,531.33 297.86,529.41 297.14,528.97 296.41,529.31 295.69,529.55 294.97,527.90 294.24,528.38 293.52,528.34 292.79,527.23 292.07,527.70 291.35,527.44 290.62,527.77 289.90,527.27" fill="#d8efe2" />
<rect x="289.90" y="523.95" width="27.50" height="0.70" fill="#c2d7cb"/>
<rect x="327.70" y="512.40" width="21.60" height="41.30" fill="#1e2a24" rx="2.5"/>
<rect x="328.20" y="512.90" width="20.60" height="40.30" fill="#386a4b" rx="2.2"/>
<rect x="328.30" y="535.50" width="20.40" height="0.90" fill="#2d563d"/>
<rect x="328.40" y="524.30" width="20.20" height="0.80" fill="#b9dcc8"/>
<rect x="328.40" y="531.10" width="20.20" height="0.60" fill="#5d8f72"/>
<rect x="349.20" y="512.40" width="28.90" height="41.30" fill="#1e2a24" rx="2.5"/>
<rect x="349.70" y="512.90" width="27.90" height="40.30" fill="#386a4b" rx="2.2"/>
<rect x="349.80" y="535.50" width="27.70" height="0.90" fill="#2d563d"/>
<rect x="349.90" y="524.30" width="27.50" height="0.80" fill="#b9dcc8"/>
<rect x="349.90" y="531.10" width="27.50" height="0.60" fill="#5d8f72"/>
<rect x="407.90" y="512.40" width="27.40" height="41.30" fill="#1e2a24" rx="2.5"/>
<rect x="408.40" y="512.90" width="26.40" height="40.30" fill="#386a4b" rx="2.2"/>
<rect x="408.50" y="535.50" width="26.20" height="0.90" fill="#2d563d"/>
<polygon points="408.60,523.49 409.32,523.06 410.04,522.28 410.77,519.57 411.49,519.14 412.21,519.13 412.93,520.58 413.66,521.71 414.38,522.07 415.10,521.92 415.82,521.86 416.54,521.87 417.27,522.26 417.99,521.83 418.71,522.10 419.43,522.67 420.16,522.58 420.88,522.72 421.60,522.93 422.32,523.31 423.04,523.38 423.77,523.67 424.49,523.72 425.21,523.79 425.93,523.68 426.66,523.67 427.38,523.69 428.10,523.77 428.82,523.82 429.54,523.77 430.27,523.74 430.99,523.77 431.71,523.81 432.43,523.82 433.16,523.83 433.88,523.85 434.60,523.82 434.60,524.78 433.88,524.75 433.16,524.77 432.43,524.78 431.71,524.79 430.99,524.83 430.27,524.86 429.54,524.83 428.82,524.78 428.10,524.83 427.38,524.91 426.66,524.93 425.93,524.92 425.21,524.81 424.49,524.88 423.77,524.93 423.04,525.22 422.32,525.29 421.60,525.67 420.88,525.88 420.16,526.02 419.43,525.93 418.71,526.50 417.99,526.77 417.27,526.34 416.54,526.73 415.82,526.74 415.10,526.68 414.38,526.53 413.66,526.89 412.93,528.02 412.21,529.47 411.49,529.46 410.77,529.03 410.04,526.32 409.32,525.54 408.60,525.11" fill="#d8efe2" />
<rect x="408.60" y="523.95" width="26.00" height="0.70" fill="#c2d7cb"/>
<rect x="408.60" y="530.70" width="26.00" height="0.60" fill="#5d8f72"/>
<rect x="467.60" y="512.40" width="29.70" height="41.30" fill="#1e2a24" rx="2.5"/>
<rect x="468.10" y="512.90" width="28.70" height="40.30" fill="#386a4b" rx="2.2"/>
<rect x="468.20" y="535.50" width="28.50" height="0.90" fill="#2d563d"/>
<polygon points="468.30,519.42 469.03,519.85 469.75,515.23 470.48,515.53 471.20,515.32 471.93,515.73 472.65,515.12 473.38,515.17 474.11,515.17 474.83,515.07 475.56,515.89 476.28,515.55 477.01,515.26 477.73,515.34 478.46,516.02 479.18,515.47 479.91,515.16 480.64,515.81 481.36,515.63 482.09,516.01 482.81,515.01 483.54,515.43 484.26,515.82 484.99,515.84 485.72,515.93 486.44,514.94 487.17,515.23 487.89,515.03 488.62,515.11 489.34,515.99 490.07,515.55 490.79,515.94 491.52,515.32 492.25,515.87 492.97,515.40 493.70,515.19 494.42,515.77 495.15,515.96 495.87,519.41 496.60,519.70 496.60,528.90 495.87,529.19 495.15,532.64 494.42,532.83 493.70,533.41 492.97,533.20 492.25,532.73 491.52,533.28 490.79,532.66 490.07,533.05 489.34,532.61 488.62,533.49 487.89,533.57 487.17,533.37 486.44,533.66 485.72,532.67 484.99,532.76 484.26,532.78 483.54,533.17 482.81,533.59 482.09,532.59 481.36,532.97 480.64,532.79 479.91,533.44 479.18,533.13 478.46,532.58 477.73,533.26 477.01,533.34 476.28,533.05 475.56,532.71 474.83,533.53 474.11,533.43 473.38,533.43 472.65,533.48 471.93,532.87 471.20,533.28 470.48,533.07 469.75,533.37 469.03,528.75 468.30,529.18" fill="#d8efe2" />
<rect x="468.30" y="523.95" width="28.30" height="0.70" fill="#c2d7cb"/>
<rect x="502.30" y="512.40" width="27.20" height="41.30" fill="#1e2a24" rx="2.5"/>
<rect x="502.80" y="512.90" width="26.20" height="40.30" fill="#386a4b" rx="2.2"/>
<rect x="502.90" y="535.50" width="26.00" height="0.90" fill="#2d563d"/>
<polygon points="503.00,523.54 503.74,522.92 504.47,521.71 505.21,519.32 505.95,517.83 506.69,518.34 507.42,520.51 508.16,521.75 508.90,521.79 509.63,521.65 510.37,521.85 511.11,522.14 511.85,521.82 512.58,522.06 513.32,522.18 514.06,522.77 514.79,522.84 515.53,522.83 516.27,523.06 517.01,523.34 517.74,523.51 518.48,523.63 519.22,523.57 519.95,523.64 520.69,523.78 521.43,523.74 522.17,523.73 522.90,523.74 523.64,523.87 524.38,523.75 525.11,523.80 525.85,523.76 526.59,523.77 527.33,523.85 528.06,523.88 528.80,523.76 528.80,524.84 528.06,524.72 527.33,524.75 526.59,524.83 525.85,524.84 525.11,524.80 524.38,524.85 523.64,524.73 522.90,524.86 522.17,524.87 521.43,524.86 520.69,524.82 519.95,524.96 519.22,525.03 518.48,524.97 517.74,525.09 517.01,525.26 516.27,525.54 515.53,525.77 514.79,525.76 514.06,525.83 513.32,526.42 512.58,526.54 511.85,526.78 511.11,526.46 510.37,526.75 509.63,526.95 508.90,526.81 508.16,526.85 507.42,528.09 506.69,530.26 505.95,530.77 505.21,529.28 504.47,526.89 503.74,525.68 503.00,525.06" fill="#d8efe2" />
<rect x="503.00" y="523.95" width="25.80" height="0.70" fill="#c2d7cb"/>
<rect x="503.00" y="530.70" width="25.80" height="0.60" fill="#5d8f72"/>
<rect x="557.00" y="512.40" width="19.30" height="41.30" fill="#1e2a24" rx="2.5"/>
<rect x="557.50" y="512.90" width="18.30" height="40.30" fill="#386a4b" rx="2.2"/>
<rect x="557.60" y="535.50" width="18.10" height="0.90" fill="#2d563d"/>
<polygon points="557.70,513.37 558.45,515.61 559.19,514.97 559.94,515.21 560.68,517.76 561.43,517.29 562.17,518.50 562.92,518.20 563.67,519.36 564.41,519.06 565.16,518.99 565.90,519.13 566.65,520.10 567.40,520.45 568.14,520.96 568.89,520.31 569.63,521.04 570.38,520.98 571.12,521.26 571.87,521.11 572.62,521.37 573.36,521.68 574.11,523.50 574.85,523.28 575.60,523.38 575.60,525.22 574.85,525.32 574.11,525.10 573.36,526.92 572.62,527.23 571.87,527.49 571.12,527.34 570.38,527.62 569.63,527.56 568.89,528.29 568.14,527.64 567.40,528.15 566.65,528.50 565.90,529.47 565.16,529.61 564.41,529.54 563.67,529.24 562.92,530.40 562.17,530.10 561.43,531.31 560.68,530.84 559.94,533.39 559.19,533.63 558.45,532.99 557.70,535.23" fill="#d8efe2" />
<rect x="557.70" y="523.95" width="17.90" height="0.70" fill="#c2d7cb"/>
<rect x="586.30" y="512.40" width="27.60" height="41.30" fill="#1e2a24" rx="2.5"/>
<rect x="586.80" y="512.90" width="26.60" height="40.30" fill="#386a4b" rx="2.2"/>
<rect x="586.90" y="535.50" width="26.40" height="0.90" fill="#2d563d"/>
<rect x="587.00" y="524.30" width="26.20" height="0.80" fill="#b9dcc8"/>
<rect x="587.00" y="531.10" width="26.20" height="0.60" fill="#5d8f72"/>
<rect x="634.80" y="512.40" width="11.40" height="41.30" fill="#1e2a24" rx="2.5"/>
<rect x="635.30" y="512.90" width="10.40" height="40.30" fill="#439266" rx="2.2"/>
<rect x="635.40" y="535.50" width="10.20" height="0.90" fill="#367753"/>
<rect x="635.50" y="524.30" width="10.00" height="0.80" fill="#b9dcc8"/>
<rect x="635.50" y="531.10" width="10.00" height="0.60" fill="#5d8f72"/>
<rect x="770.60" y="512.40" width="22.00" height="41.30" fill="#1e2a24" rx="2.5"/>
<rect x="771.10" y="512.90" width="21.00" height="40.30" fill="#386a4b" rx="2.2"/>
<rect x="771.20" y="535.50" width="20.80" height="0.90" fill="#2d563d"/>
<rect x="771.30" y="524.30" width="20.60" height="0.80" fill="#b9dcc8"/>
<rect x="773.30" y="523.60" width="2.60" height="2.20" fill="#d8efe2"/>
<rect x="778.50" y="523.60" width="2.60" height="2.20" fill="#d8efe2"/>
<rect x="783.70" y="523.60" width="2.60" height="2.20" fill="#d8efe2"/>
<rect x="771.30" y="531.10" width="20.60" height="0.60" fill="#5d8f72"/>
<rect x="793.10" y="512.40" width="27.70" height="41.30" fill="#1e2a24" rx="2.5"/>
<rect x="793.60" y="512.90" width="26.70" height="40.30" fill="#386a4b" rx="2.2"/>
<rect x="793.70" y="535.50" width="26.50" height="0.90" fill="#2d563d"/>
<rect x="793.80" y="524.30" width="26.30" height="0.80" fill="#b9dcc8"/>
<rect x="795.80" y="523.60" width="2.60" height="2.20" fill="#d8efe2"/>
<rect x="801.00" y="523.60" width="2.60" height="2.20" fill="#d8efe2"/>
<rect x="806.20" y="523.60" width="2.60" height="2.20" fill="#d8efe2"/>
<rect x="811.40" y="523.60" width="2.60" height="2.20" fill="#d8efe2"/>
<rect x="816.60" y="523.60" width="2.60" height="2.20" fill="#d8efe2"/>
<rect x="793.80" y="531.10" width="26.30" height="0.60" fill="#5d8f72"/>
<rect x="825.80" y="512.40" width="85.70" height="41.30" fill="#1e2a24" rx="2.5"/>
<rect x="826.30" y="512.90" width="84.70" height="40.30" fill="#439266" rx="2.2"/>
<rect x="826.40" y="535.50" width="84.50" height="0.90" fill="#367753"/>
<rect x="826.50" y="524.30" width="84.30" height="0.80" fill="#d8efe2"/>
<polygon points="828.00,524.40 829.25,522.10 830.50,523.50 831.75,523.90 833.00,524.40 833.00,525.00 831.75,525.50 830.50,525.90 829.25,527.30 828.00,525.00" fill="#d8efe2" />
<polygon points="837.40,524.40 838.65,522.10 839.90,523.50 841.15,523.90 842.40,524.40 842.40,525.00 841.15,525.50 839.90,525.90 838.65,527.30 837.40,525.00" fill="#d8efe2" />
<polygon points="846.80,524.40 848.05,522.10 849.30,523.50 850.55,523.90 851.80,524.40 851.80,525.00 850.55,525.50 849.30,525.90 848.05,527.30 846.80,525.00" fill="#d8efe2" />
<polygon points="856.20,524.40 857.45,522.10 858.70,523.50 859.95,523.90 861.20,524.40 861.20,525.00 859.95,525.50 858.70,525.90 857.45,527.30 856.20,525.00" fill="#d8efe2" />
<polygon points="865.60,524.40 866.85,522.10 868.10,523.50 869.35,523.90 870.60,524.40 870.60,525.00 869.35,525.50 868.10,525.90 866.85,527.30 865.60,525.00" fill="#d8efe2" />
<polygon points="875.00,524.40 876.25,522.10 877.50,523.50 878.75,523.90 880.00,524.40 880.00,525.00 878.75,525.50 877.50,525.90 876.25,527.30 875.00,525.00" fill="#d8efe2" />
<polygon points="884.40,524.40 885.65,522.10 886.90,523.50 888.15,523.90 889.40,524.40 889.40,525.00 888.15,525.50 886.90,525.90 885.65,527.30 884.40,525.00" fill="#d8efe2" />
<polygon points="893.80,524.40 895.05,522.10 896.30,523.50 897.55,523.90 898.80,524.40 898.80,525.00 897.55,525.50 896.30,525.90 895.05,527.30 893.80,525.00" fill="#d8efe2" />
<polygon points="903.20,524.40 904.45,522.10 905.70,523.50 906.95,523.90 908.20,524.40 908.20,525.00 906.95,525.50 905.70,525.90 904.45,527.30 903.20,525.00" fill="#d8efe2" />
<rect x="826.50" y="531.10" width="84.30" height="0.60" fill="#6fae8a"/>
<rect x="914.30" y="512.40" width="7.80" height="41.30" fill="#1e2a24" rx="2.5"/>
<rect x="914.80" y="512.90" width="6.80" height="40.30" fill="#386a4b" rx="2.2"/>
<rect x="914.90" y="535.50" width="6.60" height="0.90" fill="#2d563d"/>
<polygon points="915.80,516.37 916.76,516.77 917.72,514.86 918.68,514.69 919.64,516.71 920.60,516.79 920.60,531.81 919.64,531.89 918.68,533.91 917.72,533.74 916.76,531.83 915.80,532.23" fill="#d8efe2" />
<rect x="915.80" y="523.95" width="4.80" height="0.70" fill="#c2d7cb"/>
<rect x="974.00" y="512.40" width="7.30" height="41.30" fill="#1e2a24" rx="2.5"/>
<rect x="974.50" y="512.90" width="6.30" height="40.30" fill="#386a4b" rx="2.2"/>
<rect x="974.60" y="535.50" width="6.10" height="0.90" fill="#2d563d"/>
<polygon points="975.50,515.57 976.36,514.50 977.22,516.67 978.08,515.34 978.94,516.62 979.80,515.91 979.80,532.69 978.94,531.98 978.08,533.26 977.22,531.93 976.36,534.10 975.50,533.03" fill="#d8efe2" />
<rect x="975.50" y="523.95" width="4.30" height="0.70" fill="#c2d7cb"/>
<rect x="981.90" y="512.40" width="36.00" height="41.30" fill="#1e2a24" rx="2.5"/>
<rect x="982.40" y="512.90" width="35.00" height="40.30" fill="#439266" rx="2.2"/>
<rect x="982.50" y="535.50" width="34.80" height="0.90" fill="#367753"/>
<polygon points="982.60,514.79 983.32,513.49 984.04,515.07 984.76,514.04 985.48,514.62 986.20,515.71 986.93,515.84 987.65,514.71 988.37,514.96 989.09,515.48 989.81,515.86 990.53,515.77 991.25,515.45 991.97,515.83 992.69,516.82 993.41,517.24 994.13,515.92 994.85,516.93 995.58,517.38 996.30,516.35 997.02,517.74 997.74,516.74 998.46,517.60 999.18,517.64 999.90,517.86 1000.62,517.50 1001.34,517.77 1002.06,518.11 1002.78,517.99 1003.50,518.40 1004.23,518.21 1004.95,518.30 1005.67,517.85 1006.39,518.71 1007.11,518.63 1007.83,518.40 1008.55,519.13 1009.27,519.23 1009.99,518.92 1010.71,518.67 1011.43,519.09 1012.15,518.75 1012.88,518.85 1013.60,519.26 1014.32,518.96 1015.04,519.41 1015.76,519.54 1016.48,519.12 1017.20,519.80 1017.20,528.80 1016.48,529.48 1015.76,529.06 1015.04,529.19 1014.32,529.64 1013.60,529.34 1012.88,529.75 1012.15,529.85 1011.43,529.51 1010.71,529.93 1009.99,529.68 1009.27,529.37 1008.55,529.47 1007.83,530.20 1007.11,529.97 1006.39,529.89 1005.67,530.75 1004.95,530.30 1004.23,530.39 1003.50,530.20 1002.78,530.61 1002.06,530.49 1001.34,530.83 1000.62,531.10 999.90,530.74 999.18,530.96 998.46,531.00 997.74,531.86 997.02,530.86 996.30,532.25 995.58,531.22 994.85,531.67 994.13,532.68 993.41,531.36 992.69,531.78 991.97,532.77 991.25,533.15 990.53,532.83 989.81,532.74 989.09,533.12 988.37,533.64 987.65,533.89 986.93,532.76 986.20,532.89 985.48,533.98 984.76,534.56 984.04,533.53 983.32,535.11 982.60,533.81" fill="#d8efe2" />
<rect x="982.60" y="523.95" width="34.60" height="0.70" fill="#c2d7cb"/>
<rect x="1031.50" y="512.40" width="35.00" height="41.30" fill="#1e2a24" rx="2.5"/>
<rect x="1032.00" y="512.90" width="34.00" height="40.30" fill="#386a4b" rx="2.2"/>
<rect x="1032.10" y="535.50" width="33.80" height="0.90" fill="#2d563d"/>
<polygon points="1032.20,519.04 1032.93,519.57 1033.66,519.26 1034.39,518.50 1035.12,517.51 1035.85,518.26 1036.58,518.22 1037.31,519.47 1038.04,518.61 1038.77,520.02 1039.50,520.49 1040.23,520.37 1040.97,520.60 1041.70,519.98 1042.43,520.91 1043.16,520.38 1043.89,520.91 1044.62,520.86 1045.35,520.03 1046.08,520.72 1046.81,520.88 1047.54,519.92 1048.27,520.24 1049.00,520.69 1049.73,520.02 1050.46,520.84 1051.19,520.15 1051.92,520.75 1052.65,520.00 1053.38,520.40 1054.11,520.87 1054.84,520.07 1055.57,520.12 1056.30,520.36 1057.03,520.10 1057.77,519.67 1058.50,519.69 1059.23,519.45 1059.96,520.23 1060.69,519.66 1061.42,519.79 1062.15,518.62 1062.88,519.55 1063.61,518.70 1064.34,519.50 1065.07,519.88 1065.80,519.75 1065.80,528.85 1065.07,528.72 1064.34,529.10 1063.61,529.90 1062.88,529.05 1062.15,529.98 1061.42,528.81 1060.69,528.94 1059.96,528.37 1059.23,529.15 1058.50,528.91 1057.77,528.93 1057.03,528.50 1056.30,528.24 1055.57,528.48 1054.84,528.53 1054.11,527.73 1053.38,528.20 1052.65,528.60 1051.92,527.85 1051.19,528.45 1050.46,527.76 1049.73,528.58 1049.00,527.91 1048.27,528.36 1047.54,528.68 1046.81,527.72 1046.08,527.88 1045.35,528.57 1044.62,527.74 1043.89,527.69 1043.16,528.22 1042.43,527.69 1041.70,528.62 1040.97,528.00 1040.23,528.23 1039.50,528.11 1038.77,528.58 1038.04,529.99 1037.31,529.13 1036.58,530.38 1035.85,530.34 1035.12,531.09 1034.39,530.10 1033.66,529.34 1032.93,529.03 1032.20,529.56" fill="#d8efe2" />
<rect x="1032.20" y="523.95" width="33.60" height="0.70" fill="#c2d7cb"/>
<rect x="1078.70" y="512.40" width="29.90" height="41.30" fill="#1e2a24" rx="2.5"/>
<rect x="1079.20" y="512.90" width="28.90" height="40.30" fill="#386a4b" rx="2.2"/>
<rect x="1079.30" y="535.50" width="28.70" height="0.90" fill="#2d563d"/>
<polygon points="1079.40,521.78 1080.13,521.37 1080.86,521.28 1081.59,521.49 1082.32,520.41 1083.05,521.31 1083.78,520.62 1084.52,520.02 1085.25,520.33 1085.98,519.13 1086.71,520.05 1087.44,518.92 1088.17,518.08 1088.90,518.57 1089.63,517.46 1090.36,516.43 1091.09,517.55 1091.82,515.43 1092.55,517.33 1093.28,515.61 1094.02,516.64 1094.75,517.63 1095.48,516.59 1096.21,516.97 1096.94,516.26 1097.67,515.78 1098.40,516.25 1099.13,516.95 1099.86,518.41 1100.59,518.41 1101.32,518.97 1102.05,520.02 1102.78,519.08 1103.52,519.59 1104.25,520.51 1104.98,519.92 1105.71,520.16 1106.44,520.79 1107.17,520.68 1107.90,521.09 1107.90,527.51 1107.17,527.92 1106.44,527.81 1105.71,528.44 1104.98,528.68 1104.25,528.09 1103.52,529.01 1102.78,529.52 1102.05,528.58 1101.32,529.63 1100.59,530.19 1099.86,530.19 1099.13,531.65 1098.40,532.35 1097.67,532.82 1096.94,532.34 1096.21,531.63 1095.48,532.01 1094.75,530.97 1094.02,531.96 1093.28,532.99 1092.55,531.27 1091.82,533.17 1091.09,531.05 1090.36,532.17 1089.63,531.14 1088.90,530.03 1088.17,530.52 1087.44,529.68 1086.71,528.55 1085.98,529.47 1085.25,528.27 1084.52,528.58 1083.78,527.98 1083.05,527.29 1082.32,528.19 1081.59,527.11 1080.86,527.32 1080.13,527.23 1079.40,526.82" fill="#d8efe2" />
<rect x="1079.40" y="523.95" width="28.50" height="0.70" fill="#c2d7cb"/>
<rect x="1109.20" y="512.40" width="34.30" height="41.30" fill="#1e2a24" rx="2.5"/>
<rect x="1109.70" y="512.90" width="33.30" height="40.30" fill="#386a4b" rx="2.2"/>
<rect x="1109.80" y="535.50" width="33.10" height="0.90" fill="#2d563d"/>
<polygon points="1109.90,517.29 1110.63,518.10 1111.36,518.24 1112.09,517.70 1112.82,518.55 1113.56,518.43 1114.29,517.99 1115.02,519.40 1115.75,518.42 1116.48,518.39 1117.21,518.42 1117.94,519.34 1118.67,519.77 1119.40,519.73 1120.14,519.28 1120.87,519.18 1121.60,518.94 1122.33,519.87 1123.06,519.84 1123.79,519.64 1124.52,520.09 1125.25,519.91 1125.98,520.58 1126.72,520.40 1127.45,519.89 1128.18,520.72 1128.91,519.79 1129.64,520.41 1130.37,520.33 1131.10,520.20 1131.83,520.07 1132.56,520.89 1133.30,520.13 1134.03,520.75 1134.76,521.19 1135.49,520.43 1136.22,520.53 1136.95,520.98 1137.68,520.92 1138.41,521.09 1139.14,521.29 1139.88,520.73 1140.61,520.89 1141.34,520.92 1142.07,520.73 1142.80,521.52 1142.80,527.08 1142.07,527.87 1141.34,527.68 1140.61,527.71 1139.88,527.87 1139.14,527.31 1138.41,527.51 1137.68,527.68 1136.95,527.62 1136.22,528.07 1135.49,528.17 1134.76,527.41 1134.03,527.85 1133.30,528.47 1132.56,527.71 1131.83,528.53 1131.10,528.40 1130.37,528.27 1129.64,528.19 1128.91,528.81 1128.18,527.88 1127.45,528.71 1126.72,528.20 1125.98,528.02 1125.25,528.69 1124.52,528.51 1123.79,528.96 1123.06,528.76 1122.33,528.73 1121.60,529.66 1120.87,529.42 1120.14,529.32 1119.40,528.87 1118.67,528.83 1117.94,529.26 1117.21,530.18 1116.48,530.21 1115.75,530.18 1115.02,529.20 1114.29,530.61 1113.56,530.17 1112.82,530.05 1112.09,530.90 1111.36,530.36 1110.63,530.50 1109.90,531.31" fill="#d8efe2" />
<rect x="1109.90" y="523.95" width="32.90" height="0.70" fill="#c2d7cb"/>
<rect x="646.60" y="512.50" width="3.80" height="41.10" fill="#16211b"/>
<rect x="647.00" y="512.90" width="3.00" height="40.30" fill="#439266"/>
<rect x="650.50" y="512.50" width="5.90" height="41.10" fill="#16211b"/>
<rect x="650.90" y="512.90" width="5.10" height="40.30" fill="#439266"/>
<rect x="675.50" y="512.50" width="2.60" height="41.10" fill="#16211b"/>
<rect x="675.90" y="512.90" width="1.80" height="40.30" fill="#386a4b"/>
<rect x="683.30" y="512.50" width="2.40" height="41.10" fill="#16211b"/>
<rect x="683.70" y="512.90" width="1.60" height="40.30" fill="#386a4b"/>
<rect x="687.80" y="512.50" width="4.70" height="41.10" fill="#16211b"/>
<rect x="688.20" y="512.90" width="3.90" height="40.30" fill="#439266"/>
<rect x="711.50" y="512.50" width="2.40" height="41.10" fill="#16211b"/>
<rect x="711.90" y="512.90" width="1.60" height="40.30" fill="#386a4b"/>
<rect x="1066.70" y="512.50" width="3.10" height="41.10" fill="#16211b"/>
<rect x="1067.10" y="512.90" width="2.30" height="40.30" fill="#439266"/>
<path d="M1142.8 513.2 H1118 L1142.8 536 Z" fill="#2f5a40" stroke="none" stroke-width="1" opacity="0.8"/>
<rect x="139.70" y="555.20" width="48.30" height="41.40" fill="#1e2a24" rx="2.5"/>
<rect x="140.20" y="555.70" width="47.30" height="40.40" fill="#439266" rx="2.2"/>
<rect x="140.30" y="578.30" width="47.10" height="0.90" fill="#367753"/>
<polygon points="140.40,566.48 141.12,566.46 141.84,566.28 142.56,566.47 143.29,566.44 144.01,566.35 144.73,566.41 145.45,566.31 146.17,566.21 146.89,566.14 147.62,566.13 148.34,566.01 149.06,566.04 149.78,566.12 150.50,566.02 151.22,566.00 151.94,565.84 152.67,565.50 153.39,565.52 154.11,565.30 154.83,565.37 155.55,565.02 156.27,564.62 157.00,564.74 157.72,564.85 158.44,563.92 159.16,564.41 159.88,563.23 160.60,563.30 161.32,563.06 162.05,563.56 162.77,563.70 163.49,563.29 164.21,562.55 164.93,563.32 165.65,562.40 166.38,562.23 167.10,563.29 167.82,562.88 168.54,563.04 169.26,563.09 169.98,563.66 170.70,563.05 171.43,563.72 172.15,563.70 172.87,564.07 173.59,563.76 174.31,564.28 175.03,564.32 175.76,564.28 176.48,564.41 177.20,564.95 177.92,564.73 178.64,565.48 179.36,565.15 180.08,565.25 180.81,565.44 181.53,565.97 182.25,565.80 182.97,565.82 183.69,565.87 184.41,565.95 185.14,566.23 185.86,566.26 186.58,566.32 187.30,566.36 187.30,567.84 186.58,567.88 185.86,567.94 185.14,567.97 184.41,568.25 183.69,568.33 182.97,568.38 182.25,568.40 181.53,568.23 180.81,568.76 180.08,568.95 179.36,569.05 178.64,568.72 177.92,569.47 177.20,569.25 176.48,569.79 175.76,569.92 175.03,569.88 174.31,569.92 173.59,570.44 172.87,570.13 172.15,570.50 171.43,570.48 170.70,571.15 169.98,570.54 169.26,571.11 168.54,571.16 167.82,571.32 167.10,570.91 166.38,571.97 165.65,571.80 164.93,570.88 164.21,571.65 163.49,570.91 162.77,570.50 162.05,570.64 161.32,571.14 160.60,570.90 159.88,570.97 159.16,569.79 158.44,570.28 157.72,569.35 157.00,569.46 156.27,569.58 155.55,569.18 154.83,568.83 154.11,568.90 153.39,568.68 152.67,568.70 151.94,568.36 151.22,568.20 150.50,568.18 149.78,568.08 149.06,568.16 148.34,568.19 147.62,568.07 146.89,568.06 146.17,567.99 145.45,567.89 144.73,567.79 144.01,567.85 143.29,567.76 142.56,567.73 141.84,567.92 141.12,567.74 140.40,567.72" fill="#d8efe2" />
<rect x="140.40" y="566.75" width="46.90" height="0.70" fill="#c2d7cb"/>
<g transform="rotate(-40 156.2 588.2)" fill="none" stroke="#eef6f1" stroke-width="1.3"><rect x="151.39999999999998" y="586.5" width="5.6" height="3.4" rx="1.7"/><rect x="155.39999999999998" y="586.5" width="5.6" height="3.4" rx="1.7"/></g>
<rect x="188.80" y="555.20" width="674.70" height="41.40" fill="#1e2a24" rx="2.5"/>
<rect x="189.30" y="555.70" width="673.70" height="40.40" fill="#439266" rx="2.2"/>
<rect x="189.40" y="578.30" width="673.50" height="0.90" fill="#367753"/>
<polygon points="189.50,565.66 190.20,565.74 190.90,565.71 191.60,565.78 192.31,565.78 193.01,565.79 193.71,565.66 194.41,565.79 195.11,565.80 195.81,565.80 196.51,565.66 197.21,565.68 197.92,565.66 198.62,565.53 199.32,565.52 200.02,565.33 200.72,565.06 201.42,564.91 202.12,564.58 202.83,564.13 203.53,563.72 204.23,563.41 204.93,563.59 205.63,562.91 206.33,562.76 207.03,562.65 207.74,562.10 208.44,562.21 209.14,562.17 209.84,562.59 210.54,562.29 211.24,562.34 211.94,563.09 212.64,562.85 213.35,563.36 214.05,563.41 214.75,563.26 215.45,563.81 216.15,564.12 216.85,564.56 217.55,564.63 218.26,565.02 218.96,565.18 219.66,565.31 220.36,565.64 221.06,565.65 221.76,565.78 222.46,565.67 223.16,565.65 223.87,565.68 224.57,565.77 225.27,565.81 225.97,565.65 226.67,565.73 227.37,565.73 228.07,565.67 228.78,565.34 229.48,565.22 230.18,564.98 230.88,565.00 231.58,564.66 232.28,564.88 232.98,564.58 233.69,564.57 234.39,564.82 235.09,564.78 235.79,564.66 236.49,564.85 237.19,564.56 237.89,564.74 238.59,564.53 239.30,564.35 240.00,563.99 240.70,563.48 241.40,563.14 242.10,562.74 242.80,562.82 243.50,561.58 244.21,562.09 244.91,560.64 245.61,560.48 246.31,560.21 247.01,560.88 247.71,560.04 248.41,559.66 249.12,560.37 249.82,559.24 250.52,559.64 251.22,559.84 251.92,560.34 252.62,560.53 253.32,560.62 254.02,560.49 254.73,560.82 255.43,561.00 256.13,562.21 256.83,562.39 257.53,562.86 258.23,562.76 258.93,563.38 259.64,563.97 260.34,564.19 261.04,564.28 261.74,564.74 262.44,565.14 263.14,565.16 263.84,565.35 264.54,565.55 265.25,565.74 265.95,565.79 266.65,565.67 267.35,565.67 268.05,565.69 268.75,565.70 269.45,565.63 270.16,565.39 270.86,565.24 271.56,564.98 272.26,565.07 272.96,564.81 273.66,564.39 274.36,564.70 275.07,564.27 275.77,564.44 276.47,564.81 277.17,564.86 277.87,565.00 278.57,565.09 279.27,565.21 279.97,565.49 280.68,565.51 281.38,565.62 282.08,565.69 282.78,565.62 283.48,565.61 284.18,565.57 284.88,565.39 285.59,565.11 286.29,564.89 286.99,564.51 287.69,563.97 288.39,563.84 289.09,563.27 289.79,563.10 290.50,562.82 291.20,561.87 291.90,561.58 292.60,561.38 293.30,560.55 294.00,559.91 294.70,560.39 295.40,560.45 296.11,560.17 296.81,560.02 297.51,560.32 298.21,560.18 298.91,560.34 299.61,560.35 300.31,560.52 301.02,561.35 301.72,561.15 302.42,562.01 303.12,562.83 303.82,563.20 304.52,563.56 305.22,563.72 305.92,564.20 306.63,564.53 307.33,564.83 308.03,564.89 308.73,565.03 309.43,565.05 310.13,564.57 310.83,564.49 311.54,564.24 312.24,563.66 312.94,563.44 313.64,563.64 314.34,562.87 315.04,563.36 315.74,563.27 316.45,563.92 317.15,564.20 317.85,564.04 318.55,563.76 319.25,563.88 319.95,563.56 320.65,563.31 321.35,562.70 322.06,562.37 322.76,562.18 323.46,561.48 324.16,561.11 324.86,561.71 325.56,560.79 326.26,561.59 326.97,561.54 327.67,562.37 328.37,562.22 329.07,563.49 329.77,563.53 330.47,563.89 331.17,564.50 331.87,564.97 332.58,565.21 333.28,565.58 333.98,565.72 334.68,565.76 335.38,565.70 336.08,565.69 336.78,565.54 337.49,565.36 338.19,565.07 338.89,564.44 339.59,563.71 340.29,563.56 340.99,562.73 341.69,562.13 342.40,561.77 343.10,562.38 343.80,562.53 344.50,562.64 345.20,562.93 345.90,563.53 346.60,563.89 347.30,564.80 348.01,565.02 348.71,565.49 349.41,565.78 350.11,565.78 350.81,565.72 351.51,565.69 352.21,557.66 352.92,556.67 353.62,558.17 354.32,557.04 355.02,558.10 355.72,556.73 356.42,556.92 357.12,556.59 357.83,556.94 358.53,556.34 359.23,555.88 359.93,557.52 360.63,556.47 361.33,556.37 362.03,556.49 362.73,556.90 363.44,556.78 364.14,557.28 364.84,557.35 365.54,556.69 366.24,558.03 366.94,557.90 367.64,556.11 368.35,557.93 369.05,558.16 369.75,557.95 370.45,556.59 371.15,558.20 371.85,557.85 372.55,556.61 373.25,556.71 373.96,558.81 374.66,558.29 375.36,557.57 376.06,557.39 376.76,557.60 377.46,557.91 378.16,559.09 378.87,558.39 379.57,558.15 380.27,559.67 380.97,559.58 381.67,558.58 382.37,559.98 383.07,559.59 383.78,560.00 384.48,559.91 385.18,560.38 385.88,560.30 386.58,560.47 387.28,559.54 387.98,560.40 388.68,560.22 389.39,560.61 390.09,560.21 390.79,560.93 391.49,560.49 392.19,560.11 392.89,560.10 393.59,559.99 394.30,560.52 395.00,559.90 395.70,560.50 396.40,560.03 397.10,560.52 397.80,560.51 398.50,560.55 399.20,560.99 399.91,559.70 400.61,560.89 401.31,560.29 402.01,560.39 402.71,560.49 403.41,560.71 404.11,559.93 404.82,559.94 405.52,560.73 406.22,559.26 406.92,560.10 407.62,560.03 408.32,558.98 409.02,559.87 409.73,559.94 410.43,560.31 411.13,559.24 411.83,560.30 412.53,559.45 413.23,559.37 413.93,560.06 414.63,558.52 415.34,559.70 416.04,559.52 416.74,559.01 417.44,559.93 418.14,559.06 418.84,559.27 419.54,559.38 420.25,559.83 420.95,558.90 421.65,559.33 422.35,559.36 423.05,559.64 423.75,560.16 424.45,559.34 425.16,560.30 425.86,559.69 426.56,559.95 427.26,559.68 427.96,560.15 428.66,560.97 429.36,560.58 430.06,561.97 430.77,561.64 431.47,561.85 432.17,562.05 432.87,562.55 433.57,562.80 434.27,563.13 434.97,562.72 435.68,563.47 436.38,563.79 437.08,563.76 437.78,563.66 438.48,564.03 439.18,564.11 439.88,564.43 440.58,564.95 441.29,565.02 441.99,565.24 442.69,565.48 443.39,565.70 444.09,565.75 444.79,565.75 445.49,565.75 446.20,565.76 446.90,565.74 447.60,565.76 448.30,565.68 449.00,565.76 449.70,565.72 450.40,565.77 451.11,565.66 451.81,565.68 452.51,565.65 453.21,565.77 453.91,565.80 454.61,565.59 455.31,565.27 456.01,565.15 456.72,564.89 457.42,564.54 458.12,564.16 458.82,564.01 459.52,563.98 460.22,563.90 460.92,564.03 461.63,564.29 462.33,564.64 463.03,564.48 463.73,564.97 464.43,565.08 465.13,565.38 465.83,565.75 466.53,565.74 467.24,565.80 467.94,565.72 468.64,565.65 469.34,565.71 470.04,565.74 470.74,565.80 471.44,565.81 472.15,565.72 472.85,565.71 473.55,565.66 474.25,565.75 474.95,565.45 475.65,565.08 476.35,564.63 477.06,564.19 477.76,564.17 478.46,563.49 479.16,563.83 479.86,563.06 480.56,563.63 481.26,563.19 481.96,563.32 482.67,564.03 483.37,564.01 484.07,564.50 484.77,564.42 485.47,564.46 486.17,564.78 486.87,564.68 487.58,564.60 488.28,564.33 488.98,563.67 489.68,563.69 490.38,563.40 491.08,562.81 491.78,562.87 492.49,561.78 493.19,562.19 493.89,561.53 494.59,560.23 495.29,559.86 495.99,560.50 496.69,560.54 497.39,559.18 498.10,559.43 498.80,560.07 499.50,559.15 500.20,560.37 500.90,559.91 501.60,559.45 502.30,560.20 503.01,560.80 503.71,560.96 504.41,561.63 505.11,561.41 505.81,562.52 506.51,562.50 507.21,563.14 507.91,563.51 508.62,563.73 509.32,564.05 510.02,564.57 510.72,564.88 511.42,565.03 512.12,565.12 512.82,565.15 513.53,565.13 514.23,565.36 514.93,565.19 515.63,565.06 516.33,564.63 517.03,564.48 517.73,564.40 518.44,564.08 519.14,563.72 519.84,563.37 520.54,563.38 521.24,563.73 521.94,563.42 522.64,563.73 523.34,563.76 524.05,564.01 524.75,563.94 525.45,563.51 526.15,563.14 526.85,563.08 527.55,562.91 528.25,562.72 528.96,562.60 529.66,562.34 530.36,560.99 531.06,561.62 531.76,561.31 532.46,561.14 533.16,560.51 533.86,559.91 534.57,560.72 535.27,560.64 535.97,560.51 536.67,560.98 537.37,560.34 538.07,560.24 538.77,561.19 539.48,561.83 540.18,561.51 540.88,562.50 541.58,563.04 542.28,562.82 542.98,563.51 543.68,563.92 544.39,564.13 545.09,564.32 545.79,564.62 546.49,565.03 547.19,565.19 547.89,565.18 548.59,565.09 549.29,565.25 550.00,565.12 550.70,564.72 551.40,564.59 552.10,564.45 552.80,564.14 553.50,563.60 554.20,563.28 554.91,563.16 555.61,562.71 556.31,562.70 557.01,562.80 557.71,563.42 558.41,563.44 559.11,563.90 559.82,564.14 560.52,564.53 561.22,564.68 561.92,564.90 562.62,565.37 563.32,565.30 564.02,565.27 564.72,565.39 565.43,565.36 566.13,565.07 566.83,565.05 567.53,564.78 568.23,564.64 568.93,564.16 569.63,563.89 570.34,564.19 571.04,563.86 571.74,563.32 572.44,563.10 573.14,562.55 573.84,562.77 574.54,562.16 575.24,562.48 575.95,562.07 576.65,561.95 577.35,561.98 578.05,560.97 578.75,560.59 579.45,560.75 580.15,560.71 580.86,560.61 581.56,560.65 582.26,561.40 582.96,561.93 583.66,561.61 584.36,562.36 585.06,562.53 585.77,561.91 586.47,562.71 587.17,562.80 587.87,562.87 588.57,563.79 589.27,563.56 589.97,564.02 590.67,564.31 591.38,564.67 592.08,564.71 592.78,564.74 593.48,564.86 594.18,564.79 594.88,565.07 595.58,565.01 596.29,564.57 596.99,564.32 597.69,564.23 598.39,564.11 599.09,564.29 599.79,564.23 600.49,564.17 601.19,563.75 601.90,564.26 602.60,564.32 603.30,564.38 604.00,564.62 604.70,564.17 605.40,564.15 606.10,564.35 606.81,564.28 607.51,563.89 608.21,563.34 608.91,563.23 609.61,563.03 610.31,562.06 611.01,561.90 611.72,561.47 612.42,560.98 613.12,561.15 613.82,560.51 614.52,560.43 615.22,560.18 615.92,560.90 616.62,559.98 617.33,561.06 618.03,560.50 618.73,560.52 619.43,561.91 620.13,561.36 620.83,562.49 621.53,562.74 622.24,563.10 622.94,562.83 623.64,563.45 624.34,563.59 625.04,564.41 625.74,564.64 626.44,564.80 627.15,564.97 627.85,565.14 628.55,565.43 629.25,565.45 629.95,565.55 630.65,565.46 631.35,565.45 632.05,565.33 632.76,565.36 633.46,565.16 634.16,564.81 634.86,564.86 635.56,564.35 636.26,564.16 636.96,563.76 637.67,563.60 638.37,563.80 639.07,563.30 639.77,563.09 640.47,563.31 641.17,563.20 641.87,563.72 642.57,563.26 643.28,564.00 643.98,563.56 644.68,564.24 645.38,564.25 646.08,564.12 646.78,564.36 647.48,564.32 648.19,564.32 648.89,564.26 649.59,564.27 650.29,564.49 650.99,564.38 651.69,564.20 652.39,563.50 653.10,563.42 653.80,563.67 654.50,562.82 655.20,563.18 655.90,562.62 656.60,563.08 657.30,562.01 658.00,562.65 658.71,562.08 659.41,561.78 660.11,561.58 660.81,562.44 661.51,562.12 662.21,561.80 662.91,562.13 663.62,562.71 664.32,562.13 665.02,562.62 665.72,562.38 666.42,562.62 667.12,563.31 667.82,563.46 668.52,563.29 669.23,563.45 669.93,563.69 670.63,564.22 671.33,564.37 672.03,564.47 672.73,564.64 673.43,564.98 674.14,565.17 674.84,565.33 675.54,565.38 676.24,565.37 676.94,565.40 677.64,565.57 678.34,565.47 679.05,565.48 679.75,565.20 680.45,565.27 681.15,564.96 681.85,564.96 682.55,564.81 683.25,564.50 683.95,564.14 684.66,564.53 685.36,564.29 686.06,564.53 686.76,564.31 687.46,564.40 688.16,564.81 688.86,564.74 689.57,564.77 690.27,564.92 690.97,565.01 691.67,564.76 692.37,564.85 693.07,564.68 693.77,564.51 694.48,564.07 695.18,564.14 695.88,563.93 696.58,563.69 697.28,562.98 697.98,563.01 698.68,562.43 699.38,562.54 700.09,561.59 700.79,562.29 701.49,562.25 702.19,561.63 702.89,561.62 703.59,561.66 704.29,561.74 705.00,561.28 705.70,562.50 706.40,561.92 707.10,562.15 707.80,562.38 708.50,562.83 709.20,563.58 709.90,563.34 710.61,563.72 711.31,564.37 712.01,564.40 712.71,564.62 713.41,565.08 714.11,565.28 714.81,565.44 715.52,565.62 716.22,565.62 716.92,565.79 717.62,565.76 718.32,565.65 719.02,565.64 719.72,565.59 720.43,565.45 721.13,565.23 721.83,565.02 722.53,564.96 723.23,564.76 723.93,564.87 724.63,564.98 725.33,564.76 726.04,565.01 726.74,565.18 727.44,565.11 728.14,565.39 728.84,565.46 729.54,565.33 730.24,565.29 730.95,565.32 731.65,565.08 732.35,564.86 733.05,564.87 733.75,564.57 734.45,564.09 735.15,563.74 735.85,563.51 736.56,563.30 737.26,563.48 737.96,563.10 738.66,563.00 739.36,562.73 740.06,562.62 740.76,561.69 741.47,562.12 742.17,562.57 742.87,562.58 743.57,561.95 744.27,562.26 744.97,562.63 745.67,562.59 746.38,562.98 747.08,562.87 747.78,563.43 748.48,563.76 749.18,563.76 749.88,564.13 750.58,564.79 751.28,564.93 751.99,565.20 752.69,565.30 753.39,565.53 754.09,565.69 754.79,565.79 755.49,565.65 756.19,565.75 756.90,565.69 757.60,565.76 758.30,565.69 759.00,565.74 759.70,565.80 760.40,565.75 761.10,565.69 761.81,565.73 762.51,565.72 763.21,565.80 763.91,565.69 764.61,565.70 765.31,565.75 766.01,565.67 766.71,565.74 767.42,565.80 768.12,565.73 768.82,565.69 769.52,565.72 770.22,565.73 770.92,565.67 771.62,565.67 772.33,565.67 773.03,565.69 773.73,565.71 774.43,565.69 775.13,565.69 775.83,565.66 776.53,565.74 777.23,565.78 777.94,565.75 778.64,565.74 779.34,565.75 780.04,565.68 780.74,565.76 781.44,565.72 782.14,565.74 782.85,565.75 783.55,565.72 784.25,565.70 784.95,565.69 785.65,565.68 786.35,565.73 787.05,565.71 787.76,565.74 788.46,565.65 789.16,565.70 789.86,565.79 790.56,565.69 791.26,565.74 791.96,565.73 792.66,565.69 793.37,566.05 794.07,566.05 794.77,566.05 795.47,566.05 796.17,566.05 796.87,566.05 797.57,566.05 798.28,566.05 798.98,566.05 799.68,566.05 800.38,566.05 801.08,566.05 801.78,566.05 802.48,566.05 803.18,566.05 803.89,566.05 804.59,566.05 805.29,566.05 805.99,566.05 806.69,566.05 807.39,566.05 808.09,566.05 808.80,566.05 809.50,566.05 810.20,566.05 810.90,566.05 811.60,566.05 812.30,566.05 813.00,566.05 813.71,566.05 814.41,566.05 815.11,566.05 815.81,566.05 816.51,566.05 817.21,566.05 817.91,566.05 818.61,566.05 819.32,566.05 820.02,566.05 820.72,566.05 821.42,566.05 822.12,566.05 822.82,566.05 823.52,566.05 824.23,566.05 824.93,566.05 825.63,566.05 826.33,566.05 827.03,566.05 827.73,566.05 828.43,566.05 829.14,566.05 829.84,566.05 830.54,566.05 831.24,566.05 831.94,566.05 832.64,566.05 833.34,566.05 834.04,566.05 834.75,566.05 835.45,566.05 836.15,566.05 836.85,566.05 837.55,566.05 838.25,566.05 838.95,566.05 839.66,566.05 840.36,566.05 841.06,566.05 841.76,566.05 842.46,566.05 843.16,566.05 843.86,566.05 844.56,566.05 845.27,566.05 845.97,566.05 846.67,566.05 847.37,566.05 848.07,566.05 848.77,566.05 849.47,566.05 850.18,566.05 850.88,566.05 851.58,566.05 852.28,566.05 852.98,566.05 853.68,566.05 854.38,566.05 855.09,566.05 855.79,566.05 856.49,566.05 857.19,566.05 857.89,566.05 858.59,566.05 859.29,566.05 859.99,566.05 860.70,566.05 861.40,566.05 862.10,566.05 862.80,566.05 862.80,566.75 862.10,566.75 861.40,566.75 860.70,566.75 859.99,566.75 859.29,566.75 858.59,566.75 857.89,566.75 857.19,566.75 856.49,566.75 855.79,566.75 855.09,566.75 854.38,566.75 853.68,566.75 852.98,566.75 852.28,566.75 851.58,566.75 850.88,566.75 850.18,566.75 849.47,566.75 848.77,566.75 848.07,566.75 847.37,566.75 846.67,566.75 845.97,566.75 845.27,566.75 844.56,566.75 843.86,566.75 843.16,566.75 842.46,566.75 841.76,566.75 841.06,566.75 840.36,566.75 839.66,566.75 838.95,566.75 838.25,566.75 837.55,566.75 836.85,566.75 836.15,566.75 835.45,566.75 834.75,566.75 834.04,566.75 833.34,566.75 832.64,566.75 831.94,566.75 831.24,566.75 830.54,566.75 829.84,566.75 829.14,566.75 828.43,566.75 827.73,566.75 827.03,566.75 826.33,566.75 825.63,566.75 824.93,566.75 824.23,566.75 823.52,566.75 822.82,566.75 822.12,566.75 821.42,566.75 820.72,566.75 820.02,566.75 819.32,566.75 818.61,566.75 817.91,566.75 817.21,566.75 816.51,566.75 815.81,566.75 815.11,566.75 814.41,566.75 813.71,566.75 813.00,566.75 812.30,566.75 811.60,566.75 810.90,566.75 810.20,566.75 809.50,566.75 808.80,566.75 808.09,566.75 807.39,566.75 806.69,566.75 805.99,566.75 805.29,566.75 804.59,566.75 803.89,566.75 803.18,566.75 802.48,566.75 801.78,566.75 801.08,566.75 800.38,566.75 799.68,566.75 798.98,566.75 798.28,566.75 797.57,566.75 796.87,566.75 796.17,566.75 795.47,566.75 794.77,566.75 794.07,566.75 793.37,566.75 792.66,567.11 791.96,567.07 791.26,567.06 790.56,567.11 789.86,567.01 789.16,567.10 788.46,567.15 787.76,567.06 787.05,567.09 786.35,567.07 785.65,567.12 784.95,567.11 784.25,567.10 783.55,567.08 782.85,567.05 782.14,567.06 781.44,567.08 780.74,567.04 780.04,567.12 779.34,567.05 778.64,567.06 777.94,567.05 777.23,567.02 776.53,567.06 775.83,567.14 775.13,567.11 774.43,567.11 773.73,567.09 773.03,567.11 772.33,567.13 771.62,567.13 770.92,567.13 770.22,567.07 769.52,567.08 768.82,567.11 768.12,567.07 767.42,567.00 766.71,567.06 766.01,567.13 765.31,567.05 764.61,567.10 763.91,567.11 763.21,567.00 762.51,567.08 761.81,567.07 761.10,567.11 760.40,567.05 759.70,567.00 759.00,567.06 758.30,567.11 757.60,567.04 756.90,567.11 756.19,567.05 755.49,567.15 754.79,567.01 754.09,567.11 753.39,567.27 752.69,567.50 751.99,567.60 751.28,567.87 750.58,568.01 749.88,568.67 749.18,569.04 748.48,569.04 747.78,569.37 747.08,569.93 746.38,569.82 745.67,570.21 744.97,570.17 744.27,570.54 743.57,570.85 742.87,570.22 742.17,570.23 741.47,570.68 740.76,571.11 740.06,570.18 739.36,570.07 738.66,569.80 737.96,569.70 737.26,569.32 736.56,569.50 735.85,569.29 735.15,569.06 734.45,568.71 733.75,568.23 733.05,567.93 732.35,567.94 731.65,567.72 730.95,567.48 730.24,567.51 729.54,567.47 728.84,567.34 728.14,567.41 727.44,567.69 726.74,567.62 726.04,567.79 725.33,568.04 724.63,567.82 723.93,567.93 723.23,568.04 722.53,567.84 721.83,567.78 721.13,567.57 720.43,567.35 719.72,567.21 719.02,567.16 718.32,567.15 717.62,567.04 716.92,567.01 716.22,567.18 715.52,567.18 714.81,567.36 714.11,567.52 713.41,567.72 712.71,568.18 712.01,568.40 711.31,568.43 710.61,569.08 709.90,569.46 709.20,569.22 708.50,569.97 707.80,570.42 707.10,570.65 706.40,570.88 705.70,570.30 705.00,571.52 704.29,571.06 703.59,571.14 702.89,571.18 702.19,571.17 701.49,570.55 700.79,570.51 700.09,571.21 699.38,570.26 698.68,570.37 697.98,569.79 697.28,569.82 696.58,569.11 695.88,568.87 695.18,568.66 694.48,568.73 693.77,568.29 693.07,568.12 692.37,567.95 691.67,568.04 690.97,567.79 690.27,567.88 689.57,568.03 688.86,568.06 688.16,567.99 687.46,568.40 686.76,568.49 686.06,568.27 685.36,568.51 684.66,568.27 683.95,568.66 683.25,568.30 682.55,567.99 681.85,567.84 681.15,567.84 680.45,567.53 679.75,567.60 679.05,567.32 678.34,567.33 677.64,567.23 676.94,567.40 676.24,567.43 675.54,567.42 674.84,567.47 674.14,567.63 673.43,567.82 672.73,568.16 672.03,568.33 671.33,568.43 670.63,568.58 669.93,569.11 669.23,569.35 668.52,569.51 667.82,569.34 667.12,569.49 666.42,570.18 665.72,570.42 665.02,570.18 664.32,570.67 663.62,570.09 662.91,570.67 662.21,571.00 661.51,570.68 660.81,570.36 660.11,571.22 659.41,571.02 658.71,570.72 658.00,570.15 657.30,570.79 656.60,569.72 655.90,570.18 655.20,569.62 654.50,569.98 653.80,569.13 653.10,569.38 652.39,569.30 651.69,568.60 650.99,568.42 650.29,568.31 649.59,568.53 648.89,568.54 648.19,568.48 647.48,568.48 646.78,568.44 646.08,568.68 645.38,568.55 644.68,568.56 643.98,569.24 643.28,568.80 642.57,569.54 641.87,569.08 641.17,569.60 640.47,569.49 639.77,569.71 639.07,569.50 638.37,569.00 637.67,569.20 636.96,569.04 636.26,568.64 635.56,568.45 634.86,567.94 634.16,567.99 633.46,567.64 632.76,567.44 632.05,567.47 631.35,567.35 630.65,567.34 629.95,567.25 629.25,567.35 628.55,567.37 627.85,567.66 627.15,567.83 626.44,568.00 625.74,568.16 625.04,568.39 624.34,569.21 623.64,569.35 622.94,569.97 622.24,569.70 621.53,570.06 620.83,570.31 620.13,571.44 619.43,570.89 618.73,572.28 618.03,572.30 617.33,571.74 616.62,572.82 615.92,571.90 615.22,572.62 614.52,572.37 613.82,572.29 613.12,571.65 612.42,571.82 611.72,571.33 611.01,570.90 610.31,570.74 609.61,569.77 608.91,569.57 608.21,569.46 607.51,568.91 606.81,568.52 606.10,568.45 605.40,568.65 604.70,568.63 604.00,568.18 603.30,568.42 602.60,568.48 601.90,568.54 601.19,569.05 600.49,568.63 599.79,568.57 599.09,568.51 598.39,568.69 597.69,568.57 596.99,568.48 596.29,568.23 595.58,567.79 594.88,567.73 594.18,568.01 593.48,567.94 592.78,568.06 592.08,568.09 591.38,568.13 590.67,568.49 589.97,568.78 589.27,569.24 588.57,569.01 587.87,569.93 587.17,570.00 586.47,570.09 585.77,570.89 585.06,570.27 584.36,570.44 583.66,571.19 582.96,570.87 582.26,571.40 581.56,572.15 580.86,572.19 580.15,572.09 579.45,572.05 578.75,572.21 578.05,571.83 577.35,570.82 576.65,570.85 575.95,570.73 575.24,570.32 574.54,570.64 573.84,570.03 573.14,570.25 572.44,569.70 571.74,569.48 571.04,568.94 570.34,568.61 569.63,568.91 568.93,568.64 568.23,568.16 567.53,568.02 566.83,567.75 566.13,567.73 565.43,567.44 564.72,567.41 564.02,567.53 563.32,567.50 562.62,567.43 561.92,567.90 561.22,568.12 560.52,568.27 559.82,568.66 559.11,568.90 558.41,569.36 557.71,569.38 557.01,570.00 556.31,570.10 555.61,570.09 554.91,569.64 554.20,569.52 553.50,569.20 552.80,568.66 552.10,568.35 551.40,568.21 550.70,568.08 550.00,567.68 549.29,567.55 548.59,567.71 547.89,567.62 547.19,567.61 546.49,567.77 545.79,568.18 545.09,568.48 544.39,568.67 543.68,568.88 542.98,569.29 542.28,569.98 541.58,569.76 540.88,570.30 540.18,571.29 539.48,570.97 538.77,571.61 538.07,572.56 537.37,572.46 536.67,571.82 535.97,572.29 535.27,572.16 534.57,572.08 533.86,572.89 533.16,572.29 532.46,571.66 531.76,571.49 531.06,571.18 530.36,571.81 529.66,570.46 528.96,570.20 528.25,570.08 527.55,569.89 526.85,569.72 526.15,569.66 525.45,569.29 524.75,568.86 524.05,568.79 523.34,569.04 522.64,569.07 521.94,569.38 521.24,569.07 520.54,569.42 519.84,569.43 519.14,569.08 518.44,568.72 517.73,568.40 517.03,568.32 516.33,568.17 515.63,567.74 514.93,567.61 514.23,567.44 513.53,567.67 512.82,567.65 512.12,567.68 511.42,567.77 510.72,567.92 510.02,568.23 509.32,568.75 508.62,569.07 507.91,569.29 507.21,569.66 506.51,570.30 505.81,570.28 505.11,571.39 504.41,571.17 503.71,571.84 503.01,572.00 502.30,572.60 501.60,573.35 500.90,572.89 500.20,572.43 499.50,573.65 498.80,572.73 498.10,573.37 497.39,573.62 496.69,572.26 495.99,572.30 495.29,572.94 494.59,572.57 493.89,571.27 493.19,570.61 492.49,571.02 491.78,569.93 491.08,569.99 490.38,569.40 489.68,569.11 488.98,569.13 488.28,568.47 487.58,568.20 486.87,568.12 486.17,568.02 485.47,568.34 484.77,568.38 484.07,568.30 483.37,568.79 482.67,568.77 481.96,569.48 481.26,569.61 480.56,569.17 479.86,569.74 479.16,568.97 478.46,569.31 477.76,568.63 477.06,568.61 476.35,568.17 475.65,567.72 474.95,567.35 474.25,567.05 473.55,567.14 472.85,567.09 472.15,567.08 471.44,566.99 470.74,567.00 470.04,567.06 469.34,567.09 468.64,567.15 467.94,567.08 467.24,567.00 466.53,567.06 465.83,567.05 465.13,567.42 464.43,567.72 463.73,567.83 463.03,568.32 462.33,568.16 461.63,568.51 460.92,568.77 460.22,568.90 459.52,568.82 458.82,568.79 458.12,568.64 457.42,568.26 456.72,567.91 456.01,567.65 455.31,567.53 454.61,567.21 453.91,567.00 453.21,567.03 452.51,567.15 451.81,567.12 451.11,567.14 450.40,567.03 449.70,567.08 449.00,567.04 448.30,567.12 447.60,567.04 446.90,567.06 446.20,567.04 445.49,567.05 444.79,567.05 444.09,567.05 443.39,567.10 442.69,567.32 441.99,567.56 441.29,567.78 440.58,567.85 439.88,568.37 439.18,568.69 438.48,568.77 437.78,569.14 437.08,569.04 436.38,569.01 435.68,569.33 434.97,570.08 434.27,569.67 433.57,570.00 432.87,570.25 432.17,570.75 431.47,570.95 430.77,571.16 430.06,570.83 429.36,572.22 428.66,571.83 427.96,572.65 427.26,573.12 426.56,572.85 425.86,573.11 425.16,572.50 424.45,573.46 423.75,572.64 423.05,573.16 422.35,573.44 421.65,573.47 420.95,573.90 420.25,572.97 419.54,573.42 418.84,573.53 418.14,573.74 417.44,572.87 416.74,573.79 416.04,573.28 415.34,573.10 414.63,574.28 413.93,572.74 413.23,573.43 412.53,573.35 411.83,572.50 411.13,573.56 410.43,572.49 409.73,572.86 409.02,572.93 408.32,573.82 407.62,572.77 406.92,572.70 406.22,573.54 405.52,572.07 404.82,572.86 404.11,572.87 403.41,572.09 402.71,572.31 402.01,572.41 401.31,572.51 400.61,571.91 399.91,573.10 399.20,571.81 398.50,572.25 397.80,572.29 397.10,572.28 396.40,572.77 395.70,572.30 395.00,572.90 394.30,572.28 393.59,572.81 392.89,572.70 392.19,572.69 391.49,572.31 390.79,571.87 390.09,572.59 389.39,572.19 388.68,572.58 387.98,572.40 387.28,573.26 386.58,572.33 385.88,572.50 385.18,572.42 384.48,572.89 383.78,572.80 383.07,573.21 382.37,572.82 381.67,574.22 380.97,573.22 380.27,573.13 379.57,574.65 378.87,574.41 378.16,573.71 377.46,574.89 376.76,575.20 376.06,575.41 375.36,575.23 374.66,574.51 373.96,573.99 373.25,576.09 372.55,576.19 371.85,574.95 371.15,574.60 370.45,576.21 369.75,574.85 369.05,574.64 368.35,574.87 367.64,576.69 366.94,574.90 366.24,574.77 365.54,576.11 364.84,575.45 364.14,575.52 363.44,576.02 362.73,575.90 362.03,576.31 361.33,576.43 360.63,576.33 359.93,575.28 359.23,576.92 358.53,576.46 357.83,575.86 357.12,576.21 356.42,575.88 355.72,576.07 355.02,574.70 354.32,575.76 353.62,574.63 352.92,576.13 352.21,575.14 351.51,567.11 350.81,567.08 350.11,567.02 349.41,567.02 348.71,567.31 348.01,567.78 347.30,568.00 346.60,568.91 345.90,569.27 345.20,569.87 344.50,570.16 343.80,570.27 343.10,570.42 342.40,571.03 341.69,570.67 340.99,570.07 340.29,569.24 339.59,569.09 338.89,568.36 338.19,567.73 337.49,567.44 336.78,567.26 336.08,567.11 335.38,567.10 334.68,567.04 333.98,567.08 333.28,567.22 332.58,567.59 331.87,567.83 331.17,568.30 330.47,568.91 329.77,569.27 329.07,569.31 328.37,570.58 327.67,570.43 326.97,571.26 326.26,571.21 325.56,572.01 324.86,571.09 324.16,571.69 323.46,571.32 322.76,570.62 322.06,570.43 321.35,570.10 320.65,569.49 319.95,569.24 319.25,568.92 318.55,569.04 317.85,568.76 317.15,568.60 316.45,568.88 315.74,569.53 315.04,569.44 314.34,569.93 313.64,569.16 312.94,569.36 312.24,569.14 311.54,568.56 310.83,568.31 310.13,568.23 309.43,567.75 308.73,567.77 308.03,567.91 307.33,567.97 306.63,568.27 305.92,568.60 305.22,569.08 304.52,569.24 303.82,569.60 303.12,569.97 302.42,570.79 301.72,571.65 301.02,571.45 300.31,572.28 299.61,572.45 298.91,572.46 298.21,572.62 297.51,572.48 296.81,572.78 296.11,572.63 295.40,572.35 294.70,572.41 294.00,572.89 293.30,572.25 292.60,571.42 291.90,571.22 291.20,570.93 290.50,569.98 289.79,569.70 289.09,569.53 288.39,568.96 287.69,568.83 286.99,568.29 286.29,567.91 285.59,567.69 284.88,567.41 284.18,567.23 283.48,567.19 282.78,567.18 282.08,567.11 281.38,567.18 280.68,567.29 279.97,567.31 279.27,567.59 278.57,567.71 277.87,567.80 277.17,567.94 276.47,567.99 275.77,568.36 275.07,568.53 274.36,568.10 273.66,568.41 272.96,567.99 272.26,567.73 271.56,567.82 270.86,567.56 270.16,567.41 269.45,567.17 268.75,567.10 268.05,567.11 267.35,567.13 266.65,567.13 265.95,567.01 265.25,567.06 264.54,567.25 263.84,567.45 263.14,567.64 262.44,567.66 261.74,568.06 261.04,568.52 260.34,568.61 259.64,568.83 258.93,569.42 258.23,570.04 257.53,569.94 256.83,570.41 256.13,570.59 255.43,571.80 254.73,571.98 254.02,572.31 253.32,572.18 252.62,572.27 251.92,572.46 251.22,572.96 250.52,573.16 249.82,573.56 249.12,572.43 248.41,573.14 247.71,572.76 247.01,571.92 246.31,572.59 245.61,572.32 244.91,572.16 244.21,570.71 243.50,571.22 242.80,569.98 242.10,570.06 241.40,569.66 240.70,569.32 240.00,568.81 239.30,568.45 238.59,568.27 237.89,568.06 237.19,568.24 236.49,567.95 235.79,568.14 235.09,568.02 234.39,567.98 233.69,568.23 232.98,568.22 232.28,567.92 231.58,568.14 230.88,567.80 230.18,567.82 229.48,567.58 228.78,567.46 228.07,567.13 227.37,567.07 226.67,567.07 225.97,567.15 225.27,566.99 224.57,567.03 223.87,567.12 223.16,567.15 222.46,567.13 221.76,567.02 221.06,567.15 220.36,567.16 219.66,567.49 218.96,567.62 218.26,567.78 217.55,568.17 216.85,568.24 216.15,568.68 215.45,568.99 214.75,569.54 214.05,569.39 213.35,569.44 212.64,569.95 211.94,569.71 211.24,570.46 210.54,570.51 209.84,570.21 209.14,570.63 208.44,570.59 207.74,570.70 207.03,570.15 206.33,570.04 205.63,569.89 204.93,569.21 204.23,569.39 203.53,569.08 202.83,568.67 202.12,568.22 201.42,567.89 200.72,567.74 200.02,567.47 199.32,567.28 198.62,567.27 197.92,567.14 197.21,567.12 196.51,567.14 195.81,567.00 195.11,567.00 194.41,567.01 193.71,567.14 193.01,567.01 192.31,567.02 191.60,567.02 190.90,567.09 190.20,567.06 189.50,567.14" fill="#d8efe2" />
<rect x="189.50" y="566.00" width="673.30" height="0.80" fill="#d4ecdf"/>
<rect x="189.50" y="563.80" width="673.30" height="0.50" fill="#7fb898"/>
<rect x="914.30" y="555.20" width="7.80" height="41.40" fill="#1e2a24" rx="2.5"/>
<rect x="914.80" y="555.70" width="6.80" height="40.40" fill="#386a4b" rx="2.2"/>
<rect x="914.90" y="578.30" width="6.60" height="0.90" fill="#2d563d"/>
<polygon points="915.80,559.20 916.76,557.60 917.72,557.96 918.68,559.60 919.64,559.22 920.60,558.44 920.60,575.76 919.64,574.98 918.68,574.60 917.72,576.24 916.76,576.60 915.80,575.00" fill="#d8efe2" />
<rect x="915.80" y="566.75" width="4.80" height="0.70" fill="#c2d7cb"/>
<rect x="944.70" y="555.20" width="29.20" height="41.40" fill="#1e2a24" rx="2.5"/>
<rect x="945.20" y="555.70" width="28.20" height="40.40" fill="#386a4b" rx="2.2"/>
<rect x="945.30" y="578.30" width="28.00" height="0.90" fill="#2d563d"/>
<polygon points="945.40,563.80 946.13,564.52 946.86,564.20 947.59,564.21 948.33,564.26 949.06,563.95 949.79,563.09 950.52,562.41 951.25,562.26 951.98,562.26 952.72,561.87 953.45,560.84 954.18,560.37 954.91,560.94 955.64,560.51 956.37,559.53 957.11,560.90 957.84,559.72 958.57,557.88 959.30,558.81 960.03,559.86 960.76,558.55 961.49,559.77 962.23,558.12 962.96,559.23 963.69,560.92 964.42,560.65 965.15,561.21 965.88,560.62 966.62,561.65 967.35,562.14 968.08,562.03 968.81,562.98 969.54,563.10 970.27,563.99 971.01,563.65 971.74,563.65 972.47,563.49 973.20,563.68 973.20,570.52 972.47,570.71 971.74,570.55 971.01,570.55 970.27,570.21 969.54,571.10 968.81,571.22 968.08,572.17 967.35,572.06 966.62,572.55 965.88,573.58 965.15,572.99 964.42,573.55 963.69,573.28 962.96,574.97 962.23,576.08 961.49,574.43 960.76,575.65 960.03,574.34 959.30,575.39 958.57,576.32 957.84,574.48 957.11,573.30 956.37,574.67 955.64,573.69 954.91,573.26 954.18,573.83 953.45,573.36 952.72,572.33 951.98,571.94 951.25,571.94 950.52,571.79 949.79,571.11 949.06,570.25 948.33,569.94 947.59,569.99 946.86,570.00 946.13,569.68 945.40,570.40" fill="#d8efe2" />
<rect x="945.40" y="566.75" width="27.80" height="0.70" fill="#c2d7cb"/>
<rect x="991.60" y="555.20" width="29.90" height="41.40" fill="#1e2a24" rx="2.5"/>
<rect x="992.10" y="555.70" width="28.90" height="40.40" fill="#386a4b" rx="2.2"/>
<rect x="992.20" y="578.30" width="28.70" height="0.90" fill="#2d563d"/>
<polygon points="992.30,564.46 993.03,563.69 993.76,563.56 994.49,563.48 995.22,563.71 995.95,563.89 996.68,563.40 997.42,563.42 998.15,561.98 998.88,561.50 999.61,562.45 1000.34,561.23 1001.07,561.63 1001.80,560.45 1002.53,559.61 1003.26,559.46 1003.99,558.67 1004.72,560.54 1005.45,559.47 1006.18,558.67 1006.92,558.90 1007.65,558.73 1008.38,557.90 1009.11,560.39 1009.84,559.78 1010.57,561.03 1011.30,560.04 1012.03,560.84 1012.76,560.41 1013.49,560.43 1014.22,562.56 1014.95,562.74 1015.68,562.17 1016.42,563.41 1017.15,563.54 1017.88,563.09 1018.61,563.70 1019.34,564.30 1020.07,563.91 1020.80,564.53 1020.80,569.67 1020.07,570.29 1019.34,569.90 1018.61,570.50 1017.88,571.11 1017.15,570.66 1016.42,570.79 1015.68,572.03 1014.95,571.46 1014.22,571.64 1013.49,573.77 1012.76,573.79 1012.03,573.36 1011.30,574.16 1010.57,573.17 1009.84,574.42 1009.11,573.81 1008.38,576.30 1007.65,575.47 1006.92,575.30 1006.18,575.53 1005.45,574.73 1004.72,573.66 1003.99,575.53 1003.26,574.74 1002.53,574.59 1001.80,573.75 1001.07,572.57 1000.34,572.97 999.61,571.75 998.88,572.70 998.15,572.22 997.42,570.78 996.68,570.80 995.95,570.31 995.22,570.49 994.49,570.72 993.76,570.64 993.03,570.51 992.30,569.74" fill="#d8efe2" />
<rect x="992.30" y="566.75" width="28.50" height="0.70" fill="#c2d7cb"/>
<rect x="1036.60" y="555.20" width="29.90" height="41.40" fill="#1e2a24" rx="2.5"/>
<rect x="1037.10" y="555.70" width="28.90" height="40.40" fill="#386a4b" rx="2.2"/>
<rect x="1037.20" y="578.30" width="28.70" height="0.90" fill="#2d563d"/>
<polygon points="1037.30,563.93 1038.03,563.99 1038.76,564.23 1039.49,563.53 1040.22,563.45 1040.95,563.96 1041.68,563.22 1042.42,563.40 1043.15,562.26 1043.88,561.77 1044.61,561.70 1045.34,560.96 1046.07,562.16 1046.80,560.31 1047.53,560.54 1048.26,559.08 1048.99,559.80 1049.72,559.14 1050.45,558.97 1051.18,557.87 1051.92,557.97 1052.65,559.98 1053.38,558.74 1054.11,558.62 1054.84,558.74 1055.57,559.30 1056.30,559.55 1057.03,559.49 1057.76,561.31 1058.49,561.03 1059.22,561.09 1059.95,562.48 1060.68,561.81 1061.42,562.45 1062.15,563.57 1062.88,562.86 1063.61,563.50 1064.34,564.16 1065.07,564.26 1065.80,563.68 1065.80,570.52 1065.07,569.94 1064.34,570.04 1063.61,570.70 1062.88,571.34 1062.15,570.63 1061.42,571.75 1060.68,572.39 1059.95,571.72 1059.22,573.11 1058.49,573.17 1057.76,572.89 1057.03,574.71 1056.30,574.65 1055.57,574.90 1054.84,575.46 1054.11,575.58 1053.38,575.46 1052.65,574.22 1051.92,576.23 1051.18,576.33 1050.45,575.23 1049.72,575.06 1048.99,574.40 1048.26,575.12 1047.53,573.66 1046.80,573.89 1046.07,572.04 1045.34,573.24 1044.61,572.50 1043.88,572.43 1043.15,571.94 1042.42,570.80 1041.68,570.98 1040.95,570.24 1040.22,570.75 1039.49,570.67 1038.76,569.97 1038.03,570.21 1037.30,570.27" fill="#d8efe2" />
<rect x="1037.30" y="566.75" width="28.50" height="0.70" fill="#c2d7cb"/>
<rect x="646.10" y="597.60" width="267.70" height="41.30" fill="#1e2a24" rx="2.5"/>
<rect x="646.60" y="598.10" width="266.70" height="40.30" fill="#439266" rx="2.2"/>
<rect x="646.70" y="620.70" width="266.50" height="0.90" fill="#367753"/>
<polygon points="646.80,608.10 647.50,608.17 648.21,608.11 648.91,608.20 649.61,608.08 650.31,608.08 651.02,607.85 651.72,607.61 652.42,607.49 653.12,607.17 653.83,607.18 654.53,606.75 655.23,606.85 655.93,606.44 656.64,606.06 657.34,605.72 658.04,605.74 658.74,605.19 659.45,605.54 660.15,604.67 660.85,604.86 661.56,604.75 662.26,604.36 662.96,604.81 663.66,604.36 664.37,604.66 665.07,604.60 665.77,604.41 666.47,604.60 667.18,604.45 667.88,604.73 668.58,605.53 669.28,605.29 669.99,605.80 670.69,605.63 671.39,606.20 672.09,606.32 672.80,606.64 673.50,606.78 674.20,606.92 674.91,607.24 675.61,607.41 676.31,607.57 677.01,607.87 677.72,607.90 678.42,608.01 679.12,608.16 679.82,608.15 680.53,608.14 681.23,608.07 681.93,607.80 682.63,607.69 683.34,607.46 684.04,607.51 684.74,607.39 685.45,607.20 686.15,607.20 686.85,607.33 687.55,607.42 688.26,607.38 688.96,607.70 689.66,607.68 690.36,607.84 691.07,607.80 691.77,607.80 692.47,607.94 693.17,607.82 693.88,607.69 694.58,607.30 695.28,607.07 695.98,606.86 696.69,606.61 697.39,606.38 698.09,606.13 698.80,605.60 699.50,605.51 700.20,605.51 700.90,604.86 701.61,605.26 702.31,604.83 703.01,604.85 703.71,604.27 704.42,604.42 705.12,604.69 705.82,604.39 706.52,604.14 707.23,605.12 707.93,605.24 708.63,605.01 709.33,605.06 710.04,605.98 710.74,606.06 711.44,605.98 712.15,606.40 712.85,606.62 713.55,607.20 714.25,607.21 714.96,607.66 715.66,607.79 716.36,607.79 717.06,608.06 717.77,608.10 718.47,608.17 719.17,608.18 719.87,608.09 720.58,608.04 721.28,608.11 721.98,607.89 722.68,607.90 723.39,607.74 724.09,607.68 724.79,607.68 725.50,607.62 726.20,607.62 726.90,607.60 727.60,607.88 728.31,607.92 729.01,608.04 729.71,608.18 730.41,608.07 731.12,608.17 731.82,608.03 732.52,608.06 733.22,607.97 733.93,607.68 734.63,607.57 735.33,607.52 736.04,607.17 736.74,606.88 737.44,606.45 738.14,606.04 738.85,605.93 739.55,605.69 740.25,605.24 740.95,605.07 741.66,604.67 742.36,605.02 743.06,604.84 743.76,604.28 744.47,604.22 745.17,604.50 745.87,604.46 746.57,605.06 747.28,604.59 747.98,604.72 748.68,605.47 749.39,605.05 750.09,605.66 750.79,605.76 751.49,606.37 752.20,606.47 752.90,606.85 753.60,606.83 754.30,607.30 755.01,607.49 755.71,607.65 756.41,607.90 757.11,608.05 757.82,608.04 758.52,608.09 759.22,608.11 759.92,608.08 760.63,608.06 761.33,608.04 762.03,607.88 762.74,607.84 763.44,607.61 764.14,607.34 764.84,607.27 765.55,607.24 766.25,607.17 766.95,607.12 767.65,607.17 768.36,607.26 769.06,607.70 769.76,607.73 770.46,607.63 771.17,607.83 771.87,607.90 772.57,607.74 773.27,607.50 773.98,607.47 774.68,607.26 775.38,606.93 776.09,606.83 776.79,606.26 777.49,606.50 778.19,606.03 778.90,605.71 779.60,605.66 780.30,605.10 781.00,604.37 781.71,604.04 782.41,603.61 783.11,603.19 783.81,603.90 784.52,603.81 785.22,602.92 785.92,602.66 786.63,603.25 787.33,603.54 788.03,603.70 788.73,602.74 789.44,603.73 790.14,603.96 790.84,604.06 791.54,603.81 792.25,603.95 792.95,604.95 793.65,604.76 794.35,605.14 795.06,605.62 795.76,605.81 796.46,606.43 797.16,606.37 797.87,606.58 798.57,607.09 799.27,607.35 799.98,607.62 800.68,607.75 801.38,607.95 802.08,608.06 802.79,608.05 803.49,608.09 804.19,608.03 804.89,608.00 805.60,607.96 806.30,607.71 807.00,607.72 807.70,607.40 808.41,607.35 809.11,607.44 809.81,607.04 810.51,607.02 811.22,607.23 811.92,607.24 812.62,607.54 813.33,607.43 814.03,607.78 814.73,607.85 815.43,607.85 816.14,607.74 816.84,607.62 817.54,607.61 818.24,607.41 818.95,607.17 819.65,606.90 820.35,606.68 821.05,606.52 821.76,606.34 822.46,606.10 823.16,605.21 823.86,604.97 824.57,604.77 825.27,604.58 825.97,604.04 826.68,603.57 827.38,603.16 828.08,603.23 828.78,603.24 829.49,603.82 830.19,603.66 830.89,603.56 831.59,603.73 832.30,603.78 833.00,603.41 833.70,603.82 834.40,603.05 835.11,604.07 835.81,604.25 836.51,604.20 837.22,604.80 837.92,605.47 838.62,605.36 839.32,605.81 840.03,605.88 840.73,606.22 841.43,606.80 842.13,606.61 842.84,606.92 843.54,607.28 844.24,607.28 844.94,607.17 845.65,607.32 846.35,607.07 847.05,606.95 847.75,606.62 848.46,606.44 849.16,606.26 849.86,606.02 850.57,605.78 851.27,605.87 851.97,606.43 852.67,606.31 853.38,606.12 854.08,606.60 854.78,606.18 855.48,605.95 856.19,606.03 856.89,605.56 857.59,605.44 858.29,605.18 859.00,604.53 859.70,604.55 860.40,603.71 861.10,603.88 861.81,603.72 862.51,602.83 863.21,603.10 863.92,602.51 864.62,602.97 865.32,603.57 866.02,603.18 866.73,603.51 867.43,603.72 868.13,603.10 868.83,604.45 869.54,604.39 870.24,604.02 870.94,605.11 871.64,605.03 872.35,605.21 873.05,606.17 873.75,606.21 874.45,606.64 875.16,606.61 875.86,607.19 876.56,607.17 877.27,607.48 877.97,607.73 878.67,607.84 879.37,608.12 880.08,608.08 880.78,608.10 881.48,608.16 882.18,608.12 882.89,608.19 883.59,608.15 884.29,608.19 884.99,608.14 885.70,608.20 886.40,600.78 887.10,599.25 887.81,600.51 888.51,599.63 889.21,600.55 889.91,600.37 890.62,600.68 891.32,599.15 892.02,599.70 892.72,600.49 893.43,600.95 894.13,600.46 894.83,598.98 895.53,600.20 896.24,599.10 896.94,600.08 897.64,600.63 898.34,599.13 899.05,600.90 899.75,600.36 900.45,599.44 901.16,599.30 901.86,599.86 902.56,600.71 903.26,600.15 903.97,599.13 904.67,598.93 905.37,599.12 906.07,600.63 906.78,599.29 907.48,600.09 908.18,599.52 908.88,600.38 909.59,599.71 910.29,599.20 910.99,600.79 911.69,600.06 912.40,600.39 913.10,600.65 913.10,616.95 912.40,617.21 911.69,617.54 910.99,616.81 910.29,618.40 909.59,617.89 908.88,617.22 908.18,618.08 907.48,617.51 906.78,618.31 906.07,616.97 905.37,618.48 904.67,618.67 903.97,618.47 903.26,617.45 902.56,616.89 901.86,617.74 901.16,618.30 900.45,618.16 899.75,617.24 899.05,616.70 898.34,618.47 897.64,616.97 896.94,617.52 896.24,618.50 895.53,617.40 894.83,618.62 894.13,617.14 893.43,616.65 892.72,617.11 892.02,617.90 891.32,618.45 890.62,616.92 889.91,617.23 889.21,617.05 888.51,617.97 887.81,617.09 887.10,618.35 886.40,616.82 885.70,609.40 884.99,609.46 884.29,609.41 883.59,609.45 882.89,609.41 882.18,609.48 881.48,609.44 880.78,609.50 880.08,609.52 879.37,609.48 878.67,609.76 877.97,609.87 877.27,610.12 876.56,610.43 875.86,610.41 875.16,610.99 874.45,610.96 873.75,611.39 873.05,611.43 872.35,612.39 871.64,612.57 870.94,612.49 870.24,613.58 869.54,613.21 868.83,613.15 868.13,614.50 867.43,613.88 866.73,614.09 866.02,614.42 865.32,614.03 864.62,614.63 863.92,615.09 863.21,614.50 862.51,614.77 861.81,613.88 861.10,613.72 860.40,613.89 859.70,613.05 859.00,613.07 858.29,612.42 857.59,612.16 856.89,612.04 856.19,611.57 855.48,611.65 854.78,611.42 854.08,611.00 853.38,611.48 852.67,611.29 851.97,611.17 851.27,611.73 850.57,611.82 849.86,611.58 849.16,611.34 848.46,611.16 847.75,610.98 847.05,610.65 846.35,610.53 845.65,610.28 844.94,610.43 844.24,610.32 843.54,610.32 842.84,610.68 842.13,610.99 841.43,610.80 840.73,611.38 840.03,611.72 839.32,611.79 838.62,612.24 837.92,612.13 837.22,612.80 836.51,613.40 835.81,613.35 835.11,613.53 834.40,614.55 833.70,613.78 833.00,614.19 832.30,613.82 831.59,613.87 830.89,614.04 830.19,613.94 829.49,613.78 828.78,614.36 828.08,614.37 827.38,614.44 826.68,614.03 825.97,613.56 825.27,613.02 824.57,612.83 823.86,612.63 823.16,612.39 822.46,611.50 821.76,611.26 821.05,611.08 820.35,610.92 819.65,610.70 818.95,610.43 818.24,610.19 817.54,609.99 816.84,609.98 816.14,609.86 815.43,609.75 814.73,609.75 814.03,609.82 813.33,610.17 812.62,610.06 811.92,610.36 811.22,610.37 810.51,610.58 809.81,610.56 809.11,610.16 808.41,610.25 807.70,610.20 807.00,609.88 806.30,609.89 805.60,609.64 804.89,609.60 804.19,609.57 803.49,609.51 802.79,609.55 802.08,609.54 801.38,609.65 800.68,609.85 799.98,609.98 799.27,610.25 798.57,610.51 797.87,611.02 797.16,611.23 796.46,611.17 795.76,611.79 795.06,611.98 794.35,612.46 793.65,612.84 792.95,612.65 792.25,613.65 791.54,613.79 790.84,613.54 790.14,613.64 789.44,613.87 788.73,614.86 788.03,613.90 787.33,614.06 786.63,614.35 785.92,614.94 785.22,614.68 784.52,613.79 783.81,613.70 783.11,614.41 782.41,613.99 781.71,613.56 781.00,613.23 780.30,612.50 779.60,611.94 778.90,611.89 778.19,611.57 777.49,611.10 776.79,611.34 776.09,610.77 775.38,610.67 774.68,610.34 773.98,610.13 773.27,610.10 772.57,609.86 771.87,609.70 771.17,609.77 770.46,609.97 769.76,609.87 769.06,609.90 768.36,610.34 767.65,610.43 766.95,610.48 766.25,610.43 765.55,610.36 764.84,610.33 764.14,610.26 763.44,609.99 762.74,609.76 762.03,609.72 761.33,609.56 760.63,609.54 759.92,609.52 759.22,609.49 758.52,609.51 757.82,609.56 757.11,609.55 756.41,609.70 755.71,609.95 755.01,610.11 754.30,610.30 753.60,610.77 752.90,610.75 752.20,611.13 751.49,611.23 750.79,611.84 750.09,611.94 749.39,612.55 748.68,612.13 747.98,612.88 747.28,613.01 746.57,612.54 745.87,613.14 745.17,613.10 744.47,613.38 743.76,613.32 743.06,612.76 742.36,612.58 741.66,612.93 740.95,612.53 740.25,612.36 739.55,611.91 738.85,611.67 738.14,611.56 737.44,611.15 736.74,610.72 736.04,610.43 735.33,610.08 734.63,610.03 733.93,609.92 733.22,609.63 732.52,609.54 731.82,609.57 731.12,609.43 730.41,609.53 729.71,609.42 729.01,609.56 728.31,609.68 727.60,609.72 726.90,610.00 726.20,609.98 725.50,609.98 724.79,609.92 724.09,609.92 723.39,609.86 722.68,609.70 721.98,609.71 721.28,609.49 720.58,609.56 719.87,609.51 719.17,609.42 718.47,609.43 717.77,609.50 717.06,609.54 716.36,609.81 715.66,609.81 714.96,609.94 714.25,610.39 713.55,610.40 712.85,610.98 712.15,611.20 711.44,611.62 710.74,611.54 710.04,611.62 709.33,612.54 708.63,612.59 707.93,612.36 707.23,612.48 706.52,613.46 705.82,613.21 705.12,612.91 704.42,613.18 703.71,613.33 703.01,612.75 702.31,612.77 701.61,612.34 700.90,612.74 700.20,612.09 699.50,612.09 698.80,612.00 698.09,611.47 697.39,611.22 696.69,610.99 695.98,610.74 695.28,610.53 694.58,610.30 693.88,609.91 693.17,609.78 692.47,609.66 691.77,609.80 691.07,609.80 690.36,609.76 689.66,609.92 688.96,609.90 688.26,610.22 687.55,610.18 686.85,610.27 686.15,610.40 685.45,610.40 684.74,610.21 684.04,610.09 683.34,610.14 682.63,609.91 681.93,609.80 681.23,609.53 680.53,609.46 679.82,609.45 679.12,609.44 678.42,609.59 677.72,609.70 677.01,609.73 676.31,610.03 675.61,610.19 674.91,610.36 674.20,610.68 673.50,610.82 672.80,610.96 672.09,611.28 671.39,611.40 670.69,611.97 669.99,611.80 669.28,612.31 668.58,612.07 667.88,612.87 667.18,613.15 666.47,613.00 665.77,613.19 665.07,613.00 664.37,612.94 663.66,613.24 662.96,612.79 662.26,613.24 661.56,612.85 660.85,612.74 660.15,612.93 659.45,612.06 658.74,612.41 658.04,611.86 657.34,611.88 656.64,611.54 655.93,611.16 655.23,610.75 654.53,610.85 653.83,610.42 653.12,610.43 652.42,610.11 651.72,609.99 651.02,609.75 650.31,609.52 649.61,609.52 648.91,609.40 648.21,609.49 647.50,609.43 646.80,609.50" fill="#d8efe2" />
<rect x="646.80" y="608.40" width="266.30" height="0.80" fill="#d4ecdf"/>
<rect x="646.80" y="606.20" width="266.30" height="0.50" fill="#7fb898"/>
<rect x="914.30" y="597.60" width="7.80" height="41.30" fill="#1e2a24" rx="2.5"/>
<rect x="914.80" y="598.10" width="6.80" height="40.30" fill="#439266" rx="2.2"/>
<rect x="914.90" y="620.70" width="6.60" height="0.90" fill="#367753"/>
<polygon points="915.80,601.93 916.76,599.61 917.72,600.42 918.68,599.95 919.64,600.82 920.60,601.74 920.60,617.26 919.64,618.18 918.68,619.05 917.72,618.58 916.76,619.39 915.80,617.07" fill="#d8efe2" />
<rect x="915.80" y="609.15" width="4.80" height="0.70" fill="#c2d7cb"/>
<rect x="914.30" y="640.50" width="7.60" height="29.80" fill="#1e2a24" rx="2.5"/>
<rect x="914.80" y="641.00" width="6.60" height="28.80" fill="#439266" rx="2.2"/>
<rect x="915.40" y="645.00" width="5.60" height="4.00" fill="#d8efe2"/>
</g>
<linearGradient id="lsh" x1="0" x2="1" y1="0" y2="0"><stop offset="0" stop-color="#000" stop-opacity="0.45"/><stop offset="1" stop-color="#000" stop-opacity="0"/></linearGradient>
<rect x="145.20" y="226.00" width="7.00" height="423.00" fill="url(#lsh)"/>
<rect x="1157.50" y="200.60" width="51.00" height="448.40" fill="#17171a" opacity="0.5"/>
<rect x="145.00" y="648.70" width="1063.50" height="8.40" fill="#2d2d32"/>
<rect x="195.20" y="649.20" width="511.40" height="6.20" fill="#141417" rx="3.1"/>
<rect x="195.80" y="649.80" width="510.20" height="5.00" fill="#5b5e66" rx="2.5"/>
<rect x="1208.50" y="200.50" width="9.00" height="457.00" fill="#2f2f35"/>
<rect x="1208.50" y="200.50" width="9.00" height="28.40" fill="#2a2a2f"/>
<rect x="1210.40" y="241.50" width="4.40" height="140.20" fill="#686a72" rx="2.2"/>
<rect x="1210.40" y="386.20" width="4.40" height="201.00" fill="#5d6068" rx="2.2"/>
<rect x="1208.50" y="382.20" width="9.00" height="3.00" fill="#151518"/>
<rect x="1208.50" y="648.80" width="9.00" height="8.30" fill="#26262b"/>
<rect x="0.00" y="657.00" width="1332.00" height="9.00" fill="#19191c"/>
<rect x="540.80" y="657.00" width="85.40" height="9.00" fill="#030304"/>
<rect x="404.60" y="663.20" width="9.00" height="3.00" fill="#46464b" rx="0.8"/>
<rect x="494.00" y="663.40" width="8.40" height="3.00" fill="none" stroke="#46464b" stroke-width="1"/>
<rect x="498.40" y="662.00" width="1.00" height="4.00" fill="#46464b"/>
<path d="M669.6 661.4 l0.6 1.2 1.2 0.6 -1.2 0.6 -0.6 1.2 -0.6 -1.2 -1.2 -0.6 1.2 -0.6z" fill="#6a6a70" stroke="none" stroke-width="1" />
<path d="M664.6 664.4 L668.6 662.6 L669.2 666 L665 666 Z" fill="#4a4a50" stroke="none" stroke-width="1" />
<path d="M756.4 661.4 l0.6 1.2 1.2 0.6 -1.2 0.6 -0.6 1.2 -0.6 -1.2 -1.2 -0.6 1.2 -0.6z" fill="#6a6a70" stroke="none" stroke-width="1" />
<path d="M751.4 664.4 L755.4 662.6 L756.0 666 L751.8 666 Z" fill="#4a4a50" stroke="none" stroke-width="1" />
<path d="M838.6 666 L843.4 662.6 V666 Z" fill="#4a4a50" stroke="none" stroke-width="1" />
<path d="M925.6 666 L931.6 661.8 L932.6 663.4 L929 666 Z" fill="#4a4a50" stroke="none" stroke-width="1" />
<rect x="579.00" y="663.40" width="9.00" height="3.00" fill="#3a7fd0" rx="0.8"/>
<rect x="583.00" y="661.60" width="1.40" height="3.00" fill="#d8463a"/>
<rect x="1217.50" y="200.50" width="114.50" height="457.00" fill="#28282e"/>
<rect x="1216.90" y="200.50" width="1.20" height="457.00" fill="#141417"/>
<rect x="1217.50" y="221.20" width="114.50" height="1.00" fill="#141417"/>
<rect x="1217.50" y="222.20" width="47.50" height="2.20" fill="#3f9a62"/>
<rect x="1265.60" y="222.20" width="47.50" height="2.20" fill="#3f9a62"/>
<rect x="1313.70" y="222.20" width="18.30" height="2.20" fill="#d9a520"/>
<rect x="1217.50" y="241.80" width="114.50" height="1.00" fill="#141417"/>
<rect x="1217.50" y="259.80" width="114.50" height="1.00" fill="#141417"/>
<rect x="1217.50" y="317.60" width="114.50" height="1.00" fill="#141417"/>
<rect x="1217.50" y="333.60" width="114.50" height="1.00" fill="#141417"/>
<rect x="1217.50" y="354.60" width="114.50" height="1.00" fill="#141417"/>
<rect x="1265.00" y="224.40" width="1.20" height="424.00" fill="#141417"/>
<rect x="1313.10" y="224.40" width="1.20" height="424.00" fill="#141417"/>
<rect x="1249.90" y="253.20" width="1.10" height="1.20" fill="#5c5c62"/>
<rect x="1252.00" y="251.50" width="1.10" height="2.90" fill="#5c5c62"/>
<rect x="1254.10" y="249.80" width="1.10" height="4.60" fill="#5c5c62"/>
<rect x="1256.20" y="248.10" width="1.10" height="6.30" fill="#5c5c62"/>
<rect x="1258.30" y="246.40" width="1.10" height="8.00" fill="#5c5c62"/>
<rect x="1220.50" y="265.60" width="41.20" height="41.00" fill="#2b2b31" rx="3" stroke="#17171a" stroke-width="1.3"/>
<rect x="1240.10" y="266.40" width="0.90" height="39.60" fill="#3a3a40"/>
<rect x="1221.30" y="285.90" width="39.60" height="0.90" fill="#3a3a40"/>
<circle cx="1224.1" cy="269" r="1.5" fill="#8fd04a"/><circle cx="1258.7" cy="269" r="1.5" fill="#8fd04a"/>
<rect x="1238.90" y="267.40" width="3.40" height="3.40" fill="#2ca8e0"/>
<rect x="1220.70" y="308.80" width="40.80" height="2.80" fill="#202024" rx="1.2" stroke="#17171a" stroke-width="0.8"/>
<rect x="1224.70" y="338.80" width="12.00" height="11.40" fill="none" rx="1.2" stroke="#707076" stroke-width="1"/>
<rect x="1244.50" y="338.80" width="12.00" height="11.40" fill="none" rx="1.2" stroke="#707076" stroke-width="1"/>
<rect x="1227.70" y="372.80" width="1.60" height="269.40" fill="#141417"/>
<rect x="1220.10" y="372.85" width="3.20" height="0.90" fill="#6a6a70"/>
<rect x="1220.10" y="444.95" width="3.20" height="0.90" fill="#6a6a70"/>
<rect x="1220.10" y="475.55" width="3.20" height="0.90" fill="#55555a"/>
<rect x="1220.10" y="508.55" width="3.20" height="0.90" fill="#55555a"/>
<rect x="1220.10" y="535.55" width="3.20" height="0.90" fill="#4a4a50"/>
<rect x="1220.10" y="563.15" width="3.20" height="0.90" fill="#55555a"/>
<rect x="1220.10" y="583.55" width="3.20" height="0.90" fill="#4a4a50"/>
<rect x="1220.10" y="607.85" width="3.20" height="0.90" fill="#77777c"/>
<rect x="1220.10" y="617.55" width="3.20" height="0.90" fill="#4a4a50"/>
<rect x="1220.10" y="626.95" width="3.20" height="0.90" fill="#77777c"/>
<rect x="1220.10" y="630.55" width="3.20" height="0.90" fill="#4a4a50"/>
<rect x="1220.10" y="635.55" width="3.20" height="0.90" fill="#4a4a50"/>
<rect x="1220.10" y="641.05" width="3.20" height="0.90" fill="#77777c"/>
<rect x="1224.30" y="438.60" width="8.60" height="14.20" fill="#a9a9ab" rx="1" stroke="#1a1a1d" stroke-width="0.6"/>
<rect x="1224.70" y="444.80" width="7.80" height="1.10" fill="#3a3a3e"/>
<rect x="1224.70" y="439.20" width="7.80" height="1.60" fill="#c6c6c8"/>
<rect x="1219.90" y="445.00" width="3.20" height="1.10" fill="#d8d8d8"/>
<rect x="1249.30" y="367.20" width="10.40" height="2.60" fill="#1a1a1d" rx="0.8"/>
<rect x="1249.20" y="372.80" width="10.40" height="272.60" fill="#2a2a30" stroke="#131316" stroke-width="1.1"/>
<rect x="1253.90" y="372.80" width="1.10" height="272.60" fill="#131316"/>
<rect x="1245.90" y="373.20" width="1.80" height="0.90" fill="#4a4a50"/>
<rect x="1245.90" y="407.70" width="1.80" height="0.90" fill="#4a4a50"/>
<rect x="1245.90" y="441.30" width="1.80" height="0.90" fill="#4a4a50"/>
<rect x="1245.90" y="475.50" width="1.80" height="0.90" fill="#4a4a50"/>
<rect x="1245.90" y="509.00" width="1.80" height="0.90" fill="#4a4a50"/>
<rect x="1245.90" y="563.60" width="1.80" height="0.90" fill="#4a4a50"/>
<rect x="1245.90" y="604.90" width="1.80" height="0.90" fill="#4a4a50"/>
<rect x="1245.90" y="624.80" width="1.80" height="0.90" fill="#4a4a50"/>
<rect x="1298.00" y="253.20" width="1.10" height="1.20" fill="#5c5c62"/>
<rect x="1300.10" y="251.50" width="1.10" height="2.90" fill="#5c5c62"/>
<rect x="1302.20" y="249.80" width="1.10" height="4.60" fill="#5c5c62"/>
<rect x="1304.30" y="248.10" width="1.10" height="6.30" fill="#5c5c62"/>
<rect x="1306.40" y="246.40" width="1.10" height="8.00" fill="#5c5c62"/>
<rect x="1268.60" y="265.60" width="41.20" height="41.00" fill="#2b2b31" rx="3" stroke="#17171a" stroke-width="1.3"/>
<rect x="1288.20" y="266.40" width="0.90" height="39.60" fill="#3a3a40"/>
<rect x="1269.40" y="285.90" width="39.60" height="0.90" fill="#3a3a40"/>
<circle cx="1272.1999999999998" cy="269" r="1.5" fill="#8fd04a"/><circle cx="1306.8" cy="269" r="1.5" fill="#8fd04a"/>
<rect x="1287.00" y="267.40" width="3.40" height="3.40" fill="#2ca8e0"/>
<rect x="1268.80" y="308.80" width="40.80" height="2.80" fill="#202024" rx="1.2" stroke="#17171a" stroke-width="0.8"/>
<rect x="1272.80" y="338.80" width="12.00" height="11.40" fill="none" rx="1.2" stroke="#707076" stroke-width="1"/>
<rect x="1292.60" y="338.80" width="12.00" height="11.40" fill="none" rx="1.2" stroke="#707076" stroke-width="1"/>
<rect x="1275.80" y="372.80" width="1.60" height="269.40" fill="#141417"/>
<rect x="1268.20" y="372.85" width="3.20" height="0.90" fill="#6a6a70"/>
<rect x="1268.20" y="444.95" width="3.20" height="0.90" fill="#6a6a70"/>
<rect x="1268.20" y="475.55" width="3.20" height="0.90" fill="#55555a"/>
<rect x="1268.20" y="508.55" width="3.20" height="0.90" fill="#55555a"/>
<rect x="1268.20" y="535.55" width="3.20" height="0.90" fill="#4a4a50"/>
<rect x="1268.20" y="563.15" width="3.20" height="0.90" fill="#55555a"/>
<rect x="1268.20" y="583.55" width="3.20" height="0.90" fill="#4a4a50"/>
<rect x="1268.20" y="607.85" width="3.20" height="0.90" fill="#77777c"/>
<rect x="1268.20" y="617.55" width="3.20" height="0.90" fill="#4a4a50"/>
<rect x="1268.20" y="626.95" width="3.20" height="0.90" fill="#77777c"/>
<rect x="1268.20" y="630.55" width="3.20" height="0.90" fill="#4a4a50"/>
<rect x="1268.20" y="635.55" width="3.20" height="0.90" fill="#4a4a50"/>
<rect x="1268.20" y="641.05" width="3.20" height="0.90" fill="#77777c"/>
<rect x="1272.40" y="438.60" width="8.60" height="14.20" fill="#a9a9ab" rx="1" stroke="#1a1a1d" stroke-width="0.6"/>
<rect x="1272.80" y="444.80" width="7.80" height="1.10" fill="#3a3a3e"/>
<rect x="1272.80" y="439.20" width="7.80" height="1.60" fill="#c6c6c8"/>
<rect x="1268.00" y="445.00" width="3.20" height="1.10" fill="#d8d8d8"/>
<rect x="1297.40" y="367.20" width="10.40" height="2.60" fill="#1a1a1d" rx="0.8"/>
<rect x="1297.30" y="372.80" width="10.40" height="272.60" fill="#2a2a30" stroke="#131316" stroke-width="1.1"/>
<rect x="1302.00" y="372.80" width="1.10" height="272.60" fill="#131316"/>
<rect x="1294.00" y="373.20" width="1.80" height="0.90" fill="#4a4a50"/>
<rect x="1294.00" y="407.70" width="1.80" height="0.90" fill="#4a4a50"/>
<rect x="1294.00" y="441.30" width="1.80" height="0.90" fill="#4a4a50"/>
<rect x="1294.00" y="475.50" width="1.80" height="0.90" fill="#4a4a50"/>
<rect x="1294.00" y="509.00" width="1.80" height="0.90" fill="#4a4a50"/>
<rect x="1294.00" y="563.60" width="1.80" height="0.90" fill="#4a4a50"/>
<rect x="1294.00" y="604.90" width="1.80" height="0.90" fill="#4a4a50"/>
<rect x="1294.00" y="624.80" width="1.80" height="0.90" fill="#4a4a50"/>
<rect x="1326.30" y="338.80" width="12.00" height="11.40" fill="none" rx="1.2" stroke="#5a5a60" stroke-width="1"/>
<rect x="1323.90" y="372.80" width="1.60" height="269.40" fill="#141417"/>
<rect x="1316.30" y="372.85" width="3.20" height="0.90" fill="#6a6a70"/>
<rect x="1316.30" y="444.95" width="3.20" height="0.90" fill="#6a6a70"/>
<rect x="1316.30" y="475.55" width="3.20" height="0.90" fill="#55555a"/>
<rect x="1316.30" y="508.55" width="3.20" height="0.90" fill="#55555a"/>
<rect x="1316.30" y="535.55" width="3.20" height="0.90" fill="#4a4a50"/>
<rect x="1316.30" y="563.15" width="3.20" height="0.90" fill="#55555a"/>
<rect x="1316.30" y="583.55" width="3.20" height="0.90" fill="#4a4a50"/>
<rect x="1316.30" y="607.85" width="3.20" height="0.90" fill="#77777c"/>
<rect x="1316.30" y="617.55" width="3.20" height="0.90" fill="#4a4a50"/>
<rect x="1316.30" y="626.95" width="3.20" height="0.90" fill="#77777c"/>
<rect x="1316.30" y="630.55" width="3.20" height="0.90" fill="#4a4a50"/>
<rect x="1316.30" y="635.55" width="3.20" height="0.90" fill="#4a4a50"/>
<rect x="1316.30" y="641.05" width="3.20" height="0.90" fill="#77777c"/>
<rect x="1320.50" y="438.60" width="8.60" height="14.20" fill="#a9a9ab" rx="1" stroke="#1a1a1d" stroke-width="0.6"/>
<rect x="1320.90" y="444.80" width="7.80" height="1.10" fill="#3a3a3e"/>
<rect x="1320.90" y="439.20" width="7.80" height="1.60" fill="#c6c6c8"/>
<rect x="1316.10" y="445.00" width="3.20" height="1.10" fill="#d8d8d8"/>
<linearGradient id="msh" x1="0" x2="1" y1="0" y2="0"><stop offset="0" stop-color="#000" stop-opacity="0"/><stop offset="1" stop-color="#000" stop-opacity="0.35"/></linearGradient>
<rect x="1301.70" y="224.40" width="12.00" height="433.00" fill="url(#msh)"/>
<rect x="1217.50" y="648.60" width="114.50" height="8.50" fill="#26262b"/>
<rect x="1218.00" y="649.60" width="22.20" height="5.40" fill="#696b73" rx="2.7"/>
</svg>
<div style="left:-3.00px;top:1.60px;font-size:8px;line-height:9.60px;color:#ccc;font-weight:bold;white-space:nowrap;">%</div>
<div style="left:28.60px;top:1.52px;font-size:8.3px;line-height:9.96px;color:#cfcfd2;font-weight:bold;white-space:nowrap;letter-spacing:0.35px">00:02:28:00</div>
<div style="left:642.00px;top:1.02px;font-size:9.3px;line-height:11.16px;color:#f0f0f0;font-weight:bold;white-space:nowrap;">Timeline 1</div>
<div style="left:1232.00px;top:1.34px;font-size:8.6px;line-height:10.32px;color:#e8e8e8;font-weight:bold;white-space:nowrap;">01:00:40:22</div>
<div style="left:1317.20px;top:177.00px;font-size:7px;line-height:8.40px;color:#2a2a2e;font-weight:bold;white-space:nowrap;">DIM</div>
<div style="left:182.50px;top:209.88px;font-size:7.7px;line-height:9.24px;color:#5a5a60;font-weight:normal;white-space:nowrap;letter-spacing:0.02px">01:00:18:00</div>
<div style="left:318.15px;top:209.88px;font-size:7.7px;line-height:9.24px;color:#5a5a60;font-weight:normal;white-space:nowrap;letter-spacing:0.02px">01:00:36:00</div>
<div style="left:453.80px;top:209.88px;font-size:7.7px;line-height:9.24px;color:#5a5a60;font-weight:normal;white-space:nowrap;letter-spacing:0.02px">01:00:54:00</div>
<div style="left:589.45px;top:209.88px;font-size:7.7px;line-height:9.24px;color:#5a5a60;font-weight:normal;white-space:nowrap;letter-spacing:0.02px">01:01:12:00</div>
<div style="left:725.10px;top:209.88px;font-size:7.7px;line-height:9.24px;color:#5a5a60;font-weight:normal;white-space:nowrap;letter-spacing:0.02px">01:01:30:00</div>
<div style="left:860.75px;top:209.88px;font-size:7.7px;line-height:9.24px;color:#5a5a60;font-weight:normal;white-space:nowrap;letter-spacing:0.02px">01:01:48:00</div>
<div style="left:996.40px;top:209.88px;font-size:7.7px;line-height:9.24px;color:#5a5a60;font-weight:normal;white-space:nowrap;letter-spacing:0.02px">01:02:06:00</div>
<div style="left:1132.05px;top:209.88px;font-size:7.7px;line-height:9.24px;color:#47474c;font-weight:normal;white-space:nowrap;letter-spacing:0.02px">01:02:24:00</div>
<div style="left:3.80px;top:223.44px;font-size:9.6px;line-height:11.52px;color:#e8e8e8;font-weight:bold;white-space:nowrap;">V4</div>
<div style="left:30.20px;top:223.67px;font-size:9.55px;line-height:11.46px;color:#d4d4d6;font-weight:normal;white-space:nowrap;">Video 4</div>
<div style="left:3.80px;top:264.94px;font-size:9.6px;line-height:11.52px;color:#e8e8e8;font-weight:bold;white-space:nowrap;">V3</div>
<div style="left:30.20px;top:265.17px;font-size:9.55px;line-height:11.46px;color:#d4d4d6;font-weight:normal;white-space:nowrap;">Video 3</div>
<div style="left:3.80px;top:305.94px;font-size:9.6px;line-height:11.52px;color:#e8e8e8;font-weight:bold;white-space:nowrap;">V2</div>
<div style="left:30.20px;top:306.17px;font-size:9.55px;line-height:11.46px;color:#d4d4d6;font-weight:normal;white-space:nowrap;">Video 2</div>
<div style="left:-90.40px;width:200px;text-align:center;top:346.74px;font-size:9.6px;line-height:11.52px;color:#6c6c72;font-weight:normal;white-space:nowrap;">V1</div>
<div style="left:30.20px;top:347.17px;font-size:9.55px;line-height:11.46px;color:#d4d4d6;font-weight:normal;white-space:nowrap;">Video 1</div>
<div style="left:-90.40px;width:200px;text-align:center;top:390.04px;font-size:9.6px;line-height:11.52px;color:#6c6c72;font-weight:normal;white-space:nowrap;">A1</div>
<div style="left:30.20px;top:390.47px;font-size:9.55px;line-height:11.46px;color:#d4d4d6;font-weight:normal;white-space:nowrap;">Audio 1</div>
<div style="left:-58.40px;width:200px;text-align:right;top:391.40px;font-size:8.0px;line-height:9.60px;color:#58585d;font-weight:normal;white-space:nowrap;">2.0</div>
<div style="left:-46.50px;width:200px;text-align:center;top:410.86px;font-size:8.4px;line-height:10.08px;color:#8e8e94;font-weight:normal;white-space:nowrap;">S</div>
<div style="left:-24.20px;width:200px;text-align:center;top:410.86px;font-size:8.4px;line-height:10.08px;color:#8e8e94;font-weight:normal;white-space:nowrap;">M</div>
<div style="left:3.60px;top:432.84px;font-size:9.6px;line-height:11.52px;color:#e8e8e8;font-weight:bold;white-space:nowrap;">A2</div>
<div style="left:30.20px;top:432.87px;font-size:9.55px;line-height:11.46px;color:#d4d4d6;font-weight:normal;white-space:nowrap;">Audio 2</div>
<div style="left:-58.40px;width:200px;text-align:right;top:433.80px;font-size:8.0px;line-height:9.60px;color:#58585d;font-weight:normal;white-space:nowrap;">2.0</div>
<div style="left:-46.50px;width:200px;text-align:center;top:453.26px;font-size:8.4px;line-height:10.08px;color:#8e8e94;font-weight:normal;white-space:nowrap;">S</div>
<div style="left:-24.20px;width:200px;text-align:center;top:453.26px;font-size:8.4px;line-height:10.08px;color:#8e8e94;font-weight:normal;white-space:nowrap;">M</div>
<div style="left:3.60px;top:475.34px;font-size:9.6px;line-height:11.52px;color:#e8e8e8;font-weight:bold;white-space:nowrap;">A3</div>
<div style="left:30.20px;top:475.37px;font-size:9.55px;line-height:11.46px;color:#d4d4d6;font-weight:normal;white-space:nowrap;">Audio 3</div>
<div style="left:-58.40px;width:200px;text-align:right;top:476.30px;font-size:8.0px;line-height:9.60px;color:#58585d;font-weight:normal;white-space:nowrap;">1.0</div>
<div style="left:-46.50px;width:200px;text-align:center;top:495.76px;font-size:8.4px;line-height:10.08px;color:#8e8e94;font-weight:normal;white-space:nowrap;">S</div>
<div style="left:-24.20px;width:200px;text-align:center;top:495.76px;font-size:8.4px;line-height:10.08px;color:#8e8e94;font-weight:normal;white-space:nowrap;">M</div>
<div style="left:3.60px;top:517.84px;font-size:9.6px;line-height:11.52px;color:#e8e8e8;font-weight:bold;white-space:nowrap;">A4</div>
<div style="left:30.20px;top:517.87px;font-size:9.55px;line-height:11.46px;color:#d4d4d6;font-weight:normal;white-space:nowrap;">Audio 4</div>
<div style="left:-58.40px;width:200px;text-align:right;top:518.80px;font-size:8.0px;line-height:9.60px;color:#58585d;font-weight:normal;white-space:nowrap;">2.0</div>
<div style="left:-46.50px;width:200px;text-align:center;top:538.26px;font-size:8.4px;line-height:10.08px;color:#8e8e94;font-weight:normal;white-space:nowrap;">S</div>
<div style="left:-24.20px;width:200px;text-align:center;top:538.26px;font-size:8.4px;line-height:10.08px;color:#8e8e94;font-weight:normal;white-space:nowrap;">M</div>
<div style="left:3.60px;top:560.34px;font-size:9.6px;line-height:11.52px;color:#e8e8e8;font-weight:bold;white-space:nowrap;">A5</div>
<div style="left:30.20px;top:560.37px;font-size:9.55px;line-height:11.46px;color:#d4d4d6;font-weight:normal;white-space:nowrap;">Audio 5</div>
<div style="left:-58.40px;width:200px;text-align:right;top:561.30px;font-size:8.0px;line-height:9.60px;color:#58585d;font-weight:normal;white-space:nowrap;">2.0</div>
<div style="left:-46.50px;width:200px;text-align:center;top:580.76px;font-size:8.4px;line-height:10.08px;color:#8e8e94;font-weight:normal;white-space:nowrap;">S</div>
<div style="left:-24.20px;width:200px;text-align:center;top:580.76px;font-size:8.4px;line-height:10.08px;color:#8e8e94;font-weight:normal;white-space:nowrap;">M</div>
<div style="left:3.60px;top:602.84px;font-size:9.6px;line-height:11.52px;color:#e8e8e8;font-weight:bold;white-space:nowrap;">A6</div>
<div style="left:30.20px;top:602.87px;font-size:9.55px;line-height:11.46px;color:#d4d4d6;font-weight:normal;white-space:nowrap;">Audio 6</div>
<div style="left:-58.40px;width:200px;text-align:right;top:603.80px;font-size:8.0px;line-height:9.60px;color:#58585d;font-weight:normal;white-space:nowrap;">2.0</div>
<div style="left:-46.50px;width:200px;text-align:center;top:623.26px;font-size:8.4px;line-height:10.08px;color:#8e8e94;font-weight:normal;white-space:nowrap;">S</div>
<div style="left:-24.20px;width:200px;text-align:center;top:623.26px;font-size:8.4px;line-height:10.08px;color:#8e8e94;font-weight:normal;white-space:nowrap;">M</div>
<div style="left:3.60px;top:645.34px;font-size:9.6px;line-height:11.52px;color:#e8e8e8;font-weight:bold;white-space:nowrap;">A7</div>
<div style="left:30.20px;top:645.37px;font-size:9.55px;line-height:11.46px;color:#d4d4d6;font-weight:normal;white-space:nowrap;">Audio 7</div>
<div style="left:-58.40px;width:200px;text-align:right;top:646.30px;font-size:8.0px;line-height:9.60px;color:#58585d;font-weight:normal;white-space:nowrap;">2.0</div>
<div style="left:-46.50px;width:200px;text-align:center;top:665.76px;font-size:8.4px;line-height:10.08px;color:#8e8e94;font-weight:normal;white-space:nowrap;">S</div>
<div style="left:-24.20px;width:200px;text-align:center;top:665.76px;font-size:8.4px;line-height:10.08px;color:#8e8e94;font-weight:normal;white-space:nowrap;">M</div>
<div style="left:0.00px;top:200.60px;width:144.00px;height:28.60px;background:#212125;border-bottom:1px solid #131316;"></div>
<div style="left:20.40px;top:206.48px;font-size:15.2px;line-height:18.24px;color:#e4e4e4;font-weight:normal;white-space:nowrap;letter-spacing:0.15px">01:00:40:22</div>
<div style="left:0.00px;top:648.40px;width:144.00px;height:8.60px;background:#2f2f33;"></div>
<div style="left:773.80px;top:287.22px;font-size:8.3px;line-height:9.96px;color:#e9eef4;font-weight:normal;white-space:nowrap;">MVI...</div>
<div style="left:947.80px;top:287.22px;font-size:8.3px;line-height:9.96px;color:#e9eef4;font-weight:normal;white-space:nowrap;">O...</div>
<div style="left:1002.70px;top:287.22px;font-size:8.3px;line-height:9.96px;color:#e9eef4;font-weight:normal;white-space:nowrap;">O...</div>
<div style="left:1041.90px;top:287.22px;font-size:8.3px;line-height:9.96px;color:#e9eef4;font-weight:normal;white-space:nowrap;">O...</div>
<div style="left:202.90px;top:328.42px;font-size:8.3px;line-height:9.96px;color:#e9eef4;font-weight:normal;white-space:nowrap;">MVI...</div>
<div style="left:291.80px;top:328.42px;font-size:8.3px;line-height:9.96px;color:#e9eef4;font-weight:normal;white-space:nowrap;">MVI...</div>
<div style="left:411.60px;top:328.42px;font-size:8.3px;line-height:9.96px;color:#e9eef4;font-weight:normal;white-space:nowrap;">MV...</div>
<div style="left:470.50px;top:328.42px;font-size:8.3px;line-height:9.96px;color:#e9eef4;font-weight:normal;white-space:nowrap;">MVI...</div>
<div style="left:919.70px;top:328.42px;font-size:8.3px;line-height:9.96px;color:#e9eef4;font-weight:normal;white-space:nowrap;">O...</div>
<div style="left:947.80px;top:328.42px;font-size:8.3px;line-height:9.96px;color:#e9eef4;font-weight:normal;white-space:nowrap;">Ove...</div>
<div style="left:1011.70px;top:328.42px;font-size:8.3px;line-height:9.96px;color:#e9eef4;font-weight:normal;white-space:nowrap;">Over...</div>
<div style="left:1079.60px;top:328.42px;font-size:8.3px;line-height:9.96px;color:#e9eef4;font-weight:normal;white-space:nowrap;">Over...</div>
<div style="left:165.60px;top:369.92px;font-size:8.3px;line-height:9.96px;color:#dfe8f2;font-weight:normal;white-space:nowrap;">Ba...</div>
<div style="left:191.80px;top:369.92px;font-size:8.3px;line-height:9.96px;color:#dfe8f2;font-weight:normal;white-space:nowrap;letter-spacing:-0.05px">Basement Black and White.MP4</div>
<div style="left:653.60px;top:369.92px;font-size:8.3px;line-height:9.96px;color:#dfe8f2;font-weight:normal;white-space:nowrap;letter-spacing:-0.05px">Basement Black and White.MP4</div>
<div style="left:948.00px;top:369.08px;font-size:8.2px;line-height:9.84px;color:#f4f1ea;font-weight:normal;white-space:nowrap;">Title C...</div>
<div style="left:1031.70px;top:369.08px;font-size:8.2px;line-height:9.84px;color:#f4f1ea;font-weight:normal;white-space:nowrap;">Title C...</div>
<div style="left:1079.80px;top:369.08px;font-size:8.2px;line-height:9.84px;color:#f4f1ea;font-weight:normal;white-space:nowrap;">Title C...</div>
<div style="left:148.40px;top:498.24px;font-size:8.6px;line-height:10.32px;color:#e4efe8;font-weight:normal;white-space:nowrap;">H...</div>
<div style="left:202.60px;top:498.36px;font-size:8.4px;line-height:10.08px;color:#e4efe8;font-weight:normal;white-space:nowrap;">Hor...</div>
<div style="left:232.43px;top:498.36px;font-size:8.4px;line-height:10.08px;color:#e4efe8;font-weight:normal;white-space:nowrap;">Hor...</div>
<div style="left:262.26px;top:498.36px;font-size:8.4px;line-height:10.08px;color:#e4efe8;font-weight:normal;white-space:nowrap;">Horr...</div>
<div style="left:292.09px;top:498.36px;font-size:8.4px;line-height:10.08px;color:#e4efe8;font-weight:normal;white-space:nowrap;">Hor...</div>
<div style="left:321.92px;top:498.36px;font-size:8.4px;line-height:10.08px;color:#e4efe8;font-weight:normal;white-space:nowrap;">Hor...</div>
<div style="left:351.75px;top:498.36px;font-size:8.4px;line-height:10.08px;color:#e4efe8;font-weight:normal;white-space:nowrap;">Horr...</div>
<div style="left:381.58px;top:498.36px;font-size:8.4px;line-height:10.08px;color:#e4efe8;font-weight:normal;white-space:nowrap;">Hor...</div>
<div style="left:411.41px;top:498.36px;font-size:8.4px;line-height:10.08px;color:#e4efe8;font-weight:normal;white-space:nowrap;">Hor...</div>
<div style="left:441.24px;top:498.36px;font-size:8.4px;line-height:10.08px;color:#e4efe8;font-weight:normal;white-space:nowrap;">Horr...</div>
<div style="left:471.07px;top:498.36px;font-size:8.4px;line-height:10.08px;color:#e4efe8;font-weight:normal;white-space:nowrap;">Hor...</div>
<div style="left:500.90px;top:498.36px;font-size:8.4px;line-height:10.08px;color:#e4efe8;font-weight:normal;white-space:nowrap;">Horr...</div>
<div style="left:530.73px;top:498.36px;font-size:8.4px;line-height:10.08px;color:#e4efe8;font-weight:normal;white-space:nowrap;">Hor...</div>
<div style="left:560.56px;top:498.36px;font-size:8.4px;line-height:10.08px;color:#e4efe8;font-weight:normal;white-space:nowrap;">Hor...</div>
<div style="left:590.39px;top:498.36px;font-size:8.4px;line-height:10.08px;color:#e4efe8;font-weight:normal;white-space:nowrap;">Horr...</div>
<div style="left:620.22px;top:498.36px;font-size:8.4px;line-height:10.08px;color:#e4efe8;font-weight:normal;white-space:nowrap;">Hor...</div>
<div style="left:650.05px;top:498.36px;font-size:8.4px;line-height:10.08px;color:#e4efe8;font-weight:normal;white-space:nowrap;">Hor...</div>
<div style="left:679.88px;top:498.36px;font-size:8.4px;line-height:10.08px;color:#e4efe8;font-weight:normal;white-space:nowrap;">Horr...</div>
<div style="left:709.71px;top:498.36px;font-size:8.4px;line-height:10.08px;color:#e4efe8;font-weight:normal;white-space:nowrap;">Hor...</div>
<div style="left:739.54px;top:498.36px;font-size:8.4px;line-height:10.08px;color:#e4efe8;font-weight:normal;white-space:nowrap;">Hor...</div>
<div style="left:769.37px;top:498.36px;font-size:8.4px;line-height:10.08px;color:#e4efe8;font-weight:normal;white-space:nowrap;">Horr...</div>
<div style="left:799.20px;top:498.36px;font-size:8.4px;line-height:10.08px;color:#e4efe8;font-weight:normal;white-space:nowrap;">Hor...</div>
<div style="left:829.03px;top:498.36px;font-size:8.4px;line-height:10.08px;color:#e4efe8;font-weight:normal;white-space:nowrap;">Hor...</div>
<div style="left:858.86px;top:498.36px;font-size:8.4px;line-height:10.08px;color:#e4efe8;font-weight:normal;white-space:nowrap;">Hor...</div>
<div style="left:888.69px;top:498.36px;font-size:8.4px;line-height:10.08px;color:#e4efe8;font-weight:normal;white-space:nowrap;">Ho...</div>
<div style="left:939.20px;top:499.01px;font-size:8.15px;line-height:9.78px;color:#e4efe8;font-weight:normal;white-space:nowrap;">03 A Small Spark vs. A Great Forest.mp3</div>
<div style="left:202.60px;top:540.96px;font-size:8.4px;line-height:10.08px;color:#e4efe8;font-weight:normal;white-space:nowrap;">Hor...</div>
<div style="left:262.90px;top:540.96px;font-size:8.4px;line-height:10.08px;color:#e4efe8;font-weight:normal;white-space:nowrap;">Hor...</div>
<div style="left:292.10px;top:540.96px;font-size:8.4px;line-height:10.08px;color:#e4efe8;font-weight:normal;white-space:nowrap;">Hor...</div>
<div style="left:330.60px;top:540.96px;font-size:8.4px;line-height:10.08px;color:#e4efe8;font-weight:normal;white-space:nowrap;">H...</div>
<div style="left:352.10px;top:540.96px;font-size:8.4px;line-height:10.08px;color:#e4efe8;font-weight:normal;white-space:nowrap;">Hor...</div>
<div style="left:410.80px;top:540.96px;font-size:8.4px;line-height:10.08px;color:#e4efe8;font-weight:normal;white-space:nowrap;">Hor...</div>
<div style="left:470.50px;top:540.96px;font-size:8.4px;line-height:10.08px;color:#e4efe8;font-weight:normal;white-space:nowrap;">Hor...</div>
<div style="left:505.20px;top:540.96px;font-size:8.4px;line-height:10.08px;color:#e4efe8;font-weight:normal;white-space:nowrap;">Hor...</div>
<div style="left:589.20px;top:540.96px;font-size:8.4px;line-height:10.08px;color:#e4efe8;font-weight:normal;white-space:nowrap;">Hor...</div>
<div style="left:773.50px;top:540.96px;font-size:8.4px;line-height:10.08px;color:#e4efe8;font-weight:normal;white-space:nowrap;">H...</div>
<div style="left:796.00px;top:540.96px;font-size:8.4px;line-height:10.08px;color:#e4efe8;font-weight:normal;white-space:nowrap;">Hor...</div>
<div style="left:828.70px;top:540.96px;font-size:8.4px;line-height:10.08px;color:#e4efe8;font-weight:normal;white-space:nowrap;">Horror Scary Huma...</div>
<div style="left:984.80px;top:540.96px;font-size:8.4px;line-height:10.08px;color:#e4efe8;font-weight:normal;white-space:nowrap;">Horro...</div>
<div style="left:1034.40px;top:540.96px;font-size:8.4px;line-height:10.08px;color:#e4efe8;font-weight:normal;white-space:nowrap;">Horr...</div>
<div style="left:1081.60px;top:540.96px;font-size:8.4px;line-height:10.08px;color:#e4efe8;font-weight:normal;white-space:nowrap;">Horr...</div>
<div style="left:1112.10px;top:540.96px;font-size:8.4px;line-height:10.08px;color:#e4efe8;font-weight:normal;white-space:nowrap;">Horr...</div>
<div style="left:165.80px;top:583.14px;font-size:8.6px;line-height:10.32px;color:#e4efe8;font-weight:normal;white-space:nowrap;">Le...</div>
<div style="left:191.80px;top:583.49px;font-size:8.35px;line-height:10.02px;color:#e4efe8;font-weight:normal;white-space:nowrap;">Leoforos Alexandras - Dan Bodan.mp3</div>
<div style="left:947.60px;top:583.86px;font-size:8.4px;line-height:10.08px;color:#e4efe8;font-weight:normal;white-space:nowrap;">Hor...</div>
<div style="left:994.50px;top:583.86px;font-size:8.4px;line-height:10.08px;color:#e4efe8;font-weight:normal;white-space:nowrap;">Horr...</div>
<div style="left:1039.50px;top:583.86px;font-size:8.4px;line-height:10.08px;color:#e4efe8;font-weight:normal;white-space:nowrap;">Hor...</div>
<div style="left:649.20px;top:625.79px;font-size:8.35px;line-height:10.02px;color:#e4efe8;font-weight:normal;white-space:nowrap;">Leoforos Alexandras - Dan Bodan.mp3</div>
<div style="left:1223.20px;top:205.82px;font-size:10.3px;line-height:12.36px;color:#ededed;font-weight:normal;white-space:nowrap;-webkit-text-stroke:0.35px #ededed">Mixer</div>
<div style="left:1140.95px;width:200px;text-align:center;top:229.12px;font-size:8.8px;line-height:10.56px;color:#dcdcdc;font-weight:normal;white-space:nowrap;">A1</div>
<div style="left:1235.90px;top:246.26px;font-size:7.9px;line-height:9.48px;color:#22b2de;font-weight:bold;white-space:nowrap;font-style:italic">EQ</div>
<div style="left:1140.95px;width:200px;text-align:center;top:319.84px;font-size:9.6px;line-height:11.52px;color:#e0a53a;font-weight:normal;white-space:nowrap;">Audio 1</div>
<div style="left:1130.80px;width:200px;text-align:center;top:340.24px;font-size:7.6px;line-height:9.12px;color:#a4a4aa;font-weight:normal;white-space:nowrap;">S</div>
<div style="left:1150.60px;width:200px;text-align:center;top:340.24px;font-size:7.6px;line-height:9.12px;color:#a4a4aa;font-weight:normal;white-space:nowrap;">M</div>
<div style="left:1224.70px;top:356.80px;font-size:8px;line-height:9.60px;color:#e0e0e0;font-weight:normal;white-space:nowrap;">0.0</div>
<div style="left:1042.90px;width:200px;text-align:right;top:369.02px;font-size:7.3px;line-height:8.76px;color:#626268;font-weight:normal;white-space:nowrap;">0</div>
<div style="left:1042.90px;width:200px;text-align:right;top:403.52px;font-size:7.3px;line-height:8.76px;color:#626268;font-weight:normal;white-space:nowrap;">-5</div>
<div style="left:1042.90px;width:200px;text-align:right;top:437.12px;font-size:7.3px;line-height:8.76px;color:#626268;font-weight:normal;white-space:nowrap;">-10</div>
<div style="left:1042.90px;width:200px;text-align:right;top:471.32px;font-size:7.3px;line-height:8.76px;color:#626268;font-weight:normal;white-space:nowrap;">-15</div>
<div style="left:1042.90px;width:200px;text-align:right;top:504.82px;font-size:7.3px;line-height:8.76px;color:#626268;font-weight:normal;white-space:nowrap;">-20</div>
<div style="left:1042.90px;width:200px;text-align:right;top:559.42px;font-size:7.3px;line-height:8.76px;color:#626268;font-weight:normal;white-space:nowrap;">-30</div>
<div style="left:1042.90px;width:200px;text-align:right;top:600.72px;font-size:7.3px;line-height:8.76px;color:#626268;font-weight:normal;white-space:nowrap;">-40</div>
<div style="left:1042.90px;width:200px;text-align:right;top:620.62px;font-size:7.3px;line-height:8.76px;color:#626268;font-weight:normal;white-space:nowrap;">-50</div>
<div style="left:1189.05px;width:200px;text-align:center;top:229.12px;font-size:8.8px;line-height:10.56px;color:#dcdcdc;font-weight:normal;white-space:nowrap;">A2</div>
<div style="left:1284.00px;top:246.26px;font-size:7.9px;line-height:9.48px;color:#22b2de;font-weight:bold;white-space:nowrap;font-style:italic">EQ</div>
<div style="left:1189.05px;width:200px;text-align:center;top:319.84px;font-size:9.6px;line-height:11.52px;color:#dadada;font-weight:normal;white-space:nowrap;">Audio 2</div>
<div style="left:1178.90px;width:200px;text-align:center;top:340.24px;font-size:7.6px;line-height:9.12px;color:#a4a4aa;font-weight:normal;white-space:nowrap;">S</div>
<div style="left:1198.70px;width:200px;text-align:center;top:340.24px;font-size:7.6px;line-height:9.12px;color:#a4a4aa;font-weight:normal;white-space:nowrap;">M</div>
<div style="left:1272.80px;top:356.80px;font-size:8px;line-height:9.60px;color:#e0e0e0;font-weight:normal;white-space:nowrap;">0.0</div>
<div style="left:1091.00px;width:200px;text-align:right;top:369.02px;font-size:7.3px;line-height:8.76px;color:#626268;font-weight:normal;white-space:nowrap;">0</div>
<div style="left:1091.00px;width:200px;text-align:right;top:403.52px;font-size:7.3px;line-height:8.76px;color:#626268;font-weight:normal;white-space:nowrap;">-5</div>
<div style="left:1091.00px;width:200px;text-align:right;top:437.12px;font-size:7.3px;line-height:8.76px;color:#626268;font-weight:normal;white-space:nowrap;">-10</div>
<div style="left:1091.00px;width:200px;text-align:right;top:471.32px;font-size:7.3px;line-height:8.76px;color:#626268;font-weight:normal;white-space:nowrap;">-15</div>
<div style="left:1091.00px;width:200px;text-align:right;top:504.82px;font-size:7.3px;line-height:8.76px;color:#626268;font-weight:normal;white-space:nowrap;">-20</div>
<div style="left:1091.00px;width:200px;text-align:right;top:559.42px;font-size:7.3px;line-height:8.76px;color:#626268;font-weight:normal;white-space:nowrap;">-30</div>
<div style="left:1091.00px;width:200px;text-align:right;top:600.72px;font-size:7.3px;line-height:8.76px;color:#626268;font-weight:normal;white-space:nowrap;">-40</div>
<div style="left:1091.00px;width:200px;text-align:right;top:620.62px;font-size:7.3px;line-height:8.76px;color:#626268;font-weight:normal;white-space:nowrap;">-50</div>
<div style="left:1323.30px;top:319.84px;font-size:9.6px;line-height:11.52px;color:#dadada;font-weight:normal;white-space:nowrap;">M</div>
<div style="left:1320.70px;top:356.80px;font-size:8px;line-height:9.60px;color:#e0e0e0;font-weight:normal;white-space:nowrap;">0.0</div>
<svg width="1332" height="666" viewBox="0 0 1332 666">
<rect x="349.90" y="208.00" width="2.30" height="441.00" fill="#7a2a24" opacity="0.55"/>
<rect x="350.30" y="208.00" width="1.50" height="441.00" fill="#c9473a"/>
<path d="M345.2 200.4 H356.4 V203.6 Q356.2 204.8 355.2 205.6 L351.6 209.4 Q350.8 210 350 209.4 L346.4 205.6 Q345.4 204.8 345.2 203.6 Z" fill="#e74c3c" stroke="none" stroke-width="1" />
</svg>
</div></body></html>
